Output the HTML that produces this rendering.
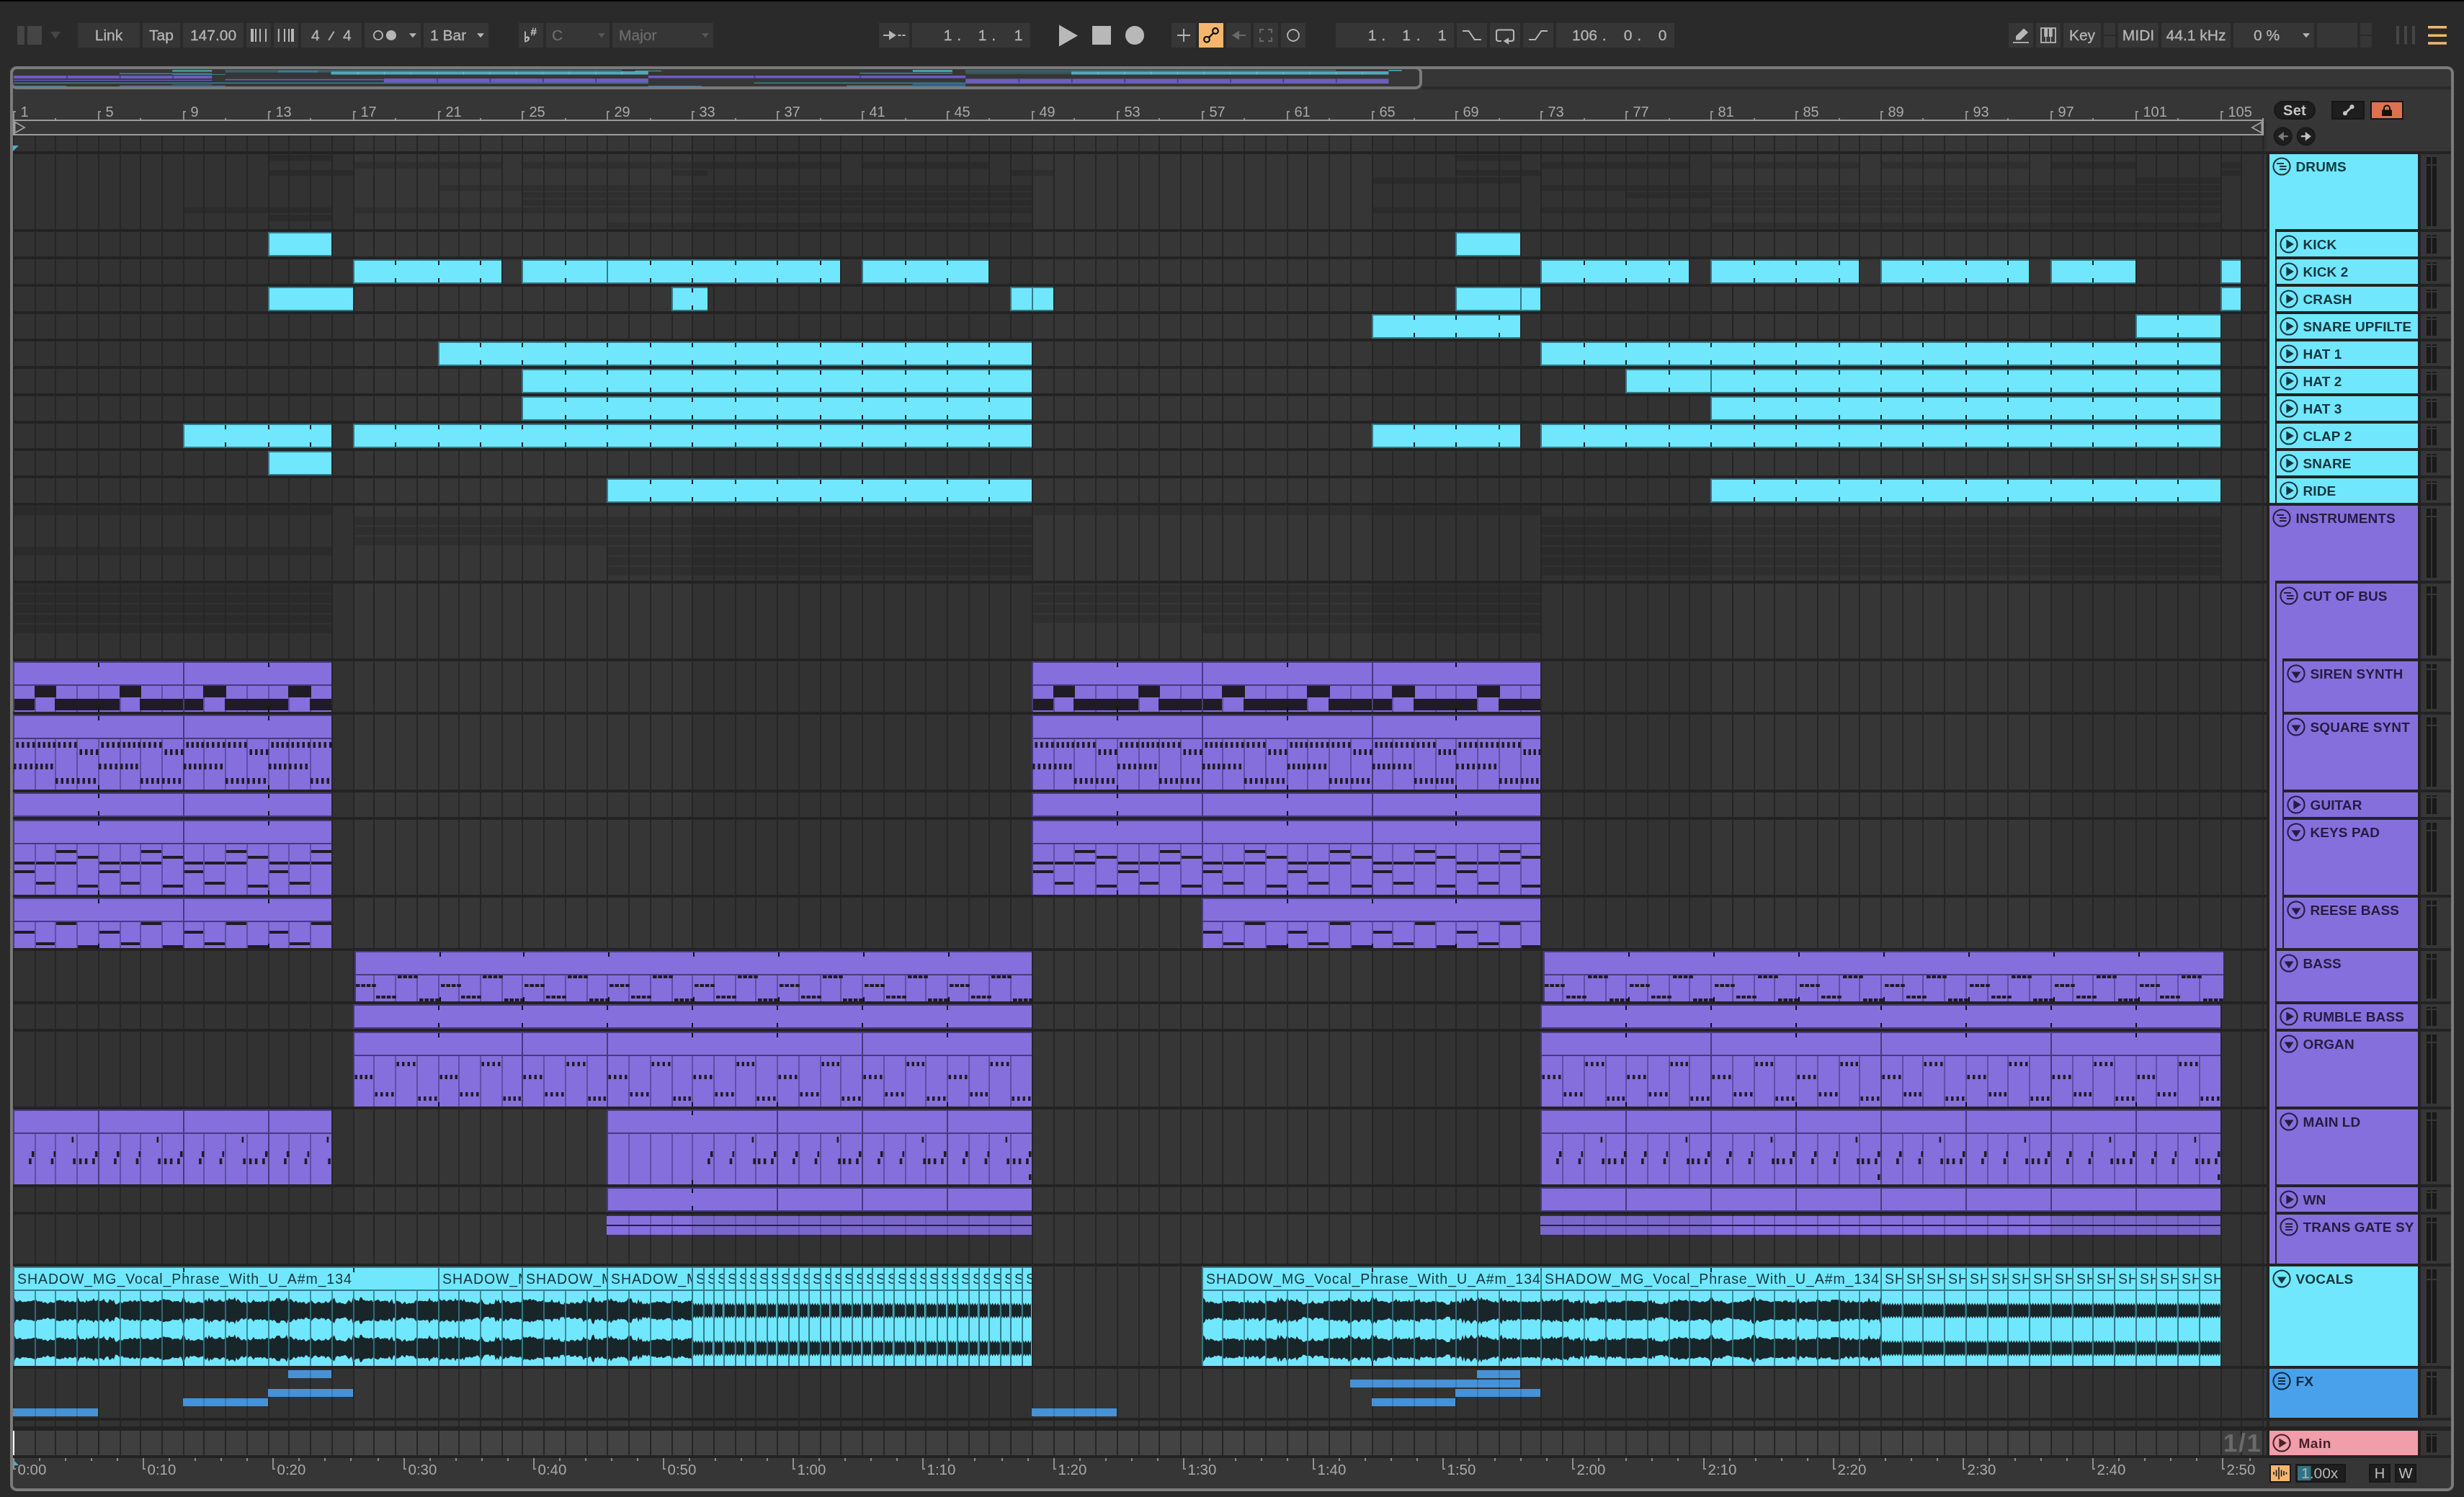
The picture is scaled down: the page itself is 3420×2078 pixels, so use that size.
<!DOCTYPE html><html><head><meta charset="utf-8"><title>Arrangement</title><style>

html,body{margin:0;padding:0;background:#2a2a2a;}
body{will-change:transform;width:3420px;height:2078px;position:relative;overflow:hidden;font-family:"Liberation Sans",sans-serif;color:#b6b6b6;}
.abs{position:absolute}
#top{position:absolute;left:0;top:0;width:3420px;height:92px;background:#2a2a2a}
#topline{position:absolute;left:0;top:0;width:3420px;height:2px;background:#000}
.b{position:absolute;top:32px;height:34px;background:#363636;font-size:21px;line-height:34px;text-align:center;white-space:nowrap;-webkit-text-stroke:0.3px currentColor}
.b span{position:absolute;top:0;line-height:33px}
.dim{color:#6c6c6c}
#frame{position:absolute;left:14px;top:92px;width:3392px;height:1978px;box-sizing:border-box;border:4px solid #7a7a7a;border-radius:9px;background:#363636}
#ovbox{position:absolute;left:14px;top:92px;width:1960px;height:32px;box-sizing:border-box;border:4px solid #7a7a7a;border-radius:9px}
#arr{position:absolute;left:0;top:0}
.rn{position:absolute;top:142.5px;font-size:20px;line-height:24px;color:#a9a9a9}
.tn{position:absolute;top:2027.5px;font-size:20.5px;line-height:24px;color:#a9a9a9}
.vl{position:absolute;top:1759px;height:32px;line-height:33px;font-size:19.5px;color:#15343c;white-space:nowrap;overflow:hidden;letter-spacing:0.93px}
.th{position:absolute;box-sizing:border-box;font-weight:bold;font-size:19px;white-space:nowrap;overflow:hidden}
.th b{position:absolute;font-weight:bold;letter-spacing:0.1px}
.m{position:absolute;width:6px;background:#1a1a1a}

</style></head><body>
<div id="frame"></div>
<svg id="arr" width="3420" height="2078" viewBox="0 0 3420 2078"><defs></defs><rect x="1973" y="120" width="1429" height="4" fill="#2b2b2b"/><rect x="19" y="105" width="275.25" height="4" fill="#6f5bc2" opacity="1"/><rect x="19" y="110.8" width="275.25" height="1.2" fill="#6f5bc2" opacity="1"/><rect x="19" y="114.6" width="880.8" height="1.2" fill="#3f9fb3" opacity="0.9"/><rect x="19" y="119" width="73.4" height="1.3" fill="#3b7db8" opacity="1"/><rect x="165.8" y="118.6" width="146.8" height="1.3" fill="#3b7db8" opacity="0.8"/><rect x="239.2" y="117.2" width="55.05" height="1.2" fill="#3b7db8" opacity="0.7"/><rect x="165.8" y="101.6" width="128.45" height="1.3" fill="#3f9fb3" opacity="0.9"/><rect x="239.2" y="97.4" width="55.05" height="2" fill="#4fb3c6" opacity="1"/><rect x="239.2" y="103" width="73.4" height="1" fill="#3f9fb3" opacity="0.7"/><rect x="312.6" y="97.4" width="146.8" height="1.1" fill="#3f9fb3" opacity="0.75"/><rect x="312.6" y="99.3" width="146.8" height="1.1" fill="#3f9fb3" opacity="0.6"/><rect x="386" y="98" width="55.05" height="2.6" fill="#3f9fb3" opacity="0.45"/><rect x="459.4" y="97" width="403.7" height="1" fill="#3f9fb3" opacity="0.8"/><rect x="459.4" y="99" width="440.4" height="4.5" fill="#4fb3c6" opacity="0.92"/><rect x="881.45" y="98" width="36.7" height="1" fill="#4fb3c6" opacity="0.9"/><rect x="312.6" y="109.8" width="220.2" height="1.6" fill="#6f5bc2" opacity="1"/><rect x="532.8" y="109" width="367" height="5.5" fill="#6f5bc2" opacity="1"/><rect x="899.8" y="105" width="440.4" height="3.5" fill="#6f5bc2" opacity="1"/><rect x="1046.6" y="114.6" width="880.8" height="1.2" fill="#3f9fb3" opacity="0.9"/><rect x="899.8" y="119" width="73.4" height="1.3" fill="#3b7db8" opacity="1"/><rect x="1175.05" y="118.4" width="165.15" height="1.6" fill="#3b7db8" opacity="0.9"/><rect x="1266.8" y="116.4" width="73.4" height="1.4" fill="#3b7db8" opacity="0.8"/><rect x="1193.4" y="101" width="128.45" height="1.2" fill="#3f9fb3" opacity="0.9"/><rect x="1266.8" y="97" width="55.05" height="3" fill="#4fb3c6" opacity="0.85"/><rect x="1340.2" y="97.4" width="146.8" height="1" fill="#3f9fb3" opacity="0.8"/><rect x="1340.2" y="99.4" width="146.8" height="1" fill="#3f9fb3" opacity="0.7"/><rect x="1340.2" y="101.4" width="146.8" height="1" fill="#3f9fb3" opacity="0.6"/><rect x="1487" y="97" width="367" height="1" fill="#3f9fb3" opacity="0.8"/><rect x="1487" y="99" width="440.4" height="4.5" fill="#4fb3c6" opacity="0.92"/><rect x="1340.2" y="109.4" width="587.2" height="5.6" fill="#6f5bc2" opacity="1"/><rect x="1927.4" y="97" width="18.35" height="1.5" fill="#4fb3c6" opacity="1"/><rect x="92.4" y="105" width="1.6" height="4" fill="#4633a0"/><rect x="165.8" y="105" width="1.6" height="4" fill="#4633a0"/><rect x="239.2" y="105" width="1.6" height="4" fill="#4633a0"/><rect x="606.2" y="109" width="1.6" height="5.5" fill="#4633a0"/><rect x="679.6" y="109" width="1.6" height="5.5" fill="#4633a0"/><rect x="753" y="109" width="1.6" height="5.5" fill="#4633a0"/><rect x="826.4" y="109" width="1.6" height="5.5" fill="#4633a0"/><rect x="1046.6" y="105" width="1.6" height="3.5" fill="#4633a0"/><rect x="1193.4" y="105" width="1.6" height="3.5" fill="#4633a0"/><rect x="1413.6" y="109.4" width="1.6" height="5.6" fill="#4633a0"/><rect x="1487" y="109.4" width="1.6" height="5.6" fill="#4633a0"/><rect x="1560.4" y="109.4" width="1.6" height="5.6" fill="#4633a0"/><rect x="1633.8" y="109.4" width="1.6" height="5.6" fill="#4633a0"/><rect x="1707.2" y="109.4" width="1.6" height="5.6" fill="#4633a0"/><rect x="1780.6" y="109.4" width="1.6" height="5.6" fill="#4633a0"/><rect x="1854" y="109.4" width="1.6" height="5.6" fill="#4633a0"/><rect x="496.1" y="99" width="1" height="4.5" fill="#7fd0de" opacity=".6"/><rect x="532.8" y="99" width="1" height="4.5" fill="#7fd0de" opacity=".6"/><rect x="569.5" y="99" width="1" height="4.5" fill="#7fd0de" opacity=".6"/><rect x="606.2" y="99" width="1" height="4.5" fill="#7fd0de" opacity=".6"/><rect x="642.9" y="99" width="1" height="4.5" fill="#7fd0de" opacity=".6"/><rect x="679.6" y="99" width="1" height="4.5" fill="#7fd0de" opacity=".6"/><rect x="716.3" y="99" width="1" height="4.5" fill="#7fd0de" opacity=".6"/><rect x="753" y="99" width="1" height="4.5" fill="#7fd0de" opacity=".6"/><rect x="789.7" y="99" width="1" height="4.5" fill="#7fd0de" opacity=".6"/><rect x="826.4" y="99" width="1" height="4.5" fill="#7fd0de" opacity=".6"/><rect x="863.1" y="99" width="1" height="4.5" fill="#7fd0de" opacity=".6"/><rect x="1523.7" y="99" width="1" height="4.5" fill="#7fd0de" opacity=".6"/><rect x="1560.4" y="99" width="1" height="4.5" fill="#7fd0de" opacity=".6"/><rect x="1597.1" y="99" width="1" height="4.5" fill="#7fd0de" opacity=".6"/><rect x="1633.8" y="99" width="1" height="4.5" fill="#7fd0de" opacity=".6"/><rect x="1670.5" y="99" width="1" height="4.5" fill="#7fd0de" opacity=".6"/><rect x="1707.2" y="99" width="1" height="4.5" fill="#7fd0de" opacity=".6"/><rect x="1743.9" y="99" width="1" height="4.5" fill="#7fd0de" opacity=".6"/><rect x="1780.6" y="99" width="1" height="4.5" fill="#7fd0de" opacity=".6"/><rect x="1817.3" y="99" width="1" height="4.5" fill="#7fd0de" opacity=".6"/><rect x="1854" y="99" width="1" height="4.5" fill="#7fd0de" opacity=".6"/><rect x="1890.7" y="99" width="1" height="4.5" fill="#7fd0de" opacity=".6"/><path d="M18 154h4v2h-2v10h-2zM76 164h2v2h-2zM136 154h4v2h-2v10h-2zM194 164h2v2h-2zM254 154h4v2h-2v10h-2zM312 164h2v2h-2zM372 154h4v2h-2v10h-2zM430 164h2v2h-2zM490 154h4v2h-2v10h-2zM548 164h2v2h-2zM608 154h4v2h-2v10h-2zM666 164h2v2h-2zM724 154h4v2h-2v10h-2zM784 164h2v2h-2zM842 154h4v2h-2v10h-2zM902 164h2v2h-2zM960 154h4v2h-2v10h-2zM1020 164h2v2h-2zM1078 154h4v2h-2v10h-2zM1138 164h2v2h-2zM1196 154h4v2h-2v10h-2zM1256 164h2v2h-2zM1314 154h4v2h-2v10h-2zM1372 164h2v2h-2zM1432 154h4v2h-2v10h-2zM1490 164h2v2h-2zM1550 154h4v2h-2v10h-2zM1608 164h2v2h-2zM1668 154h4v2h-2v10h-2zM1726 164h2v2h-2zM1786 154h4v2h-2v10h-2zM1844 164h2v2h-2zM1904 154h4v2h-2v10h-2zM1962 164h2v2h-2zM2020 154h4v2h-2v10h-2zM2080 164h2v2h-2zM2138 154h4v2h-2v10h-2zM2198 164h2v2h-2zM2256 154h4v2h-2v10h-2zM2316 164h2v2h-2zM2374 154h4v2h-2v10h-2zM2434 164h2v2h-2zM2492 154h4v2h-2v10h-2zM2552 164h2v2h-2zM2610 154h4v2h-2v10h-2zM2668 164h2v2h-2zM2728 154h4v2h-2v10h-2zM2786 164h2v2h-2zM2846 154h4v2h-2v10h-2zM2904 164h2v2h-2zM2964 154h4v2h-2v10h-2zM3022 164h2v2h-2zM3082 154h4v2h-2v10h-2zM3140 164h2v2h-2z" fill="#8f8f8f"/><path d="M18 166h3124v2h-3124zM18 186h3124v2h-3124zM3140 164h2v24h-2zM18 166h2v22h-2z" fill="#9c9c9c"/><path d="M20.6 169.4L34 177L20.6 184.6Z" stroke="#9c9c9c" stroke-width="1.8" fill="none"/><path d="M3139.4 169.4L3126 177L3139.4 184.6Z" stroke="#9c9c9c" stroke-width="1.8" fill="none"/><rect x="3142" y="168" width="4" height="42" fill="#303030"/><rect x="18" y="188" width="472" height="1832" fill="#323232"/><rect x="490" y="188" width="470" height="1832" fill="#363636"/><rect x="960" y="188" width="472" height="1832" fill="#323232"/><rect x="1432" y="188" width="472" height="1832" fill="#363636"/><rect x="1904" y="188" width="470" height="1832" fill="#323232"/><rect x="2374" y="188" width="472" height="1832" fill="#363636"/><rect x="2846" y="188" width="294" height="1832" fill="#323232"/><rect x="18" y="1986" width="3122" height="34" fill="#ffffff" fill-opacity="0.065"/><path d="M372 215h88v8h-88zM2020 215h90v8h-90zM490 225h206v9h-206zM724 225h118v9h-118zM842 225h324v9h-324zM1196 225h176v9h-176zM2138 225h206v9h-206zM2374 225h206v9h-206zM2610 225h206v9h-206zM2846 225h118v9h-118zM3082 225h28v9h-28zM372 236h118v8h-118zM932 236h50v8h-50zM1402 236h30v8h-30zM1432 236h30v8h-30zM2020 236h90v8h-90zM2110 236h28v8h-28zM3082 236h28v8h-28zM1904 246h206v9h-206zM2964 246h118v9h-118zM608 257h824v8h-824zM2138 257h944v8h-944zM724 267h708v8h-708zM2256 267h118v8h-118zM2374 267h708v8h-708zM724 277h708v9h-708zM2374 277h708v9h-708zM254 288h206v8h-206zM490 288h942v8h-942zM1904 288h206v8h-206zM2138 288h944v8h-944zM372 298h88v9h-88zM842 309h590v8h-590zM2374 309h708v8h-708zM490 731h942v12h-942zM2138 731h944v12h-944zM842 773h236v12h-236zM1078 773h118v12h-118zM1196 773h118v12h-118zM1314 773h118v12h-118zM2138 773h118v12h-118zM2256 773h118v12h-118zM2374 773h118v12h-118zM2492 773h118v12h-118zM2610 773h118v12h-118zM2728 773h118v12h-118zM2846 773h118v12h-118zM2964 773h118v12h-118zM490 717h942v12h-942zM2138 717h944v12h-944zM490 745h234v12h-234zM724 745h118v12h-118zM842 745h354v12h-354zM1196 745h236v12h-236zM2138 745h236v12h-236zM2374 745h236v12h-236zM2610 745h236v12h-236zM2846 745h236v12h-236zM18 759h118v12h-118zM136 759h118v12h-118zM254 759h118v12h-118zM372 759h88v12h-88zM842 759h236v12h-236zM1078 759h118v12h-118zM1196 759h118v12h-118zM1314 759h118v12h-118zM2138 759h118v12h-118zM2256 759h118v12h-118zM2374 759h118v12h-118zM2492 759h118v12h-118zM2610 759h118v12h-118zM2728 759h118v12h-118zM2846 759h118v12h-118zM2964 759h118v12h-118zM842 787h590v12h-590zM2138 787h944v12h-944zM18 703h236v12h-236zM254 703h206v12h-206zM1432 703h236v12h-236zM1668 703h236v12h-236zM1904 703h234v12h-234zM1668 703h470v12h-470zM18 839h236v12h-236zM254 839h206v12h-206zM1432 839h236v12h-236zM1668 839h236v12h-236zM1904 839h234v12h-234zM18 811h236v12h-236zM18 825h236v12h-236zM18 853h236v12h-236zM254 811h206v12h-206zM254 825h206v12h-206zM254 853h206v12h-206zM1432 811h236v12h-236zM1432 825h236v12h-236zM1432 853h236v12h-236zM1668 811h236v12h-236zM1668 825h236v12h-236zM1668 853h236v12h-236zM1904 811h234v12h-234zM1904 825h234v12h-234zM1904 853h234v12h-234zM18 867h236v12h-236zM254 867h206v12h-206zM1668 867h470v12h-470z" fill="#000" fill-opacity="0.125"/><path d="M18 188h2v1832h-2zM48 188h2v1832h-2zM76 188h2v1832h-2zM106 188h2v1832h-2zM136 188h2v1832h-2zM166 188h2v1832h-2zM194 188h2v1832h-2zM224 188h2v1832h-2zM254 188h2v1832h-2zM282 188h2v1832h-2zM312 188h2v1832h-2zM342 188h2v1832h-2zM372 188h2v1832h-2zM400 188h2v1832h-2zM430 188h2v1832h-2zM460 188h2v1832h-2zM490 188h2v1832h-2zM518 188h2v1832h-2zM548 188h2v1832h-2zM578 188h2v1832h-2zM608 188h2v1832h-2zM636 188h2v1832h-2zM666 188h2v1832h-2zM696 188h2v1832h-2zM724 188h2v1832h-2zM754 188h2v1832h-2zM784 188h2v1832h-2zM814 188h2v1832h-2zM842 188h2v1832h-2zM872 188h2v1832h-2zM902 188h2v1832h-2zM932 188h2v1832h-2zM960 188h2v1832h-2zM990 188h2v1832h-2zM1020 188h2v1832h-2zM1048 188h2v1832h-2zM1078 188h2v1832h-2zM1108 188h2v1832h-2zM1138 188h2v1832h-2zM1166 188h2v1832h-2zM1196 188h2v1832h-2zM1226 188h2v1832h-2zM1256 188h2v1832h-2zM1284 188h2v1832h-2zM1314 188h2v1832h-2zM1344 188h2v1832h-2zM1372 188h2v1832h-2zM1402 188h2v1832h-2zM1432 188h2v1832h-2zM1462 188h2v1832h-2zM1490 188h2v1832h-2zM1520 188h2v1832h-2zM1550 188h2v1832h-2zM1580 188h2v1832h-2zM1608 188h2v1832h-2zM1638 188h2v1832h-2zM1668 188h2v1832h-2zM1696 188h2v1832h-2zM1726 188h2v1832h-2zM1756 188h2v1832h-2zM1786 188h2v1832h-2zM1814 188h2v1832h-2zM1844 188h2v1832h-2zM1874 188h2v1832h-2zM1904 188h2v1832h-2zM1932 188h2v1832h-2zM1962 188h2v1832h-2zM1992 188h2v1832h-2zM2020 188h2v1832h-2zM2050 188h2v1832h-2zM2080 188h2v1832h-2zM2110 188h2v1832h-2zM2138 188h2v1832h-2zM2168 188h2v1832h-2zM2198 188h2v1832h-2zM2228 188h2v1832h-2zM2256 188h2v1832h-2zM2286 188h2v1832h-2zM2316 188h2v1832h-2zM2344 188h2v1832h-2zM2374 188h2v1832h-2zM2404 188h2v1832h-2zM2434 188h2v1832h-2zM2462 188h2v1832h-2zM2492 188h2v1832h-2zM2522 188h2v1832h-2zM2552 188h2v1832h-2zM2580 188h2v1832h-2zM2610 188h2v1832h-2zM2640 188h2v1832h-2zM2668 188h2v1832h-2zM2698 188h2v1832h-2zM2728 188h2v1832h-2zM2758 188h2v1832h-2zM2786 188h2v1832h-2zM2816 188h2v1832h-2zM2846 188h2v1832h-2zM2876 188h2v1832h-2zM2904 188h2v1832h-2zM2934 188h2v1832h-2zM2964 188h2v1832h-2zM2992 188h2v1832h-2zM3022 188h2v1832h-2zM3052 188h2v1832h-2zM3082 188h2v1832h-2zM3110 188h2v1832h-2zM3140 188h2v1832h-2z" fill="#262626"/><path d="M18 210h3128v4h-3128zM18 318h3128v4h-3128zM18 356h3128v4h-3128zM18 394h3128v4h-3128zM18 432h3128v4h-3128zM18 470h3128v4h-3128zM18 508h3128v4h-3128zM18 546h3128v4h-3128zM18 584h3128v4h-3128zM18 622h3128v4h-3128zM18 660h3128v4h-3128zM18 698h3128v4h-3128zM18 806h3128v4h-3128zM18 914h3128v4h-3128zM18 988h3128v4h-3128zM18 1096h3128v4h-3128zM18 1134h3128v4h-3128zM18 1242h3128v4h-3128zM18 1316h3128v4h-3128zM18 1390h3128v4h-3128zM18 1428h3128v4h-3128zM18 1536h3128v4h-3128zM18 1644h3128v4h-3128zM18 1682h3128v4h-3128zM18 1754h3128v4h-3128zM18 1896h3128v4h-3128zM18 1968h3128v4h-3128zM18 1980h3128v6h-3128zM18 2020h3128v4h-3128z" fill="#232323"/><path d="M372 322h88v34h-88zM2020 322h90v34h-90zM490 360h206v34h-206zM724 360h118v34h-118zM842 360h324v34h-324zM1196 360h176v34h-176zM2138 360h206v34h-206zM2374 360h206v34h-206zM2610 360h206v34h-206zM2846 360h118v34h-118zM3082 360h28v34h-28zM372 398h118v34h-118zM932 398h50v34h-50zM1402 398h30v34h-30zM1432 398h30v34h-30zM2020 398h90v34h-90zM2110 398h28v34h-28zM3082 398h28v34h-28zM1904 436h206v34h-206zM2964 436h118v34h-118zM608 474h824v34h-824zM2138 474h944v34h-944zM724 512h708v34h-708zM2256 512h118v34h-118zM2374 512h708v34h-708zM724 550h708v34h-708zM2374 550h708v34h-708zM254 588h206v34h-206zM490 588h942v34h-942zM1904 588h206v34h-206zM2138 588h944v34h-944zM372 626h88v34h-88zM842 664h590v34h-590zM2374 664h708v34h-708z" fill="#357987"/><path d="M374 324h86v30h-86zM2022 324h88v30h-88zM492 362h204v30h-204zM726 362h116v30h-116zM844 362h322v30h-322zM1198 362h174v30h-174zM2140 362h204v30h-204zM2376 362h204v30h-204zM2612 362h204v30h-204zM2848 362h116v30h-116zM3084 362h26v30h-26zM374 400h116v30h-116zM934 400h48v30h-48zM1404 400h28v30h-28zM1434 400h28v30h-28zM2022 400h88v30h-88zM2112 400h26v30h-26zM3084 400h26v30h-26zM1906 438h204v30h-204zM2966 438h116v30h-116zM610 476h822v30h-822zM2140 476h942v30h-942zM726 514h706v30h-706zM2258 514h116v30h-116zM2376 514h706v30h-706zM726 552h706v30h-706zM2376 552h706v30h-706zM256 590h204v30h-204zM492 590h940v30h-940zM1906 590h204v30h-204zM2140 590h942v30h-942zM374 628h86v30h-86zM844 666h588v30h-588zM2376 666h706v30h-706z" fill="#70e7fd"/><path d="M548 362h2v6h-2zM548 386h2v6h-2zM608 362h2v6h-2zM608 386h2v6h-2zM666 362h2v6h-2zM666 386h2v6h-2zM784 362h2v6h-2zM784 386h2v6h-2zM902 362h2v6h-2zM902 386h2v6h-2zM960 362h2v6h-2zM960 386h2v6h-2zM1020 362h2v6h-2zM1020 386h2v6h-2zM1078 362h2v6h-2zM1078 386h2v6h-2zM1138 362h2v6h-2zM1138 386h2v6h-2zM1256 362h2v6h-2zM1256 386h2v6h-2zM1314 362h2v6h-2zM1314 386h2v6h-2zM2198 362h2v6h-2zM2198 386h2v6h-2zM2256 362h2v6h-2zM2256 386h2v6h-2zM2316 362h2v6h-2zM2316 386h2v6h-2zM2434 362h2v6h-2zM2434 386h2v6h-2zM2492 362h2v6h-2zM2492 386h2v6h-2zM2552 362h2v6h-2zM2552 386h2v6h-2zM2668 362h2v6h-2zM2668 386h2v6h-2zM2728 362h2v6h-2zM2728 386h2v6h-2zM2786 362h2v6h-2zM2786 386h2v6h-2zM2904 362h2v6h-2zM2904 386h2v6h-2zM960 400h2v6h-2zM960 424h2v6h-2zM1962 438h2v6h-2zM1962 462h2v6h-2zM2020 438h2v6h-2zM2020 462h2v6h-2zM2080 438h2v6h-2zM2080 462h2v6h-2zM3022 438h2v6h-2zM3022 462h2v6h-2zM666 476h2v6h-2zM666 500h2v6h-2zM724 476h2v6h-2zM724 500h2v6h-2zM784 476h2v6h-2zM784 500h2v6h-2zM842 476h2v6h-2zM842 500h2v6h-2zM902 476h2v6h-2zM902 500h2v6h-2zM960 476h2v6h-2zM960 500h2v6h-2zM1020 476h2v6h-2zM1020 500h2v6h-2zM1078 476h2v6h-2zM1078 500h2v6h-2zM1138 476h2v6h-2zM1138 500h2v6h-2zM1196 476h2v6h-2zM1196 500h2v6h-2zM1256 476h2v6h-2zM1256 500h2v6h-2zM1314 476h2v6h-2zM1314 500h2v6h-2zM1372 476h2v6h-2zM1372 500h2v6h-2zM2198 476h2v6h-2zM2198 500h2v6h-2zM2256 476h2v6h-2zM2256 500h2v6h-2zM2316 476h2v6h-2zM2316 500h2v6h-2zM2374 476h2v6h-2zM2374 500h2v6h-2zM2434 476h2v6h-2zM2434 500h2v6h-2zM2492 476h2v6h-2zM2492 500h2v6h-2zM2552 476h2v6h-2zM2552 500h2v6h-2zM2610 476h2v6h-2zM2610 500h2v6h-2zM2668 476h2v6h-2zM2668 500h2v6h-2zM2728 476h2v6h-2zM2728 500h2v6h-2zM2786 476h2v6h-2zM2786 500h2v6h-2zM2846 476h2v6h-2zM2846 500h2v6h-2zM2904 476h2v6h-2zM2904 500h2v6h-2zM2964 476h2v6h-2zM2964 500h2v6h-2zM3022 476h2v6h-2zM3022 500h2v6h-2zM784 514h2v6h-2zM784 538h2v6h-2zM842 514h2v6h-2zM842 538h2v6h-2zM902 514h2v6h-2zM902 538h2v6h-2zM960 514h2v6h-2zM960 538h2v6h-2zM1020 514h2v6h-2zM1020 538h2v6h-2zM1078 514h2v6h-2zM1078 538h2v6h-2zM1138 514h2v6h-2zM1138 538h2v6h-2zM1196 514h2v6h-2zM1196 538h2v6h-2zM1256 514h2v6h-2zM1256 538h2v6h-2zM1314 514h2v6h-2zM1314 538h2v6h-2zM1372 514h2v6h-2zM1372 538h2v6h-2zM2316 514h2v6h-2zM2316 538h2v6h-2zM2434 514h2v6h-2zM2434 538h2v6h-2zM2492 514h2v6h-2zM2492 538h2v6h-2zM2552 514h2v6h-2zM2552 538h2v6h-2zM2610 514h2v6h-2zM2610 538h2v6h-2zM2668 514h2v6h-2zM2668 538h2v6h-2zM2728 514h2v6h-2zM2728 538h2v6h-2zM2786 514h2v6h-2zM2786 538h2v6h-2zM2846 514h2v6h-2zM2846 538h2v6h-2zM2904 514h2v6h-2zM2904 538h2v6h-2zM2964 514h2v6h-2zM2964 538h2v6h-2zM3022 514h2v6h-2zM3022 538h2v6h-2zM784 552h2v6h-2zM784 576h2v6h-2zM842 552h2v6h-2zM842 576h2v6h-2zM902 552h2v6h-2zM902 576h2v6h-2zM960 552h2v6h-2zM960 576h2v6h-2zM1020 552h2v6h-2zM1020 576h2v6h-2zM1078 552h2v6h-2zM1078 576h2v6h-2zM1138 552h2v6h-2zM1138 576h2v6h-2zM1196 552h2v6h-2zM1196 576h2v6h-2zM1256 552h2v6h-2zM1256 576h2v6h-2zM1314 552h2v6h-2zM1314 576h2v6h-2zM1372 552h2v6h-2zM1372 576h2v6h-2zM2434 552h2v6h-2zM2434 576h2v6h-2zM2492 552h2v6h-2zM2492 576h2v6h-2zM2552 552h2v6h-2zM2552 576h2v6h-2zM2610 552h2v6h-2zM2610 576h2v6h-2zM2668 552h2v6h-2zM2668 576h2v6h-2zM2728 552h2v6h-2zM2728 576h2v6h-2zM2786 552h2v6h-2zM2786 576h2v6h-2zM2846 552h2v6h-2zM2846 576h2v6h-2zM2904 552h2v6h-2zM2904 576h2v6h-2zM2964 552h2v6h-2zM2964 576h2v6h-2zM3022 552h2v6h-2zM3022 576h2v6h-2zM312 590h2v6h-2zM312 614h2v6h-2zM372 590h2v6h-2zM372 614h2v6h-2zM430 590h2v6h-2zM430 614h2v6h-2zM548 590h2v6h-2zM548 614h2v6h-2zM608 590h2v6h-2zM608 614h2v6h-2zM666 590h2v6h-2zM666 614h2v6h-2zM724 590h2v6h-2zM724 614h2v6h-2zM784 590h2v6h-2zM784 614h2v6h-2zM842 590h2v6h-2zM842 614h2v6h-2zM902 590h2v6h-2zM902 614h2v6h-2zM960 590h2v6h-2zM960 614h2v6h-2zM1020 590h2v6h-2zM1020 614h2v6h-2zM1078 590h2v6h-2zM1078 614h2v6h-2zM1138 590h2v6h-2zM1138 614h2v6h-2zM1196 590h2v6h-2zM1196 614h2v6h-2zM1256 590h2v6h-2zM1256 614h2v6h-2zM1314 590h2v6h-2zM1314 614h2v6h-2zM1372 590h2v6h-2zM1372 614h2v6h-2zM1962 590h2v6h-2zM1962 614h2v6h-2zM2020 590h2v6h-2zM2020 614h2v6h-2zM2080 590h2v6h-2zM2080 614h2v6h-2zM2198 590h2v6h-2zM2198 614h2v6h-2zM2256 590h2v6h-2zM2256 614h2v6h-2zM2316 590h2v6h-2zM2316 614h2v6h-2zM2374 590h2v6h-2zM2374 614h2v6h-2zM2434 590h2v6h-2zM2434 614h2v6h-2zM2492 590h2v6h-2zM2492 614h2v6h-2zM2552 590h2v6h-2zM2552 614h2v6h-2zM2610 590h2v6h-2zM2610 614h2v6h-2zM2668 590h2v6h-2zM2668 614h2v6h-2zM2728 590h2v6h-2zM2728 614h2v6h-2zM2786 590h2v6h-2zM2786 614h2v6h-2zM2846 590h2v6h-2zM2846 614h2v6h-2zM2904 590h2v6h-2zM2904 614h2v6h-2zM2964 590h2v6h-2zM2964 614h2v6h-2zM3022 590h2v6h-2zM3022 614h2v6h-2zM902 666h2v6h-2zM902 690h2v6h-2zM960 666h2v6h-2zM960 690h2v6h-2zM1020 666h2v6h-2zM1020 690h2v6h-2zM1078 666h2v6h-2zM1078 690h2v6h-2zM1138 666h2v6h-2zM1138 690h2v6h-2zM1196 666h2v6h-2zM1196 690h2v6h-2zM1256 666h2v6h-2zM1256 690h2v6h-2zM1314 666h2v6h-2zM1314 690h2v6h-2zM1372 666h2v6h-2zM1372 690h2v6h-2zM2434 666h2v6h-2zM2434 690h2v6h-2zM2492 666h2v6h-2zM2492 690h2v6h-2zM2552 666h2v6h-2zM2552 690h2v6h-2zM2610 666h2v6h-2zM2610 690h2v6h-2zM2668 666h2v6h-2zM2668 690h2v6h-2zM2728 666h2v6h-2zM2728 690h2v6h-2zM2786 666h2v6h-2zM2786 690h2v6h-2zM2846 666h2v6h-2zM2846 690h2v6h-2zM2904 666h2v6h-2zM2904 690h2v6h-2zM2964 666h2v6h-2zM2964 690h2v6h-2zM3022 666h2v6h-2zM3022 690h2v6h-2z" fill="#0c2228"/><path d="M18 1100h236v34h-236zM254 1100h206v34h-206zM1432 1100h236v34h-236zM1668 1100h236v34h-236zM1904 1100h234v34h-234zM490 1394h942v34h-942zM2138 1394h944v34h-944zM842 1648h236v34h-236zM1078 1648h118v34h-118zM1196 1648h118v34h-118zM1314 1648h118v34h-118zM2138 1648h118v34h-118zM2256 1648h118v34h-118zM2374 1648h118v34h-118zM2492 1648h118v34h-118zM2610 1648h118v34h-118zM2728 1648h118v34h-118zM2846 1648h118v34h-118zM2964 1648h118v34h-118zM18 918h236v34h-236zM18 952h2v36h-2zM18 992h236v34h-236zM18 1026h2v70h-2zM18 1138h236v34h-236zM18 1172h2v70h-2zM254 918h206v34h-206zM254 952h2v36h-2zM254 992h206v34h-206zM254 1026h2v70h-2zM254 1138h206v34h-206zM254 1172h2v70h-2zM1432 918h236v34h-236zM1432 952h2v36h-2zM1432 992h236v34h-236zM1432 1026h2v70h-2zM1432 1138h236v34h-236zM1432 1172h2v70h-2zM1668 918h236v34h-236zM1668 952h2v36h-2zM1668 992h236v34h-236zM1668 1026h2v70h-2zM1668 1138h236v34h-236zM1668 1172h2v70h-2zM1904 918h234v34h-234zM1904 952h2v36h-2zM1904 992h234v34h-234zM1904 1026h2v70h-2zM1904 1138h234v34h-234zM1904 1172h2v70h-2zM18 1246h236v34h-236zM18 1280h2v36h-2zM254 1246h206v34h-206zM254 1280h2v36h-2zM1668 1246h470v34h-470zM1668 1280h2v36h-2zM492 1320h940v34h-940zM492 1354h2v36h-2zM2142 1320h944v34h-944zM2142 1354h2v36h-2zM490 1432h234v34h-234zM490 1466h2v70h-2zM724 1432h118v34h-118zM724 1466h2v70h-2zM842 1432h354v34h-354zM842 1466h2v70h-2zM1196 1432h236v34h-236zM1196 1466h2v70h-2zM2138 1432h236v34h-236zM2138 1466h2v70h-2zM2374 1432h236v34h-236zM2374 1466h2v70h-2zM2610 1432h236v34h-236zM2610 1466h2v70h-2zM2846 1432h236v34h-236zM2846 1466h2v70h-2zM18 1540h118v34h-118zM18 1574h2v70h-2zM136 1540h118v34h-118zM136 1574h2v70h-2zM254 1540h118v34h-118zM254 1574h2v70h-2zM372 1540h88v34h-88zM372 1574h2v70h-2zM842 1540h236v34h-236zM842 1574h2v70h-2zM1078 1540h118v34h-118zM1078 1574h2v70h-2zM1196 1540h118v34h-118zM1196 1574h2v70h-2zM1314 1540h118v34h-118zM1314 1574h2v70h-2zM2138 1540h118v34h-118zM2138 1574h2v70h-2zM2256 1540h118v34h-118zM2256 1574h2v70h-2zM2374 1540h118v34h-118zM2374 1574h2v70h-2zM2492 1540h118v34h-118zM2492 1574h2v70h-2zM2610 1540h118v34h-118zM2610 1574h2v70h-2zM2728 1540h118v34h-118zM2728 1574h2v70h-2zM2846 1540h118v34h-118zM2846 1574h2v70h-2zM2964 1540h118v34h-118zM2964 1574h2v70h-2z" fill="#473a80"/><path d="M20 1102h234v30h-234zM256 1102h204v30h-204zM1434 1102h234v30h-234zM1670 1102h234v30h-234zM1906 1102h232v30h-232zM492 1396h940v30h-940zM2140 1396h942v30h-942zM844 1650h234v30h-234zM1080 1650h116v30h-116zM1198 1650h116v30h-116zM1316 1650h116v30h-116zM2140 1650h116v30h-116zM2258 1650h116v30h-116zM2376 1650h116v30h-116zM2494 1650h116v30h-116zM2612 1650h116v30h-116zM2730 1650h116v30h-116zM2848 1650h116v30h-116zM2966 1650h116v30h-116zM20 920h234v30h-234zM20 952h234v36h-234zM20 994h234v30h-234zM20 1026h234v70h-234zM20 1140h234v30h-234zM20 1172h234v70h-234zM256 920h204v30h-204zM256 952h204v36h-204zM256 994h204v30h-204zM256 1026h204v70h-204zM256 1140h204v30h-204zM256 1172h204v70h-204zM1434 920h234v30h-234zM1434 952h234v36h-234zM1434 994h234v30h-234zM1434 1026h234v70h-234zM1434 1140h234v30h-234zM1434 1172h234v70h-234zM1670 920h234v30h-234zM1670 952h234v36h-234zM1670 994h234v30h-234zM1670 1026h234v70h-234zM1670 1140h234v30h-234zM1670 1172h234v70h-234zM1906 920h232v30h-232zM1906 952h232v36h-232zM1906 994h232v30h-232zM1906 1026h232v70h-232zM1906 1140h232v30h-232zM1906 1172h232v70h-232zM20 1248h234v30h-234zM20 1280h234v36h-234zM256 1248h204v30h-204zM256 1280h204v36h-204zM1670 1248h468v30h-468zM1670 1280h468v36h-468zM494 1322h938v30h-938zM494 1354h938v36h-938zM2144 1322h942v30h-942zM2144 1354h942v36h-942zM492 1434h232v30h-232zM492 1466h232v70h-232zM726 1434h116v30h-116zM726 1466h116v70h-116zM844 1434h352v30h-352zM844 1466h352v70h-352zM1198 1434h234v30h-234zM1198 1466h234v70h-234zM2140 1434h234v30h-234zM2140 1466h234v70h-234zM2376 1434h234v30h-234zM2376 1466h234v70h-234zM2612 1434h234v30h-234zM2612 1466h234v70h-234zM2848 1434h234v30h-234zM2848 1466h234v70h-234zM20 1542h116v30h-116zM20 1574h116v70h-116zM138 1542h116v30h-116zM138 1574h116v70h-116zM256 1542h116v30h-116zM256 1574h116v70h-116zM374 1542h86v30h-86zM374 1574h86v70h-86zM844 1542h234v30h-234zM844 1574h234v70h-234zM1080 1542h116v30h-116zM1080 1574h116v70h-116zM1198 1542h116v30h-116zM1198 1574h116v70h-116zM1316 1542h116v30h-116zM1316 1574h116v70h-116zM2140 1542h116v30h-116zM2140 1574h116v70h-116zM2258 1542h116v30h-116zM2258 1574h116v70h-116zM2376 1542h116v30h-116zM2376 1574h116v70h-116zM2494 1542h116v30h-116zM2494 1574h116v70h-116zM2612 1542h116v30h-116zM2612 1574h116v70h-116zM2730 1542h116v30h-116zM2730 1574h116v70h-116zM2848 1542h116v30h-116zM2848 1574h116v70h-116zM2966 1542h116v30h-116zM2966 1574h116v70h-116z" fill="#856fdc"/><path d="M48 952h2v36h-2zM76 952h2v36h-2zM106 952h2v36h-2zM136 952h2v36h-2zM166 952h2v36h-2zM194 952h2v36h-2zM224 952h2v36h-2zM48 1026h2v70h-2zM76 1026h2v70h-2zM106 1026h2v70h-2zM136 1026h2v70h-2zM166 1026h2v70h-2zM194 1026h2v70h-2zM224 1026h2v70h-2zM48 1172h2v70h-2zM76 1172h2v70h-2zM106 1172h2v70h-2zM136 1172h2v70h-2zM166 1172h2v70h-2zM194 1172h2v70h-2zM224 1172h2v70h-2zM282 952h2v36h-2zM312 952h2v36h-2zM342 952h2v36h-2zM372 952h2v36h-2zM400 952h2v36h-2zM430 952h2v36h-2zM282 1026h2v70h-2zM312 1026h2v70h-2zM342 1026h2v70h-2zM372 1026h2v70h-2zM400 1026h2v70h-2zM430 1026h2v70h-2zM282 1172h2v70h-2zM312 1172h2v70h-2zM342 1172h2v70h-2zM372 1172h2v70h-2zM400 1172h2v70h-2zM430 1172h2v70h-2zM1462 952h2v36h-2zM1490 952h2v36h-2zM1520 952h2v36h-2zM1550 952h2v36h-2zM1580 952h2v36h-2zM1608 952h2v36h-2zM1638 952h2v36h-2zM1462 1026h2v70h-2zM1490 1026h2v70h-2zM1520 1026h2v70h-2zM1550 1026h2v70h-2zM1580 1026h2v70h-2zM1608 1026h2v70h-2zM1638 1026h2v70h-2zM1462 1172h2v70h-2zM1490 1172h2v70h-2zM1520 1172h2v70h-2zM1550 1172h2v70h-2zM1580 1172h2v70h-2zM1608 1172h2v70h-2zM1638 1172h2v70h-2zM1696 952h2v36h-2zM1726 952h2v36h-2zM1756 952h2v36h-2zM1786 952h2v36h-2zM1814 952h2v36h-2zM1844 952h2v36h-2zM1874 952h2v36h-2zM1696 1026h2v70h-2zM1726 1026h2v70h-2zM1756 1026h2v70h-2zM1786 1026h2v70h-2zM1814 1026h2v70h-2zM1844 1026h2v70h-2zM1874 1026h2v70h-2zM1696 1172h2v70h-2zM1726 1172h2v70h-2zM1756 1172h2v70h-2zM1786 1172h2v70h-2zM1814 1172h2v70h-2zM1844 1172h2v70h-2zM1874 1172h2v70h-2zM1932 952h2v36h-2zM1962 952h2v36h-2zM1992 952h2v36h-2zM2020 952h2v36h-2zM2050 952h2v36h-2zM2080 952h2v36h-2zM2110 952h2v36h-2zM1932 1026h2v70h-2zM1962 1026h2v70h-2zM1992 1026h2v70h-2zM2020 1026h2v70h-2zM2050 1026h2v70h-2zM2080 1026h2v70h-2zM2110 1026h2v70h-2zM1932 1172h2v70h-2zM1962 1172h2v70h-2zM1992 1172h2v70h-2zM2020 1172h2v70h-2zM2050 1172h2v70h-2zM2080 1172h2v70h-2zM2110 1172h2v70h-2zM48 1280h2v36h-2zM76 1280h2v36h-2zM106 1280h2v36h-2zM136 1280h2v36h-2zM166 1280h2v36h-2zM194 1280h2v36h-2zM224 1280h2v36h-2zM282 1280h2v36h-2zM312 1280h2v36h-2zM342 1280h2v36h-2zM372 1280h2v36h-2zM400 1280h2v36h-2zM430 1280h2v36h-2zM1696 1280h2v36h-2zM1726 1280h2v36h-2zM1756 1280h2v36h-2zM1786 1280h2v36h-2zM1814 1280h2v36h-2zM1844 1280h2v36h-2zM1874 1280h2v36h-2zM1904 1280h2v36h-2zM1932 1280h2v36h-2zM1962 1280h2v36h-2zM1992 1280h2v36h-2zM2020 1280h2v36h-2zM2050 1280h2v36h-2zM2080 1280h2v36h-2zM2110 1280h2v36h-2zM518 1354h2v36h-2zM548 1354h2v36h-2zM578 1354h2v36h-2zM608 1354h2v36h-2zM636 1354h2v36h-2zM666 1354h2v36h-2zM696 1354h2v36h-2zM724 1354h2v36h-2zM754 1354h2v36h-2zM784 1354h2v36h-2zM814 1354h2v36h-2zM842 1354h2v36h-2zM872 1354h2v36h-2zM902 1354h2v36h-2zM932 1354h2v36h-2zM960 1354h2v36h-2zM990 1354h2v36h-2zM1020 1354h2v36h-2zM1048 1354h2v36h-2zM1078 1354h2v36h-2zM1108 1354h2v36h-2zM1138 1354h2v36h-2zM1166 1354h2v36h-2zM1196 1354h2v36h-2zM1226 1354h2v36h-2zM1256 1354h2v36h-2zM1284 1354h2v36h-2zM1314 1354h2v36h-2zM1344 1354h2v36h-2zM1372 1354h2v36h-2zM1402 1354h2v36h-2zM2168 1354h2v36h-2zM2198 1354h2v36h-2zM2228 1354h2v36h-2zM2256 1354h2v36h-2zM2286 1354h2v36h-2zM2316 1354h2v36h-2zM2344 1354h2v36h-2zM2374 1354h2v36h-2zM2404 1354h2v36h-2zM2434 1354h2v36h-2zM2462 1354h2v36h-2zM2492 1354h2v36h-2zM2522 1354h2v36h-2zM2552 1354h2v36h-2zM2580 1354h2v36h-2zM2610 1354h2v36h-2zM2640 1354h2v36h-2zM2668 1354h2v36h-2zM2698 1354h2v36h-2zM2728 1354h2v36h-2zM2758 1354h2v36h-2zM2786 1354h2v36h-2zM2816 1354h2v36h-2zM2846 1354h2v36h-2zM2876 1354h2v36h-2zM2904 1354h2v36h-2zM2934 1354h2v36h-2zM2964 1354h2v36h-2zM2992 1354h2v36h-2zM3022 1354h2v36h-2zM3052 1354h2v36h-2zM518 1466h2v70h-2zM548 1466h2v70h-2zM578 1466h2v70h-2zM608 1466h2v70h-2zM636 1466h2v70h-2zM666 1466h2v70h-2zM696 1466h2v70h-2zM754 1466h2v70h-2zM784 1466h2v70h-2zM814 1466h2v70h-2zM872 1466h2v70h-2zM902 1466h2v70h-2zM932 1466h2v70h-2zM960 1466h2v70h-2zM990 1466h2v70h-2zM1020 1466h2v70h-2zM1048 1466h2v70h-2zM1078 1466h2v70h-2zM1108 1466h2v70h-2zM1138 1466h2v70h-2zM1166 1466h2v70h-2zM1226 1466h2v70h-2zM1256 1466h2v70h-2zM1284 1466h2v70h-2zM1314 1466h2v70h-2zM1344 1466h2v70h-2zM1372 1466h2v70h-2zM1402 1466h2v70h-2zM2168 1466h2v70h-2zM2198 1466h2v70h-2zM2228 1466h2v70h-2zM2256 1466h2v70h-2zM2286 1466h2v70h-2zM2316 1466h2v70h-2zM2344 1466h2v70h-2zM2404 1466h2v70h-2zM2434 1466h2v70h-2zM2462 1466h2v70h-2zM2492 1466h2v70h-2zM2522 1466h2v70h-2zM2552 1466h2v70h-2zM2580 1466h2v70h-2zM2640 1466h2v70h-2zM2668 1466h2v70h-2zM2698 1466h2v70h-2zM2728 1466h2v70h-2zM2758 1466h2v70h-2zM2786 1466h2v70h-2zM2816 1466h2v70h-2zM2876 1466h2v70h-2zM2904 1466h2v70h-2zM2934 1466h2v70h-2zM2964 1466h2v70h-2zM2992 1466h2v70h-2zM3022 1466h2v70h-2zM3052 1466h2v70h-2zM48 1574h2v70h-2zM76 1574h2v70h-2zM106 1574h2v70h-2zM166 1574h2v70h-2zM194 1574h2v70h-2zM224 1574h2v70h-2zM282 1574h2v70h-2zM312 1574h2v70h-2zM342 1574h2v70h-2zM400 1574h2v70h-2zM430 1574h2v70h-2zM872 1574h2v70h-2zM902 1574h2v70h-2zM932 1574h2v70h-2zM960 1574h2v70h-2zM990 1574h2v70h-2zM1020 1574h2v70h-2zM1048 1574h2v70h-2zM1108 1574h2v70h-2zM1138 1574h2v70h-2zM1166 1574h2v70h-2zM1226 1574h2v70h-2zM1256 1574h2v70h-2zM1284 1574h2v70h-2zM1344 1574h2v70h-2zM1372 1574h2v70h-2zM1402 1574h2v70h-2zM2168 1574h2v70h-2zM2198 1574h2v70h-2zM2228 1574h2v70h-2zM2286 1574h2v70h-2zM2316 1574h2v70h-2zM2344 1574h2v70h-2zM2404 1574h2v70h-2zM2434 1574h2v70h-2zM2462 1574h2v70h-2zM2522 1574h2v70h-2zM2552 1574h2v70h-2zM2580 1574h2v70h-2zM2640 1574h2v70h-2zM2668 1574h2v70h-2zM2698 1574h2v70h-2zM2758 1574h2v70h-2zM2786 1574h2v70h-2zM2816 1574h2v70h-2zM2876 1574h2v70h-2zM2904 1574h2v70h-2zM2934 1574h2v70h-2zM2992 1574h2v70h-2zM3022 1574h2v70h-2zM3052 1574h2v70h-2z" fill="#5e4ea8"/><path d="M20 970h28v16h-28zM48 952h30v16h-30zM76 970h30v16h-30zM106 970h30v16h-30zM136 970h30v16h-30zM166 952h30v16h-30zM194 970h30v16h-30zM224 970h30v16h-30zM22.5 1030h3.5v8h-3.5zM30 1030h3.5v8h-3.5zM37.5 1030h3.5v8h-3.5zM45 1030h3.5v8h-3.5zM19 1060h3.5v8h-3.5zM26.5 1060h3.5v8h-3.5zM34 1060h3.5v8h-3.5zM41.5 1060h3.5v8h-3.5zM52.5 1030h3.5v8h-3.5zM59.5 1030h3.5v8h-3.5zM66.5 1030h3.5v8h-3.5zM73.5 1030h3.5v8h-3.5zM49 1060h3.5v8h-3.5zM56 1060h3.5v8h-3.5zM63 1060h3.5v8h-3.5zM70 1060h3.5v8h-3.5zM80.5 1030h3.5v8h-3.5zM88 1030h3.5v8h-3.5zM95.5 1030h3.5v8h-3.5zM103 1030h3.5v8h-3.5zM77 1080h3.5v8h-3.5zM84.5 1080h3.5v8h-3.5zM92 1080h3.5v8h-3.5zM99.5 1080h3.5v8h-3.5zM110.5 1040h3.5v8h-3.5zM118 1040h3.5v8h-3.5zM125.5 1040h3.5v8h-3.5zM133 1040h3.5v8h-3.5zM107 1080h3.5v8h-3.5zM114.5 1080h3.5v8h-3.5zM122 1080h3.5v8h-3.5zM129.5 1080h3.5v8h-3.5zM140.5 1030h3.5v8h-3.5zM148 1030h3.5v8h-3.5zM155.5 1030h3.5v8h-3.5zM163 1030h3.5v8h-3.5zM137 1060h3.5v8h-3.5zM144.5 1060h3.5v8h-3.5zM152 1060h3.5v8h-3.5zM159.5 1060h3.5v8h-3.5zM170.5 1030h3.5v8h-3.5zM177.5 1030h3.5v8h-3.5zM184.5 1030h3.5v8h-3.5zM191.5 1030h3.5v8h-3.5zM167 1060h3.5v8h-3.5zM174 1060h3.5v8h-3.5zM181 1060h3.5v8h-3.5zM188 1060h3.5v8h-3.5zM198.5 1030h3.5v8h-3.5zM206 1030h3.5v8h-3.5zM213.5 1030h3.5v8h-3.5zM221 1030h3.5v8h-3.5zM195 1080h3.5v8h-3.5zM202.5 1080h3.5v8h-3.5zM210 1080h3.5v8h-3.5zM217.5 1080h3.5v8h-3.5zM228.5 1040h3.5v8h-3.5zM236 1040h3.5v8h-3.5zM243.5 1040h3.5v8h-3.5zM251 1040h3.5v8h-3.5zM225 1080h3.5v8h-3.5zM232.5 1080h3.5v8h-3.5zM240 1080h3.5v8h-3.5zM247.5 1080h3.5v8h-3.5zM20 1196h28v4h-28zM20 1208h28v4h-28zM50 1196h26v4h-26zM50 1224h26v4h-26zM78 1180h28v4h-28zM78 1196h28v4h-28zM108 1188h28v4h-28zM108 1228h28v4h-28zM138 1196h28v4h-28zM138 1208h28v4h-28zM168 1196h26v4h-26zM168 1224h26v4h-26zM196 1180h28v4h-28zM196 1196h28v4h-28zM226 1188h28v4h-28zM226 1228h28v4h-28zM256 970h26v16h-26zM282 952h32v16h-32zM312 970h30v16h-30zM342 970h30v16h-30zM372 970h28v16h-28zM400 952h32v16h-32zM430 970h30v16h-30zM258.5 1030h3.5v8h-3.5zM265.5 1030h3.5v8h-3.5zM272.5 1030h3.5v8h-3.5zM279.5 1030h3.5v8h-3.5zM255 1060h3.5v8h-3.5zM262 1060h3.5v8h-3.5zM269 1060h3.5v8h-3.5zM276 1060h3.5v8h-3.5zM286.5 1030h3.5v8h-3.5zM294 1030h3.5v8h-3.5zM301.5 1030h3.5v8h-3.5zM309 1030h3.5v8h-3.5zM283 1060h3.5v8h-3.5zM290.5 1060h3.5v8h-3.5zM298 1060h3.5v8h-3.5zM305.5 1060h3.5v8h-3.5zM316.5 1030h3.5v8h-3.5zM324 1030h3.5v8h-3.5zM331.5 1030h3.5v8h-3.5zM339 1030h3.5v8h-3.5zM313 1080h3.5v8h-3.5zM320.5 1080h3.5v8h-3.5zM328 1080h3.5v8h-3.5zM335.5 1080h3.5v8h-3.5zM346.5 1040h3.5v8h-3.5zM354 1040h3.5v8h-3.5zM361.5 1040h3.5v8h-3.5zM369 1040h3.5v8h-3.5zM343 1080h3.5v8h-3.5zM350.5 1080h3.5v8h-3.5zM358 1080h3.5v8h-3.5zM365.5 1080h3.5v8h-3.5zM376.5 1030h3.5v8h-3.5zM383.5 1030h3.5v8h-3.5zM390.5 1030h3.5v8h-3.5zM397.5 1030h3.5v8h-3.5zM373 1060h3.5v8h-3.5zM380 1060h3.5v8h-3.5zM387 1060h3.5v8h-3.5zM394 1060h3.5v8h-3.5zM404.5 1030h3.5v8h-3.5zM412 1030h3.5v8h-3.5zM419.5 1030h3.5v8h-3.5zM427 1030h3.5v8h-3.5zM401 1060h3.5v8h-3.5zM408.5 1060h3.5v8h-3.5zM416 1060h3.5v8h-3.5zM423.5 1060h3.5v8h-3.5zM434.5 1030h3.5v8h-3.5zM442 1030h3.5v8h-3.5zM449.5 1030h3.5v8h-3.5zM457 1030h3.5v8h-3.5zM431 1080h3.5v8h-3.5zM438.5 1080h3.5v8h-3.5zM446 1080h3.5v8h-3.5zM453.5 1080h3.5v8h-3.5zM256 1196h26v4h-26zM256 1208h26v4h-26zM284 1196h28v4h-28zM284 1224h28v4h-28zM314 1180h28v4h-28zM314 1196h28v4h-28zM344 1188h28v4h-28zM344 1228h28v4h-28zM374 1196h26v4h-26zM374 1208h26v4h-26zM402 1196h28v4h-28zM402 1224h28v4h-28zM432 1180h28v4h-28zM432 1196h28v4h-28zM1434 970h28v16h-28zM1462 952h30v16h-30zM1490 970h30v16h-30zM1520 970h30v16h-30zM1550 970h30v16h-30zM1580 952h30v16h-30zM1608 970h30v16h-30zM1638 970h30v16h-30zM1436.5 1030h3.5v8h-3.5zM1444 1030h3.5v8h-3.5zM1451.5 1030h3.5v8h-3.5zM1459 1030h3.5v8h-3.5zM1433 1060h3.5v8h-3.5zM1440.5 1060h3.5v8h-3.5zM1448 1060h3.5v8h-3.5zM1455.5 1060h3.5v8h-3.5zM1466.5 1030h3.5v8h-3.5zM1473.5 1030h3.5v8h-3.5zM1480.5 1030h3.5v8h-3.5zM1487.5 1030h3.5v8h-3.5zM1463 1060h3.5v8h-3.5zM1470 1060h3.5v8h-3.5zM1477 1060h3.5v8h-3.5zM1484 1060h3.5v8h-3.5zM1494.5 1030h3.5v8h-3.5zM1502 1030h3.5v8h-3.5zM1509.5 1030h3.5v8h-3.5zM1517 1030h3.5v8h-3.5zM1491 1080h3.5v8h-3.5zM1498.5 1080h3.5v8h-3.5zM1506 1080h3.5v8h-3.5zM1513.5 1080h3.5v8h-3.5zM1524.5 1040h3.5v8h-3.5zM1532 1040h3.5v8h-3.5zM1539.5 1040h3.5v8h-3.5zM1547 1040h3.5v8h-3.5zM1521 1080h3.5v8h-3.5zM1528.5 1080h3.5v8h-3.5zM1536 1080h3.5v8h-3.5zM1543.5 1080h3.5v8h-3.5zM1554.5 1030h3.5v8h-3.5zM1562 1030h3.5v8h-3.5zM1569.5 1030h3.5v8h-3.5zM1577 1030h3.5v8h-3.5zM1551 1060h3.5v8h-3.5zM1558.5 1060h3.5v8h-3.5zM1566 1060h3.5v8h-3.5zM1573.5 1060h3.5v8h-3.5zM1584.5 1030h3.5v8h-3.5zM1591.5 1030h3.5v8h-3.5zM1598.5 1030h3.5v8h-3.5zM1605.5 1030h3.5v8h-3.5zM1581 1060h3.5v8h-3.5zM1588 1060h3.5v8h-3.5zM1595 1060h3.5v8h-3.5zM1602 1060h3.5v8h-3.5zM1612.5 1030h3.5v8h-3.5zM1620 1030h3.5v8h-3.5zM1627.5 1030h3.5v8h-3.5zM1635 1030h3.5v8h-3.5zM1609 1080h3.5v8h-3.5zM1616.5 1080h3.5v8h-3.5zM1624 1080h3.5v8h-3.5zM1631.5 1080h3.5v8h-3.5zM1642.5 1040h3.5v8h-3.5zM1650 1040h3.5v8h-3.5zM1657.5 1040h3.5v8h-3.5zM1665 1040h3.5v8h-3.5zM1639 1080h3.5v8h-3.5zM1646.5 1080h3.5v8h-3.5zM1654 1080h3.5v8h-3.5zM1661.5 1080h3.5v8h-3.5zM1434 1196h28v4h-28zM1434 1208h28v4h-28zM1464 1196h26v4h-26zM1464 1224h26v4h-26zM1492 1180h28v4h-28zM1492 1196h28v4h-28zM1522 1188h28v4h-28zM1522 1228h28v4h-28zM1552 1196h28v4h-28zM1552 1208h28v4h-28zM1582 1196h26v4h-26zM1582 1224h26v4h-26zM1610 1180h28v4h-28zM1610 1196h28v4h-28zM1640 1188h28v4h-28zM1640 1228h28v4h-28zM1670 970h26v16h-26zM1696 952h32v16h-32zM1726 970h30v16h-30zM1756 970h30v16h-30zM1786 970h28v16h-28zM1814 952h32v16h-32zM1844 970h30v16h-30zM1874 970h30v16h-30zM1672.5 1030h3.5v8h-3.5zM1679.5 1030h3.5v8h-3.5zM1686.5 1030h3.5v8h-3.5zM1693.5 1030h3.5v8h-3.5zM1669 1060h3.5v8h-3.5zM1676 1060h3.5v8h-3.5zM1683 1060h3.5v8h-3.5zM1690 1060h3.5v8h-3.5zM1700.5 1030h3.5v8h-3.5zM1708 1030h3.5v8h-3.5zM1715.5 1030h3.5v8h-3.5zM1723 1030h3.5v8h-3.5zM1697 1060h3.5v8h-3.5zM1704.5 1060h3.5v8h-3.5zM1712 1060h3.5v8h-3.5zM1719.5 1060h3.5v8h-3.5zM1730.5 1030h3.5v8h-3.5zM1738 1030h3.5v8h-3.5zM1745.5 1030h3.5v8h-3.5zM1753 1030h3.5v8h-3.5zM1727 1080h3.5v8h-3.5zM1734.5 1080h3.5v8h-3.5zM1742 1080h3.5v8h-3.5zM1749.5 1080h3.5v8h-3.5zM1760.5 1040h3.5v8h-3.5zM1768 1040h3.5v8h-3.5zM1775.5 1040h3.5v8h-3.5zM1783 1040h3.5v8h-3.5zM1757 1080h3.5v8h-3.5zM1764.5 1080h3.5v8h-3.5zM1772 1080h3.5v8h-3.5zM1779.5 1080h3.5v8h-3.5zM1790.5 1030h3.5v8h-3.5zM1797.5 1030h3.5v8h-3.5zM1804.5 1030h3.5v8h-3.5zM1811.5 1030h3.5v8h-3.5zM1787 1060h3.5v8h-3.5zM1794 1060h3.5v8h-3.5zM1801 1060h3.5v8h-3.5zM1808 1060h3.5v8h-3.5zM1818.5 1030h3.5v8h-3.5zM1826 1030h3.5v8h-3.5zM1833.5 1030h3.5v8h-3.5zM1841 1030h3.5v8h-3.5zM1815 1060h3.5v8h-3.5zM1822.5 1060h3.5v8h-3.5zM1830 1060h3.5v8h-3.5zM1837.5 1060h3.5v8h-3.5zM1848.5 1030h3.5v8h-3.5zM1856 1030h3.5v8h-3.5zM1863.5 1030h3.5v8h-3.5zM1871 1030h3.5v8h-3.5zM1845 1080h3.5v8h-3.5zM1852.5 1080h3.5v8h-3.5zM1860 1080h3.5v8h-3.5zM1867.5 1080h3.5v8h-3.5zM1878.5 1040h3.5v8h-3.5zM1886 1040h3.5v8h-3.5zM1893.5 1040h3.5v8h-3.5zM1901 1040h3.5v8h-3.5zM1875 1080h3.5v8h-3.5zM1882.5 1080h3.5v8h-3.5zM1890 1080h3.5v8h-3.5zM1897.5 1080h3.5v8h-3.5zM1670 1196h26v4h-26zM1670 1208h26v4h-26zM1698 1196h28v4h-28zM1698 1224h28v4h-28zM1728 1180h28v4h-28zM1728 1196h28v4h-28zM1758 1188h28v4h-28zM1758 1228h28v4h-28zM1788 1196h26v4h-26zM1788 1208h26v4h-26zM1816 1196h28v4h-28zM1816 1224h28v4h-28zM1846 1180h28v4h-28zM1846 1196h28v4h-28zM1876 1188h28v4h-28zM1876 1228h28v4h-28zM1906 970h26v16h-26zM1932 952h32v16h-32zM1962 970h30v16h-30zM1992 970h28v16h-28zM2020 970h30v16h-30zM2050 952h32v16h-32zM2080 970h30v16h-30zM2110 970h28v16h-28zM1908.5 1030h3.5v8h-3.5zM1915.5 1030h3.5v8h-3.5zM1922.5 1030h3.5v8h-3.5zM1929.5 1030h3.5v8h-3.5zM1905 1060h3.5v8h-3.5zM1912 1060h3.5v8h-3.5zM1919 1060h3.5v8h-3.5zM1926 1060h3.5v8h-3.5zM1936.5 1030h3.5v8h-3.5zM1944 1030h3.5v8h-3.5zM1951.5 1030h3.5v8h-3.5zM1959 1030h3.5v8h-3.5zM1933 1060h3.5v8h-3.5zM1940.5 1060h3.5v8h-3.5zM1948 1060h3.5v8h-3.5zM1955.5 1060h3.5v8h-3.5zM1966.5 1030h3.5v8h-3.5zM1974 1030h3.5v8h-3.5zM1981.5 1030h3.5v8h-3.5zM1989 1030h3.5v8h-3.5zM1963 1080h3.5v8h-3.5zM1970.5 1080h3.5v8h-3.5zM1978 1080h3.5v8h-3.5zM1985.5 1080h3.5v8h-3.5zM1996.5 1040h3.5v8h-3.5zM2003.5 1040h3.5v8h-3.5zM2010.5 1040h3.5v8h-3.5zM2017.5 1040h3.5v8h-3.5zM1993 1080h3.5v8h-3.5zM2000 1080h3.5v8h-3.5zM2007 1080h3.5v8h-3.5zM2014 1080h3.5v8h-3.5zM2024.5 1030h3.5v8h-3.5zM2032 1030h3.5v8h-3.5zM2039.5 1030h3.5v8h-3.5zM2047 1030h3.5v8h-3.5zM2021 1060h3.5v8h-3.5zM2028.5 1060h3.5v8h-3.5zM2036 1060h3.5v8h-3.5zM2043.5 1060h3.5v8h-3.5zM2054.5 1030h3.5v8h-3.5zM2062 1030h3.5v8h-3.5zM2069.5 1030h3.5v8h-3.5zM2077 1030h3.5v8h-3.5zM2051 1060h3.5v8h-3.5zM2058.5 1060h3.5v8h-3.5zM2066 1060h3.5v8h-3.5zM2073.5 1060h3.5v8h-3.5zM2084.5 1030h3.5v8h-3.5zM2092 1030h3.5v8h-3.5zM2099.5 1030h3.5v8h-3.5zM2107 1030h3.5v8h-3.5zM2081 1080h3.5v8h-3.5zM2088.5 1080h3.5v8h-3.5zM2096 1080h3.5v8h-3.5zM2103.5 1080h3.5v8h-3.5zM2114.5 1040h3.5v8h-3.5zM2121.5 1040h3.5v8h-3.5zM2128.5 1040h3.5v8h-3.5zM2135.5 1040h3.5v8h-3.5zM2111 1080h3.5v8h-3.5zM2118 1080h3.5v8h-3.5zM2125 1080h3.5v8h-3.5zM2132 1080h3.5v8h-3.5zM1906 1196h26v4h-26zM1906 1208h26v4h-26zM1934 1196h28v4h-28zM1934 1224h28v4h-28zM1964 1180h28v4h-28zM1964 1196h28v4h-28zM1994 1188h26v4h-26zM1994 1228h26v4h-26zM2022 1196h28v4h-28zM2022 1208h28v4h-28zM2052 1196h28v4h-28zM2052 1224h28v4h-28zM2082 1180h28v4h-28zM2082 1196h28v4h-28zM2112 1188h26v4h-26zM2112 1228h26v4h-26zM20 1292h28v4h-28zM50 1308h26v4h-26zM78 1280h28v4h-28zM108 1312h28v4h-28zM138 1292h28v4h-28zM168 1308h26v4h-26zM196 1280h28v4h-28zM226 1312h28v4h-28zM256 1292h26v4h-26zM284 1308h28v4h-28zM314 1280h28v4h-28zM344 1312h28v4h-28zM374 1292h26v4h-26zM402 1308h28v4h-28zM432 1280h28v4h-28zM1670 1292h26v4h-26zM1698 1308h28v4h-28zM1728 1280h28v4h-28zM1758 1312h28v4h-28zM1788 1292h26v4h-26zM1816 1308h28v4h-28zM1846 1280h28v4h-28zM1876 1312h28v4h-28zM1906 1292h26v4h-26zM1934 1308h28v4h-28zM1964 1280h28v4h-28zM1994 1312h26v4h-26zM2022 1292h28v4h-28zM2052 1308h28v4h-28zM2082 1280h28v4h-28zM2112 1312h26v4h-26zM494 1366h5.6v4h-5.6zM501.4 1366h5.6v4h-5.6zM508.8 1366h5.6v4h-5.6zM516.2 1366h5.6v4h-5.6zM522 1382h5.6v4h-5.6zM529.4 1382h5.6v4h-5.6zM536.8 1382h5.6v4h-5.6zM544.2 1382h5.6v4h-5.6zM552 1354h5.6v4h-5.6zM559.4 1354h5.6v4h-5.6zM566.8 1354h5.6v4h-5.6zM574.2 1354h5.6v4h-5.6zM582 1386h5.6v4h-5.6zM589.4 1386h5.6v4h-5.6zM596.8 1386h5.6v4h-5.6zM604.2 1386h5.6v4h-5.6zM612 1366h5.6v4h-5.6zM619.4 1366h5.6v4h-5.6zM626.8 1366h5.6v4h-5.6zM634.2 1366h5.6v4h-5.6zM640 1382h5.6v4h-5.6zM647.4 1382h5.6v4h-5.6zM654.8 1382h5.6v4h-5.6zM662.2 1382h5.6v4h-5.6zM670 1354h5.6v4h-5.6zM677.4 1354h5.6v4h-5.6zM684.8 1354h5.6v4h-5.6zM692.2 1354h5.6v4h-5.6zM700 1386h5.6v4h-5.6zM707.4 1386h5.6v4h-5.6zM714.8 1386h5.6v4h-5.6zM722.2 1386h5.6v4h-5.6zM728 1366h5.6v4h-5.6zM735.4 1366h5.6v4h-5.6zM742.8 1366h5.6v4h-5.6zM750.2 1366h5.6v4h-5.6zM758 1382h5.6v4h-5.6zM765.4 1382h5.6v4h-5.6zM772.8 1382h5.6v4h-5.6zM780.2 1382h5.6v4h-5.6zM788 1354h5.6v4h-5.6zM795.4 1354h5.6v4h-5.6zM802.8 1354h5.6v4h-5.6zM810.2 1354h5.6v4h-5.6zM818 1386h5.6v4h-5.6zM825.4 1386h5.6v4h-5.6zM832.8 1386h5.6v4h-5.6zM840.2 1386h5.6v4h-5.6zM846 1366h5.6v4h-5.6zM853.4 1366h5.6v4h-5.6zM860.8 1366h5.6v4h-5.6zM868.2 1366h5.6v4h-5.6zM876 1382h5.6v4h-5.6zM883.4 1382h5.6v4h-5.6zM890.8 1382h5.6v4h-5.6zM898.2 1382h5.6v4h-5.6zM906 1354h5.6v4h-5.6zM913.4 1354h5.6v4h-5.6zM920.8 1354h5.6v4h-5.6zM928.2 1354h5.6v4h-5.6zM936 1386h5.6v4h-5.6zM943.4 1386h5.6v4h-5.6zM950.8 1386h5.6v4h-5.6zM958.2 1386h5.6v4h-5.6zM964 1366h5.6v4h-5.6zM971.4 1366h5.6v4h-5.6zM978.8 1366h5.6v4h-5.6zM986.2 1366h5.6v4h-5.6zM994 1382h5.6v4h-5.6zM1001.4 1382h5.6v4h-5.6zM1008.8 1382h5.6v4h-5.6zM1016.2 1382h5.6v4h-5.6zM1024 1354h5.6v4h-5.6zM1031.4 1354h5.6v4h-5.6zM1038.8 1354h5.6v4h-5.6zM1046.2 1354h5.6v4h-5.6zM1052 1386h5.6v4h-5.6zM1059.4 1386h5.6v4h-5.6zM1066.8 1386h5.6v4h-5.6zM1074.2 1386h5.6v4h-5.6zM1082 1366h5.6v4h-5.6zM1089.4 1366h5.6v4h-5.6zM1096.8 1366h5.6v4h-5.6zM1104.2 1366h5.6v4h-5.6zM1112 1382h5.6v4h-5.6zM1119.4 1382h5.6v4h-5.6zM1126.8 1382h5.6v4h-5.6zM1134.2 1382h5.6v4h-5.6zM1142 1354h5.6v4h-5.6zM1149.4 1354h5.6v4h-5.6zM1156.8 1354h5.6v4h-5.6zM1164.2 1354h5.6v4h-5.6zM1170 1386h5.6v4h-5.6zM1177.4 1386h5.6v4h-5.6zM1184.8 1386h5.6v4h-5.6zM1192.2 1386h5.6v4h-5.6zM1200 1366h5.6v4h-5.6zM1207.4 1366h5.6v4h-5.6zM1214.8 1366h5.6v4h-5.6zM1222.2 1366h5.6v4h-5.6zM1230 1382h5.6v4h-5.6zM1237.4 1382h5.6v4h-5.6zM1244.8 1382h5.6v4h-5.6zM1252.2 1382h5.6v4h-5.6zM1260 1354h5.6v4h-5.6zM1267.4 1354h5.6v4h-5.6zM1274.8 1354h5.6v4h-5.6zM1282.2 1354h5.6v4h-5.6zM1288 1386h5.6v4h-5.6zM1295.4 1386h5.6v4h-5.6zM1302.8 1386h5.6v4h-5.6zM1310.2 1386h5.6v4h-5.6zM1318 1366h5.6v4h-5.6zM1325.4 1366h5.6v4h-5.6zM1332.8 1366h5.6v4h-5.6zM1340.2 1366h5.6v4h-5.6zM1348 1382h5.6v4h-5.6zM1355.4 1382h5.6v4h-5.6zM1362.8 1382h5.6v4h-5.6zM1370.2 1382h5.6v4h-5.6zM1376 1354h5.6v4h-5.6zM1383.4 1354h5.6v4h-5.6zM1390.8 1354h5.6v4h-5.6zM1398.2 1354h5.6v4h-5.6zM1406 1386h5.6v4h-5.6zM1413.4 1386h5.6v4h-5.6zM1420.8 1386h5.6v4h-5.6zM1428.2 1386h5.6v4h-5.6zM2144 1366h5.6v4h-5.6zM2151.4 1366h5.6v4h-5.6zM2158.8 1366h5.6v4h-5.6zM2166.2 1366h5.6v4h-5.6zM2174 1382h5.6v4h-5.6zM2181.4 1382h5.6v4h-5.6zM2188.8 1382h5.6v4h-5.6zM2196.2 1382h5.6v4h-5.6zM2204 1354h5.6v4h-5.6zM2211.4 1354h5.6v4h-5.6zM2218.8 1354h5.6v4h-5.6zM2226.2 1354h5.6v4h-5.6zM2234 1386h5.6v4h-5.6zM2241.4 1386h5.6v4h-5.6zM2248.8 1386h5.6v4h-5.6zM2256.2 1386h5.6v4h-5.6zM2262 1366h5.6v4h-5.6zM2269.4 1366h5.6v4h-5.6zM2276.8 1366h5.6v4h-5.6zM2284.2 1366h5.6v4h-5.6zM2292 1382h5.6v4h-5.6zM2299.4 1382h5.6v4h-5.6zM2306.8 1382h5.6v4h-5.6zM2314.2 1382h5.6v4h-5.6zM2322 1354h5.6v4h-5.6zM2329.4 1354h5.6v4h-5.6zM2336.8 1354h5.6v4h-5.6zM2344.2 1354h5.6v4h-5.6zM2350 1386h5.6v4h-5.6zM2357.4 1386h5.6v4h-5.6zM2364.8 1386h5.6v4h-5.6zM2372.2 1386h5.6v4h-5.6zM2380 1366h5.6v4h-5.6zM2387.4 1366h5.6v4h-5.6zM2394.8 1366h5.6v4h-5.6zM2402.2 1366h5.6v4h-5.6zM2410 1382h5.6v4h-5.6zM2417.4 1382h5.6v4h-5.6zM2424.8 1382h5.6v4h-5.6zM2432.2 1382h5.6v4h-5.6zM2440 1354h5.6v4h-5.6zM2447.4 1354h5.6v4h-5.6zM2454.8 1354h5.6v4h-5.6zM2462.2 1354h5.6v4h-5.6zM2468 1386h5.6v4h-5.6zM2475.4 1386h5.6v4h-5.6zM2482.8 1386h5.6v4h-5.6zM2490.2 1386h5.6v4h-5.6zM2498 1366h5.6v4h-5.6zM2505.4 1366h5.6v4h-5.6zM2512.8 1366h5.6v4h-5.6zM2520.2 1366h5.6v4h-5.6zM2528 1382h5.6v4h-5.6zM2535.4 1382h5.6v4h-5.6zM2542.8 1382h5.6v4h-5.6zM2550.2 1382h5.6v4h-5.6zM2558 1354h5.6v4h-5.6zM2565.4 1354h5.6v4h-5.6zM2572.8 1354h5.6v4h-5.6zM2580.2 1354h5.6v4h-5.6zM2586 1386h5.6v4h-5.6zM2593.4 1386h5.6v4h-5.6zM2600.8 1386h5.6v4h-5.6zM2608.2 1386h5.6v4h-5.6zM2616 1366h5.6v4h-5.6zM2623.4 1366h5.6v4h-5.6zM2630.8 1366h5.6v4h-5.6zM2638.2 1366h5.6v4h-5.6zM2646 1382h5.6v4h-5.6zM2653.4 1382h5.6v4h-5.6zM2660.8 1382h5.6v4h-5.6zM2668.2 1382h5.6v4h-5.6zM2674 1354h5.6v4h-5.6zM2681.4 1354h5.6v4h-5.6zM2688.8 1354h5.6v4h-5.6zM2696.2 1354h5.6v4h-5.6zM2704 1386h5.6v4h-5.6zM2711.4 1386h5.6v4h-5.6zM2718.8 1386h5.6v4h-5.6zM2726.2 1386h5.6v4h-5.6zM2734 1366h5.6v4h-5.6zM2741.4 1366h5.6v4h-5.6zM2748.8 1366h5.6v4h-5.6zM2756.2 1366h5.6v4h-5.6zM2764 1382h5.6v4h-5.6zM2771.4 1382h5.6v4h-5.6zM2778.8 1382h5.6v4h-5.6zM2786.2 1382h5.6v4h-5.6zM2792 1354h5.6v4h-5.6zM2799.4 1354h5.6v4h-5.6zM2806.8 1354h5.6v4h-5.6zM2814.2 1354h5.6v4h-5.6zM2822 1386h5.6v4h-5.6zM2829.4 1386h5.6v4h-5.6zM2836.8 1386h5.6v4h-5.6zM2844.2 1386h5.6v4h-5.6zM2852 1366h5.6v4h-5.6zM2859.4 1366h5.6v4h-5.6zM2866.8 1366h5.6v4h-5.6zM2874.2 1366h5.6v4h-5.6zM2882 1382h5.6v4h-5.6zM2889.4 1382h5.6v4h-5.6zM2896.8 1382h5.6v4h-5.6zM2904.2 1382h5.6v4h-5.6zM2910 1354h5.6v4h-5.6zM2917.4 1354h5.6v4h-5.6zM2924.8 1354h5.6v4h-5.6zM2932.2 1354h5.6v4h-5.6zM2940 1386h5.6v4h-5.6zM2947.4 1386h5.6v4h-5.6zM2954.8 1386h5.6v4h-5.6zM2962.2 1386h5.6v4h-5.6zM2970 1366h5.6v4h-5.6zM2977.4 1366h5.6v4h-5.6zM2984.8 1366h5.6v4h-5.6zM2992.2 1366h5.6v4h-5.6zM2998 1382h5.6v4h-5.6zM3005.4 1382h5.6v4h-5.6zM3012.8 1382h5.6v4h-5.6zM3020.2 1382h5.6v4h-5.6zM3028 1354h5.6v4h-5.6zM3035.4 1354h5.6v4h-5.6zM3042.8 1354h5.6v4h-5.6zM3050.2 1354h5.6v4h-5.6zM3058 1386h5.6v4h-5.6zM3065.4 1386h5.6v4h-5.6zM3072.8 1386h5.6v4h-5.6zM3080.2 1386h5.6v4h-5.6zM492.5 1492h3.5v6h-3.5zM499.5 1492h3.5v6h-3.5zM506.5 1492h3.5v6h-3.5zM513.5 1492h3.5v6h-3.5zM520.5 1516h3.5v6h-3.5zM528 1516h3.5v6h-3.5zM535.5 1516h3.5v6h-3.5zM543 1516h3.5v6h-3.5zM550.5 1474h3.5v6h-3.5zM558 1474h3.5v6h-3.5zM565.5 1474h3.5v6h-3.5zM573 1474h3.5v6h-3.5zM580.5 1522h3.5v6h-3.5zM588 1522h3.5v6h-3.5zM595.5 1522h3.5v6h-3.5zM603 1522h3.5v6h-3.5zM610.5 1492h3.5v6h-3.5zM617.5 1492h3.5v6h-3.5zM624.5 1492h3.5v6h-3.5zM631.5 1492h3.5v6h-3.5zM638.5 1516h3.5v6h-3.5zM646 1516h3.5v6h-3.5zM653.5 1516h3.5v6h-3.5zM661 1516h3.5v6h-3.5zM668.5 1474h3.5v6h-3.5zM676 1474h3.5v6h-3.5zM683.5 1474h3.5v6h-3.5zM691 1474h3.5v6h-3.5zM698.5 1522h3.5v6h-3.5zM705.5 1522h3.5v6h-3.5zM712.5 1522h3.5v6h-3.5zM719.5 1522h3.5v6h-3.5zM726.5 1492h3.5v6h-3.5zM734 1492h3.5v6h-3.5zM741.5 1492h3.5v6h-3.5zM749 1492h3.5v6h-3.5zM756.5 1516h3.5v6h-3.5zM764 1516h3.5v6h-3.5zM771.5 1516h3.5v6h-3.5zM779 1516h3.5v6h-3.5zM786.5 1474h3.5v6h-3.5zM794 1474h3.5v6h-3.5zM801.5 1474h3.5v6h-3.5zM809 1474h3.5v6h-3.5zM816.5 1522h3.5v6h-3.5zM823.5 1522h3.5v6h-3.5zM830.5 1522h3.5v6h-3.5zM837.5 1522h3.5v6h-3.5zM844.5 1492h3.5v6h-3.5zM852 1492h3.5v6h-3.5zM859.5 1492h3.5v6h-3.5zM867 1492h3.5v6h-3.5zM874.5 1516h3.5v6h-3.5zM882 1516h3.5v6h-3.5zM889.5 1516h3.5v6h-3.5zM897 1516h3.5v6h-3.5zM904.5 1474h3.5v6h-3.5zM912 1474h3.5v6h-3.5zM919.5 1474h3.5v6h-3.5zM927 1474h3.5v6h-3.5zM934.5 1522h3.5v6h-3.5zM941.5 1522h3.5v6h-3.5zM948.5 1522h3.5v6h-3.5zM955.5 1522h3.5v6h-3.5zM962.5 1492h3.5v6h-3.5zM970 1492h3.5v6h-3.5zM977.5 1492h3.5v6h-3.5zM985 1492h3.5v6h-3.5zM992.5 1516h3.5v6h-3.5zM1000 1516h3.5v6h-3.5zM1007.5 1516h3.5v6h-3.5zM1015 1516h3.5v6h-3.5zM1022.5 1474h3.5v6h-3.5zM1029.5 1474h3.5v6h-3.5zM1036.5 1474h3.5v6h-3.5zM1043.5 1474h3.5v6h-3.5zM1050.5 1522h3.5v6h-3.5zM1058 1522h3.5v6h-3.5zM1065.5 1522h3.5v6h-3.5zM1073 1522h3.5v6h-3.5zM1080.5 1492h3.5v6h-3.5zM1088 1492h3.5v6h-3.5zM1095.5 1492h3.5v6h-3.5zM1103 1492h3.5v6h-3.5zM1110.5 1516h3.5v6h-3.5zM1118 1516h3.5v6h-3.5zM1125.5 1516h3.5v6h-3.5zM1133 1516h3.5v6h-3.5zM1140.5 1474h3.5v6h-3.5zM1147.5 1474h3.5v6h-3.5zM1154.5 1474h3.5v6h-3.5zM1161.5 1474h3.5v6h-3.5zM1168.5 1522h3.5v6h-3.5zM1176 1522h3.5v6h-3.5zM1183.5 1522h3.5v6h-3.5zM1191 1522h3.5v6h-3.5zM1198.5 1492h3.5v6h-3.5zM1206 1492h3.5v6h-3.5zM1213.5 1492h3.5v6h-3.5zM1221 1492h3.5v6h-3.5zM1228.5 1516h3.5v6h-3.5zM1236 1516h3.5v6h-3.5zM1243.5 1516h3.5v6h-3.5zM1251 1516h3.5v6h-3.5zM1258.5 1474h3.5v6h-3.5zM1265.5 1474h3.5v6h-3.5zM1272.5 1474h3.5v6h-3.5zM1279.5 1474h3.5v6h-3.5zM1286.5 1522h3.5v6h-3.5zM1294 1522h3.5v6h-3.5zM1301.5 1522h3.5v6h-3.5zM1309 1522h3.5v6h-3.5zM1316.5 1492h3.5v6h-3.5zM1324 1492h3.5v6h-3.5zM1331.5 1492h3.5v6h-3.5zM1339 1492h3.5v6h-3.5zM1346.5 1516h3.5v6h-3.5zM1353.5 1516h3.5v6h-3.5zM1360.5 1516h3.5v6h-3.5zM1367.5 1516h3.5v6h-3.5zM1374.5 1474h3.5v6h-3.5zM1382 1474h3.5v6h-3.5zM1389.5 1474h3.5v6h-3.5zM1397 1474h3.5v6h-3.5zM1404.5 1522h3.5v6h-3.5zM1412 1522h3.5v6h-3.5zM1419.5 1522h3.5v6h-3.5zM1427 1522h3.5v6h-3.5zM2140.5 1492h3.5v6h-3.5zM2148 1492h3.5v6h-3.5zM2155.5 1492h3.5v6h-3.5zM2163 1492h3.5v6h-3.5zM2170.5 1516h3.5v6h-3.5zM2178 1516h3.5v6h-3.5zM2185.5 1516h3.5v6h-3.5zM2193 1516h3.5v6h-3.5zM2200.5 1474h3.5v6h-3.5zM2208 1474h3.5v6h-3.5zM2215.5 1474h3.5v6h-3.5zM2223 1474h3.5v6h-3.5zM2230.5 1522h3.5v6h-3.5zM2237.5 1522h3.5v6h-3.5zM2244.5 1522h3.5v6h-3.5zM2251.5 1522h3.5v6h-3.5zM2258.5 1492h3.5v6h-3.5zM2266 1492h3.5v6h-3.5zM2273.5 1492h3.5v6h-3.5zM2281 1492h3.5v6h-3.5zM2288.5 1516h3.5v6h-3.5zM2296 1516h3.5v6h-3.5zM2303.5 1516h3.5v6h-3.5zM2311 1516h3.5v6h-3.5zM2318.5 1474h3.5v6h-3.5zM2325.5 1474h3.5v6h-3.5zM2332.5 1474h3.5v6h-3.5zM2339.5 1474h3.5v6h-3.5zM2346.5 1522h3.5v6h-3.5zM2354 1522h3.5v6h-3.5zM2361.5 1522h3.5v6h-3.5zM2369 1522h3.5v6h-3.5zM2376.5 1492h3.5v6h-3.5zM2384 1492h3.5v6h-3.5zM2391.5 1492h3.5v6h-3.5zM2399 1492h3.5v6h-3.5zM2406.5 1516h3.5v6h-3.5zM2414 1516h3.5v6h-3.5zM2421.5 1516h3.5v6h-3.5zM2429 1516h3.5v6h-3.5zM2436.5 1474h3.5v6h-3.5zM2443.5 1474h3.5v6h-3.5zM2450.5 1474h3.5v6h-3.5zM2457.5 1474h3.5v6h-3.5zM2464.5 1522h3.5v6h-3.5zM2472 1522h3.5v6h-3.5zM2479.5 1522h3.5v6h-3.5zM2487 1522h3.5v6h-3.5zM2494.5 1492h3.5v6h-3.5zM2502 1492h3.5v6h-3.5zM2509.5 1492h3.5v6h-3.5zM2517 1492h3.5v6h-3.5zM2524.5 1516h3.5v6h-3.5zM2532 1516h3.5v6h-3.5zM2539.5 1516h3.5v6h-3.5zM2547 1516h3.5v6h-3.5zM2554.5 1474h3.5v6h-3.5zM2561.5 1474h3.5v6h-3.5zM2568.5 1474h3.5v6h-3.5zM2575.5 1474h3.5v6h-3.5zM2582.5 1522h3.5v6h-3.5zM2590 1522h3.5v6h-3.5zM2597.5 1522h3.5v6h-3.5zM2605 1522h3.5v6h-3.5zM2612.5 1492h3.5v6h-3.5zM2620 1492h3.5v6h-3.5zM2627.5 1492h3.5v6h-3.5zM2635 1492h3.5v6h-3.5zM2642.5 1516h3.5v6h-3.5zM2649.5 1516h3.5v6h-3.5zM2656.5 1516h3.5v6h-3.5zM2663.5 1516h3.5v6h-3.5zM2670.5 1474h3.5v6h-3.5zM2678 1474h3.5v6h-3.5zM2685.5 1474h3.5v6h-3.5zM2693 1474h3.5v6h-3.5zM2700.5 1522h3.5v6h-3.5zM2708 1522h3.5v6h-3.5zM2715.5 1522h3.5v6h-3.5zM2723 1522h3.5v6h-3.5zM2730.5 1492h3.5v6h-3.5zM2738 1492h3.5v6h-3.5zM2745.5 1492h3.5v6h-3.5zM2753 1492h3.5v6h-3.5zM2760.5 1516h3.5v6h-3.5zM2767.5 1516h3.5v6h-3.5zM2774.5 1516h3.5v6h-3.5zM2781.5 1516h3.5v6h-3.5zM2788.5 1474h3.5v6h-3.5zM2796 1474h3.5v6h-3.5zM2803.5 1474h3.5v6h-3.5zM2811 1474h3.5v6h-3.5zM2818.5 1522h3.5v6h-3.5zM2826 1522h3.5v6h-3.5zM2833.5 1522h3.5v6h-3.5zM2841 1522h3.5v6h-3.5zM2848.5 1492h3.5v6h-3.5zM2856 1492h3.5v6h-3.5zM2863.5 1492h3.5v6h-3.5zM2871 1492h3.5v6h-3.5zM2878.5 1516h3.5v6h-3.5zM2885.5 1516h3.5v6h-3.5zM2892.5 1516h3.5v6h-3.5zM2899.5 1516h3.5v6h-3.5zM2906.5 1474h3.5v6h-3.5zM2914 1474h3.5v6h-3.5zM2921.5 1474h3.5v6h-3.5zM2929 1474h3.5v6h-3.5zM2936.5 1522h3.5v6h-3.5zM2944 1522h3.5v6h-3.5zM2951.5 1522h3.5v6h-3.5zM2959 1522h3.5v6h-3.5zM2966.5 1492h3.5v6h-3.5zM2973.5 1492h3.5v6h-3.5zM2980.5 1492h3.5v6h-3.5zM2987.5 1492h3.5v6h-3.5zM2994.5 1516h3.5v6h-3.5zM3002 1516h3.5v6h-3.5zM3009.5 1516h3.5v6h-3.5zM3017 1516h3.5v6h-3.5zM3024.5 1474h3.5v6h-3.5zM3032 1474h3.5v6h-3.5zM3039.5 1474h3.5v6h-3.5zM3047 1474h3.5v6h-3.5zM3054.5 1522h3.5v6h-3.5zM3062 1522h3.5v6h-3.5zM3069.5 1522h3.5v6h-3.5zM3077 1522h3.5v6h-3.5zM40.09 1608h3.6v8h-3.6zM43.92 1598h3.6v8h-3.6zM70.68 1608h3.6v8h-3.6zM74.51 1598h2.6v8h-2.6zM99.56 1578h2.6v8h-2.6zM101.33 1608h3.6v8h-3.6zM109.83 1608h3.6v8h-3.6zM117.78 1608h3.6v8h-3.6zM128.09 1608h3.6v8h-3.6zM131.92 1598h3.6v8h-3.6zM158.09 1608h3.6v8h-3.6zM161.92 1598h3.6v8h-3.6zM188.68 1608h3.6v8h-3.6zM192.51 1598h2.6v8h-2.6zM217.56 1578h2.6v8h-2.6zM219.33 1608h3.6v8h-3.6zM227.83 1608h3.6v8h-3.6zM235.78 1608h3.6v8h-3.6zM246.09 1608h3.6v8h-3.6zM249.92 1598h3.6v8h-3.6zM276.09 1608h3.6v8h-3.6zM279.92 1598h3.6v8h-3.6zM304.68 1608h3.6v8h-3.6zM308.51 1598h2.6v8h-2.6zM335.56 1578h2.6v8h-2.6zM337.33 1608h3.6v8h-3.6zM345.83 1608h3.6v8h-3.6zM353.78 1608h3.6v8h-3.6zM364.09 1608h3.6v8h-3.6zM367.92 1598h3.6v8h-3.6zM394.09 1608h3.6v8h-3.6zM397.92 1598h3.6v8h-3.6zM422.68 1608h3.6v8h-3.6zM426.51 1598h2.6v8h-2.6zM453.56 1578h2.6v8h-2.6zM455.33 1608h3.6v8h-3.6zM982.09 1608h3.6v8h-3.6zM985.92 1598h3.6v8h-3.6zM1012.68 1608h3.6v8h-3.6zM1016.51 1598h2.6v8h-2.6zM1043.56 1578h2.6v8h-2.6zM1045.33 1608h3.6v8h-3.6zM1051.83 1608h3.6v8h-3.6zM1059.78 1608h3.6v8h-3.6zM1070.09 1608h3.6v8h-3.6zM1073.92 1598h3.6v8h-3.6zM1100.09 1608h3.6v8h-3.6zM1103.92 1598h3.6v8h-3.6zM1130.68 1608h3.6v8h-3.6zM1134.51 1598h2.6v8h-2.6zM1161.56 1578h2.6v8h-2.6zM1163.33 1608h3.6v8h-3.6zM1169.83 1608h3.6v8h-3.6zM1177.78 1608h3.6v8h-3.6zM1188.09 1608h3.6v8h-3.6zM1191.92 1598h3.6v8h-3.6zM1218.09 1608h3.6v8h-3.6zM1221.92 1598h3.6v8h-3.6zM1248.68 1608h3.6v8h-3.6zM1252.51 1598h2.6v8h-2.6zM1279.56 1578h2.6v8h-2.6zM1281.33 1608h3.6v8h-3.6zM1287.83 1608h3.6v8h-3.6zM1295.78 1608h3.6v8h-3.6zM1306.09 1608h3.6v8h-3.6zM1309.92 1598h3.6v8h-3.6zM1336.09 1608h3.6v8h-3.6zM1339.92 1598h3.6v8h-3.6zM1366.68 1608h3.6v8h-3.6zM1370.51 1598h2.6v8h-2.6zM1395.56 1578h2.6v8h-2.6zM1397.33 1608h3.6v8h-3.6zM1405.83 1608h3.6v8h-3.6zM1413.78 1608h3.6v8h-3.6zM1424.09 1608h3.6v8h-3.6zM1427.92 1598h3.6v8h-3.6zM2160.09 1608h3.6v8h-3.6zM2163.92 1598h3.6v8h-3.6zM2190.68 1608h3.6v8h-3.6zM2194.51 1598h2.6v8h-2.6zM2221.56 1578h2.6v8h-2.6zM2223.33 1608h3.6v8h-3.6zM2231.83 1608h3.6v8h-3.6zM2239.78 1608h3.6v8h-3.6zM2250.09 1608h3.6v8h-3.6zM2253.92 1598h3.6v8h-3.6zM2278.09 1608h3.6v8h-3.6zM2281.92 1598h3.6v8h-3.6zM2308.68 1608h3.6v8h-3.6zM2312.51 1598h2.6v8h-2.6zM2339.56 1578h2.6v8h-2.6zM2341.33 1608h3.6v8h-3.6zM2347.83 1608h3.6v8h-3.6zM2355.78 1608h3.6v8h-3.6zM2366.09 1608h3.6v8h-3.6zM2369.92 1598h3.6v8h-3.6zM2396.09 1608h3.6v8h-3.6zM2399.92 1598h3.6v8h-3.6zM2426.68 1608h3.6v8h-3.6zM2430.51 1598h2.6v8h-2.6zM2457.56 1578h2.6v8h-2.6zM2459.33 1608h3.6v8h-3.6zM2465.83 1608h3.6v8h-3.6zM2473.78 1608h3.6v8h-3.6zM2484.09 1608h3.6v8h-3.6zM2487.92 1598h3.6v8h-3.6zM2514.09 1608h3.6v8h-3.6zM2517.92 1598h3.6v8h-3.6zM2544.68 1608h3.6v8h-3.6zM2548.51 1598h2.6v8h-2.6zM2575.56 1578h2.6v8h-2.6zM2577.33 1608h3.6v8h-3.6zM2583.83 1608h3.6v8h-3.6zM2591.78 1608h3.6v8h-3.6zM2602.09 1608h3.6v8h-3.6zM2605.92 1598h3.6v8h-3.6zM2632.09 1608h3.6v8h-3.6zM2635.92 1598h3.6v8h-3.6zM2662.68 1608h3.6v8h-3.6zM2666.51 1598h2.6v8h-2.6zM2691.56 1578h2.6v8h-2.6zM2693.33 1608h3.6v8h-3.6zM2701.83 1608h3.6v8h-3.6zM2709.78 1608h3.6v8h-3.6zM2720.09 1608h3.6v8h-3.6zM2723.92 1598h3.6v8h-3.6zM2750.09 1608h3.6v8h-3.6zM2753.92 1598h3.6v8h-3.6zM2780.68 1608h3.6v8h-3.6zM2784.51 1598h2.6v8h-2.6zM2809.56 1578h2.6v8h-2.6zM2811.33 1608h3.6v8h-3.6zM2819.83 1608h3.6v8h-3.6zM2827.78 1608h3.6v8h-3.6zM2838.09 1608h3.6v8h-3.6zM2841.92 1598h3.6v8h-3.6zM2868.09 1608h3.6v8h-3.6zM2871.92 1598h3.6v8h-3.6zM2898.68 1608h3.6v8h-3.6zM2902.51 1598h2.6v8h-2.6zM2927.56 1578h2.6v8h-2.6zM2929.33 1608h3.6v8h-3.6zM2937.83 1608h3.6v8h-3.6zM2945.78 1608h3.6v8h-3.6zM2956.09 1608h3.6v8h-3.6zM2959.92 1598h3.6v8h-3.6zM2986.09 1608h3.6v8h-3.6zM2989.92 1598h3.6v8h-3.6zM3014.68 1608h3.6v8h-3.6zM3018.51 1598h2.6v8h-2.6zM3045.56 1578h2.6v8h-2.6zM3047.33 1608h3.6v8h-3.6zM3055.83 1608h3.6v8h-3.6zM3063.78 1608h3.6v8h-3.6zM3074.09 1608h3.6v8h-3.6zM3077.92 1598h3.6v8h-3.6zM1428 1630h3.5v8h-3.5zM2606 1630h3.5v8h-3.5zM3078 1630h3.5v8h-3.5z" fill="#1f1c26"/><path d="M136 1102h2v6h-2zM136 1126h2v6h-2zM372 1102h2v6h-2zM372 1126h2v6h-2zM1550 1102h2v6h-2zM1550 1126h2v6h-2zM1786 1102h2v6h-2zM1786 1126h2v6h-2zM2020 1102h2v6h-2zM2020 1126h2v6h-2zM608 1396h2v6h-2zM608 1420h2v6h-2zM724 1396h2v6h-2zM724 1420h2v6h-2zM842 1396h2v6h-2zM842 1420h2v6h-2zM960 1396h2v6h-2zM960 1420h2v6h-2zM1078 1396h2v6h-2zM1078 1420h2v6h-2zM1196 1396h2v6h-2zM1196 1420h2v6h-2zM1314 1396h2v6h-2zM1314 1420h2v6h-2zM2256 1396h2v6h-2zM2256 1420h2v6h-2zM2374 1396h2v6h-2zM2374 1420h2v6h-2zM2492 1396h2v6h-2zM2492 1420h2v6h-2zM2610 1396h2v6h-2zM2610 1420h2v6h-2zM2728 1396h2v6h-2zM2728 1420h2v6h-2zM2846 1396h2v6h-2zM2846 1420h2v6h-2zM2964 1396h2v6h-2zM2964 1420h2v6h-2zM960 1650h2v6h-2zM960 1674h2v6h-2zM136 920h2v6h-2zM136 982h2v6h-2zM136 994h2v6h-2zM136 1090h2v6h-2zM136 1140h2v6h-2zM136 1236h2v6h-2zM372 920h2v6h-2zM372 982h2v6h-2zM372 994h2v6h-2zM372 1090h2v6h-2zM372 1140h2v6h-2zM372 1236h2v6h-2zM1550 920h2v6h-2zM1550 982h2v6h-2zM1550 994h2v6h-2zM1550 1090h2v6h-2zM1550 1140h2v6h-2zM1550 1236h2v6h-2zM1786 920h2v6h-2zM1786 982h2v6h-2zM1786 994h2v6h-2zM1786 1090h2v6h-2zM1786 1140h2v6h-2zM1786 1236h2v6h-2zM2020 920h2v6h-2zM2020 982h2v6h-2zM2020 994h2v6h-2zM2020 1090h2v6h-2zM2020 1140h2v6h-2zM2020 1236h2v6h-2zM136 1248h2v6h-2zM136 1310h2v6h-2zM372 1248h2v6h-2zM372 1310h2v6h-2zM1786 1248h2v6h-2zM1786 1310h2v6h-2zM1904 1248h2v6h-2zM1904 1310h2v6h-2zM2020 1248h2v6h-2zM2020 1310h2v6h-2zM610 1322h2v6h-2zM610 1384h2v6h-2zM726 1322h2v6h-2zM726 1384h2v6h-2zM844 1322h2v6h-2zM844 1384h2v6h-2zM962 1322h2v6h-2zM962 1384h2v6h-2zM1080 1322h2v6h-2zM1080 1384h2v6h-2zM1198 1322h2v6h-2zM1198 1384h2v6h-2zM1316 1322h2v6h-2zM1316 1384h2v6h-2zM2260 1322h2v6h-2zM2260 1384h2v6h-2zM2378 1322h2v6h-2zM2378 1384h2v6h-2zM2496 1322h2v6h-2zM2496 1384h2v6h-2zM2614 1322h2v6h-2zM2614 1384h2v6h-2zM2732 1322h2v6h-2zM2732 1384h2v6h-2zM2850 1322h2v6h-2zM2850 1384h2v6h-2zM2968 1322h2v6h-2zM2968 1384h2v6h-2zM608 1434h2v6h-2zM608 1530h2v6h-2zM960 1434h2v6h-2zM960 1530h2v6h-2zM1078 1434h2v6h-2zM1078 1530h2v6h-2zM1314 1434h2v6h-2zM1314 1530h2v6h-2zM2256 1434h2v6h-2zM2256 1530h2v6h-2zM2492 1434h2v6h-2zM2492 1530h2v6h-2zM2728 1434h2v6h-2zM2728 1530h2v6h-2zM2964 1434h2v6h-2zM2964 1530h2v6h-2zM960 1542h2v6h-2zM960 1638h2v6h-2z" fill="#0e0b16"/><path d="M842 1700h590v2h-590zM2138 1700h944v2h-944z" fill="#262430"/><path d="M842 1688h590v12h-590zM842 1702h590v12h-590zM2138 1688h944v12h-944zM2138 1702h944v12h-944z" fill="#7a67ca"/><path d="M842 1688h118v12h-118zM842 1702h118v12h-118zM2374 1688h472v12h-472zM2374 1702h472v12h-472z" fill="#856fdc"/><path d="M872 1688h2v12h-2zM872 1702h2v12h-2zM902 1688h2v12h-2zM902 1702h2v12h-2zM932 1688h2v12h-2zM932 1702h2v12h-2zM960 1688h2v12h-2zM960 1702h2v12h-2zM990 1688h2v12h-2zM990 1702h2v12h-2zM1020 1688h2v12h-2zM1020 1702h2v12h-2zM1048 1688h2v12h-2zM1048 1702h2v12h-2zM1078 1688h2v12h-2zM1078 1702h2v12h-2zM1108 1688h2v12h-2zM1108 1702h2v12h-2zM1138 1688h2v12h-2zM1138 1702h2v12h-2zM1166 1688h2v12h-2zM1166 1702h2v12h-2zM1196 1688h2v12h-2zM1196 1702h2v12h-2zM1226 1688h2v12h-2zM1226 1702h2v12h-2zM1256 1688h2v12h-2zM1256 1702h2v12h-2zM1284 1688h2v12h-2zM1284 1702h2v12h-2zM1314 1688h2v12h-2zM1314 1702h2v12h-2zM1344 1688h2v12h-2zM1344 1702h2v12h-2zM1372 1688h2v12h-2zM1372 1702h2v12h-2zM1402 1688h2v12h-2zM1402 1702h2v12h-2zM2168 1688h2v12h-2zM2168 1702h2v12h-2zM2198 1688h2v12h-2zM2198 1702h2v12h-2zM2228 1688h2v12h-2zM2228 1702h2v12h-2zM2256 1688h2v12h-2zM2256 1702h2v12h-2zM2286 1688h2v12h-2zM2286 1702h2v12h-2zM2316 1688h2v12h-2zM2316 1702h2v12h-2zM2344 1688h2v12h-2zM2344 1702h2v12h-2zM2374 1688h2v12h-2zM2374 1702h2v12h-2zM2404 1688h2v12h-2zM2404 1702h2v12h-2zM2434 1688h2v12h-2zM2434 1702h2v12h-2zM2462 1688h2v12h-2zM2462 1702h2v12h-2zM2492 1688h2v12h-2zM2492 1702h2v12h-2zM2522 1688h2v12h-2zM2522 1702h2v12h-2zM2552 1688h2v12h-2zM2552 1702h2v12h-2zM2580 1688h2v12h-2zM2580 1702h2v12h-2zM2610 1688h2v12h-2zM2610 1702h2v12h-2zM2640 1688h2v12h-2zM2640 1702h2v12h-2zM2668 1688h2v12h-2zM2668 1702h2v12h-2zM2698 1688h2v12h-2zM2698 1702h2v12h-2zM2728 1688h2v12h-2zM2728 1702h2v12h-2zM2758 1688h2v12h-2zM2758 1702h2v12h-2zM2786 1688h2v12h-2zM2786 1702h2v12h-2zM2816 1688h2v12h-2zM2816 1702h2v12h-2zM2846 1688h2v12h-2zM2846 1702h2v12h-2zM2876 1688h2v12h-2zM2876 1702h2v12h-2zM2904 1688h2v12h-2zM2904 1702h2v12h-2zM2934 1688h2v12h-2zM2934 1702h2v12h-2zM2964 1688h2v12h-2zM2964 1702h2v12h-2zM2992 1688h2v12h-2zM2992 1702h2v12h-2zM3022 1688h2v12h-2zM3022 1702h2v12h-2zM3052 1688h2v12h-2zM3052 1702h2v12h-2z" fill="#6655b0"/><path d="M400 1902h60v11h-60zM2050 1902h60v11h-60zM1874 1915h236v11h-236zM372 1928h118v11h-118zM2020 1928h118v11h-118zM254 1941h118v11h-118zM1904 1941h116v11h-116zM18 1955h118v11h-118zM1432 1955h118v11h-118z" fill="#4592d8"/><path d="M430 1902h2v11h-2zM2080 1902h2v11h-2zM1904 1915h2v11h-2zM1932 1915h2v11h-2zM1962 1915h2v11h-2zM1992 1915h2v11h-2zM2020 1915h2v11h-2zM2050 1915h2v11h-2zM2080 1915h2v11h-2zM400 1928h2v11h-2zM430 1928h2v11h-2zM460 1928h2v11h-2zM2050 1928h2v11h-2zM2080 1928h2v11h-2zM2110 1928h2v11h-2zM282 1941h2v11h-2zM312 1941h2v11h-2zM342 1941h2v11h-2zM1932 1941h2v11h-2zM1962 1941h2v11h-2zM1992 1941h2v11h-2zM48 1955h2v11h-2zM76 1955h2v11h-2zM106 1955h2v11h-2zM1462 1955h2v11h-2zM1490 1955h2v11h-2zM1520 1955h2v11h-2z" fill="#3b7cba"/><path d="M18 1758h590v34h-590zM18 1792h2v104h-2zM608 1758h116v34h-116zM608 1792h2v104h-2zM724 1758h118v34h-118zM724 1792h2v104h-2zM842 1758h118v34h-118zM842 1792h2v104h-2zM960 1758h16v34h-16zM960 1792h2v104h-2zM976 1758h14v34h-14zM976 1792h2v104h-2zM990 1758h14v34h-14zM990 1792h2v104h-2zM1004 1758h16v34h-16zM1004 1792h2v104h-2zM1020 1758h14v34h-14zM1020 1792h2v104h-2zM1034 1758h14v34h-14zM1034 1792h2v104h-2zM1048 1758h16v34h-16zM1048 1792h2v104h-2zM1064 1758h14v34h-14zM1064 1792h2v104h-2zM1078 1758h16v34h-16zM1078 1792h2v104h-2zM1094 1758h14v34h-14zM1094 1792h2v104h-2zM1108 1758h14v34h-14zM1108 1792h2v104h-2zM1122 1758h16v34h-16zM1122 1792h2v104h-2zM1138 1758h14v34h-14zM1138 1792h2v104h-2zM1152 1758h14v34h-14zM1152 1792h2v104h-2zM1166 1758h16v34h-16zM1166 1792h2v104h-2zM1182 1758h14v34h-14zM1182 1792h2v104h-2zM1196 1758h14v34h-14zM1196 1792h2v104h-2zM1210 1758h16v34h-16zM1210 1792h2v104h-2zM1226 1758h14v34h-14zM1226 1792h2v104h-2zM1240 1758h16v34h-16zM1240 1792h2v104h-2zM1256 1758h14v34h-14zM1256 1792h2v104h-2zM1270 1758h14v34h-14zM1270 1792h2v104h-2zM1284 1758h16v34h-16zM1284 1792h2v104h-2zM1300 1758h14v34h-14zM1300 1792h2v104h-2zM1314 1758h14v34h-14zM1314 1792h2v104h-2zM1328 1758h16v34h-16zM1328 1792h2v104h-2zM1344 1758h14v34h-14zM1344 1792h2v104h-2zM1358 1758h14v34h-14zM1358 1792h2v104h-2zM1372 1758h16v34h-16zM1372 1792h2v104h-2zM1388 1758h14v34h-14zM1388 1792h2v104h-2zM1402 1758h16v34h-16zM1402 1792h2v104h-2zM1418 1758h14v34h-14zM1418 1792h2v104h-2zM1668 1758h470v34h-470zM1668 1792h2v104h-2zM2138 1758h472v34h-472zM2138 1792h2v104h-2zM2610 1758h30v34h-30zM2610 1792h2v104h-2zM2640 1758h28v34h-28zM2640 1792h2v104h-2zM2668 1758h30v34h-30zM2668 1792h2v104h-2zM2698 1758h30v34h-30zM2698 1792h2v104h-2zM2728 1758h30v34h-30zM2728 1792h2v104h-2zM2758 1758h28v34h-28zM2758 1792h2v104h-2zM2786 1758h30v34h-30zM2786 1792h2v104h-2zM2816 1758h30v34h-30zM2816 1792h2v104h-2zM2846 1758h30v34h-30zM2846 1792h2v104h-2zM2876 1758h28v34h-28zM2876 1792h2v104h-2zM2904 1758h30v34h-30zM2904 1792h2v104h-2zM2934 1758h30v34h-30zM2934 1792h2v104h-2zM2964 1758h28v34h-28zM2964 1792h2v104h-2zM2992 1758h30v34h-30zM2992 1792h2v104h-2zM3022 1758h30v34h-30zM3022 1792h2v104h-2zM3052 1758h30v34h-30zM3052 1792h2v104h-2z" fill="#357987"/><path d="M20 1760h588v30h-588zM20 1792h588v104h-588zM610 1760h114v30h-114zM610 1792h114v104h-114zM726 1760h116v30h-116zM726 1792h116v104h-116zM844 1760h116v30h-116zM844 1792h116v104h-116zM962 1760h14v30h-14zM962 1792h14v104h-14zM978 1760h12v30h-12zM978 1792h12v104h-12zM992 1760h12v30h-12zM992 1792h12v104h-12zM1006 1760h14v30h-14zM1006 1792h14v104h-14zM1022 1760h12v30h-12zM1022 1792h12v104h-12zM1036 1760h12v30h-12zM1036 1792h12v104h-12zM1050 1760h14v30h-14zM1050 1792h14v104h-14zM1066 1760h12v30h-12zM1066 1792h12v104h-12zM1080 1760h14v30h-14zM1080 1792h14v104h-14zM1096 1760h12v30h-12zM1096 1792h12v104h-12zM1110 1760h12v30h-12zM1110 1792h12v104h-12zM1124 1760h14v30h-14zM1124 1792h14v104h-14zM1140 1760h12v30h-12zM1140 1792h12v104h-12zM1154 1760h12v30h-12zM1154 1792h12v104h-12zM1168 1760h14v30h-14zM1168 1792h14v104h-14zM1184 1760h12v30h-12zM1184 1792h12v104h-12zM1198 1760h12v30h-12zM1198 1792h12v104h-12zM1212 1760h14v30h-14zM1212 1792h14v104h-14zM1228 1760h12v30h-12zM1228 1792h12v104h-12zM1242 1760h14v30h-14zM1242 1792h14v104h-14zM1258 1760h12v30h-12zM1258 1792h12v104h-12zM1272 1760h12v30h-12zM1272 1792h12v104h-12zM1286 1760h14v30h-14zM1286 1792h14v104h-14zM1302 1760h12v30h-12zM1302 1792h12v104h-12zM1316 1760h12v30h-12zM1316 1792h12v104h-12zM1330 1760h14v30h-14zM1330 1792h14v104h-14zM1346 1760h12v30h-12zM1346 1792h12v104h-12zM1360 1760h12v30h-12zM1360 1792h12v104h-12zM1374 1760h14v30h-14zM1374 1792h14v104h-14zM1390 1760h12v30h-12zM1390 1792h12v104h-12zM1404 1760h14v30h-14zM1404 1792h14v104h-14zM1420 1760h12v30h-12zM1420 1792h12v104h-12zM1670 1760h468v30h-468zM1670 1792h468v104h-468zM2140 1760h470v30h-470zM2140 1792h470v104h-470zM2612 1760h28v30h-28zM2612 1792h28v104h-28zM2642 1760h26v30h-26zM2642 1792h26v104h-26zM2670 1760h28v30h-28zM2670 1792h28v104h-28zM2700 1760h28v30h-28zM2700 1792h28v104h-28zM2730 1760h28v30h-28zM2730 1792h28v104h-28zM2760 1760h26v30h-26zM2760 1792h26v104h-26zM2788 1760h28v30h-28zM2788 1792h28v104h-28zM2818 1760h28v30h-28zM2818 1792h28v104h-28zM2848 1760h28v30h-28zM2848 1792h28v104h-28zM2878 1760h26v30h-26zM2878 1792h26v104h-26zM2906 1760h28v30h-28zM2906 1792h28v104h-28zM2936 1760h28v30h-28zM2936 1792h28v104h-28zM2966 1760h26v30h-26zM2966 1792h26v104h-26zM2994 1760h28v30h-28zM2994 1792h28v104h-28zM3024 1760h28v30h-28zM3024 1792h28v104h-28zM3054 1760h28v30h-28zM3054 1792h28v104h-28z" fill="#70e7fd"/><path d="M20 1801.74 22 1806.17 24 1807.07 26 1805.83 28 1804.73 30 1806.69 32 1807.55 34 1806.79 36 1807.23 38 1806.37 40 1806.25 42 1806.31 44 1806.04 46 1805.02 48 1804.88 50 1803.95 52 1806.81 54 1805.97 56 1806.74 58 1806.24 60 1808.66 62 1807.61 64 1807.88 66 1810.02 68 1808.39 70 1807.08 72 1808.06 74 1808.5 76 1808.01 78 1805.53 80 1805.24 82 1804.77 84 1804.47 86 1806.11 88 1805 90 1807.6 92 1806.4 94 1804.78 96 1807.46 98 1807.31 100 1805.92 102 1806.27 104 1807.98 106 1806.16 108 1800.5 110 1805.43 112 1807.18 114 1806.47 116 1806.72 118 1808.45 120 1804.26 122 1807.14 124 1805.73 126 1805.41 128 1805.59 130 1802.11 132 1806.11 134 1805.76 136 1803.7 138 1806.06 140 1805.84 142 1805.36 144 1802.72 146 1806.62 148 1808.14 150 1808.21 152 1803.3 154 1804.51 156 1806.62 158 1804.2 160 1810.37 162 1810.6 164 1809.16 166 1807.3 168 1808.11 170 1808.94 172 1806.62 174 1806.98 176 1806.87 178 1807 180 1805.1 182 1805.72 184 1807.6 186 1805.12 188 1805 190 1807.24 192 1805.38 194 1806.5 196 1803.54 198 1806.4 200 1806.72 202 1806.54 204 1805.69 206 1805.67 208 1807.81 210 1807.83 212 1807.57 214 1806.17 216 1804.8 218 1807.03 220 1806.85 222 1804.49 224 1805.07 226 1803.62 228 1803.22 230 1804.55 232 1804.02 234 1804.24 236 1804.83 238 1805.93 240 1807.44 242 1806.11 244 1806.51 246 1806.12 248 1805.98 250 1808.3 252 1806.54 254 1801.07 256 1802.27 258 1807.8 260 1808.16 262 1805.51 264 1809.31 266 1807.97 268 1808.73 270 1809.29 272 1808.08 274 1807.24 276 1806.61 278 1808.07 280 1807.97 282 1809.05 284 1805.63 286 1803.48 288 1807.08 290 1801.1 292 1805.55 294 1802.96 296 1805.59 298 1806.85 300 1806.5 302 1806.24 304 1804.18 306 1804.37 308 1806.5 310 1807.19 312 1806.02 314 1804.14 316 1805.53 318 1801.53 320 1803.94 322 1803.72 324 1803.82 326 1800.52 328 1806.85 330 1803 332 1804.97 334 1807.58 336 1808.84 338 1806.63 340 1807.61 342 1809.47 344 1806.14 346 1807.87 348 1808.75 350 1806.57 352 1803.7 354 1806.98 356 1806.65 358 1807.17 360 1806.42 362 1807.82 364 1805.56 366 1807.19 368 1807.02 370 1805.05 372 1805.38 374 1805.94 376 1806.91 378 1804.85 380 1806.59 382 1805.22 384 1802.03 386 1802.31 388 1801.71 390 1805.7 392 1805.5 394 1805.46 396 1804.31 398 1800.93 400 1807.44 402 1803.2 404 1803.5 406 1805.57 408 1808.06 410 1805.52 412 1806.45 414 1808.65 416 1807.1 418 1808.5 420 1807.74 422 1806.77 424 1809.96 426 1809.61 428 1807.53 430 1807.69 432 1804.74 434 1807.02 436 1808.9 438 1809.82 440 1808.29 442 1807.04 444 1807.56 446 1809.35 448 1808.38 450 1808.82 452 1805.64 454 1807.96 456 1808.48 458 1806.51 460 1803.72 462 1803.77 464 1801.58 466 1807.45 468 1808.92 470 1808.36 472 1807.78 474 1809.27 476 1808.99 478 1810.3 480 1809.95 482 1807.56 484 1804.55 486 1806.62 488 1808.48 490 1800.67 492 1802.8 494 1805.29 496 1804.79 498 1806.23 500 1800.72 502 1800.88 504 1804.5 506 1804.76 508 1805.65 510 1805.36 512 1806.23 514 1804.91 516 1804.99 518 1807.58 520 1805.69 522 1805.14 524 1804.12 526 1804.57 528 1807.27 530 1805.77 532 1806.16 534 1805.17 536 1806.1 538 1805.38 540 1808.67 542 1805.95 544 1803.15 546 1809.56 548 1809.58 550 1805.55 552 1805.67 554 1806.81 556 1807.5 558 1810.5 560 1808.38 562 1806.67 564 1810.36 566 1809.56 568 1808.51 570 1809.52 572 1808.68 574 1808.98 576 1806.3 578 1804.51 580 1806.42 582 1805.57 584 1805.66 586 1805.83 588 1806.55 590 1805.38 592 1806.62 594 1806.36 596 1801.47 598 1805.59 600 1805.49 602 1808.09 604 1805.84 606 1807.69 608 1805.27 L608 1833.3 606 1830.96 604 1832.75 602 1830.57 600 1833.09 598 1833 596 1836.98 594 1832.24 592 1831.99 590 1833.19 588 1832.06 586 1832.76 584 1832.92 582 1833.02 580 1832.19 578 1834.04 576 1832.3 574 1829.71 572 1830 570 1829.18 568 1830.16 566 1829.14 564 1828.37 562 1831.95 560 1830.28 558 1828.23 556 1831.14 554 1831.81 552 1832.91 550 1833.03 548 1829.12 546 1829.14 544 1835.36 542 1832.64 540 1830.01 538 1833.2 536 1832.5 534 1833.4 532 1832.44 530 1832.82 528 1831.36 526 1833.98 524 1834.42 522 1833.43 520 1832.89 518 1831.06 516 1833.57 514 1833.66 512 1832.38 510 1833.22 508 1832.93 506 1833.8 504 1834.05 502 1837.56 500 1837.72 498 1832.37 496 1833.77 494 1833.29 492 1835.7 490 1837.77 488 1830.19 486 1832 484 1834 482 1831.09 480 1828.76 478 1828.42 476 1829.69 474 1829.42 472 1830.87 470 1830.31 468 1829.76 466 1831.19 464 1836.89 462 1834.76 460 1834.8 458 1832.1 456 1830.19 454 1830.7 452 1832.94 450 1829.86 448 1830.28 446 1829.34 444 1831.08 442 1831.59 440 1830.37 438 1828.88 436 1829.79 434 1831.61 432 1833.81 430 1830.95 428 1831.11 426 1829.09 424 1828.76 422 1831.85 420 1830.91 418 1830.17 416 1831.53 414 1830.02 412 1832.16 410 1833.06 408 1830.59 406 1833.01 404 1835.02 402 1835.31 400 1831.2 398 1837.52 396 1834.24 394 1833.12 392 1833.08 390 1832.89 388 1836.75 386 1836.17 384 1836.44 382 1833.36 380 1832.02 378 1833.71 376 1831.71 374 1832.66 372 1833.19 370 1833.52 368 1831.6 366 1831.44 364 1833.02 362 1830.83 360 1832.19 358 1831.46 356 1831.97 354 1831.65 352 1834.82 350 1832.04 348 1829.93 346 1830.78 344 1832.46 342 1829.23 340 1831.03 338 1831.99 336 1829.84 334 1831.06 332 1833.6 330 1835.51 328 1831.77 326 1837.91 324 1834.71 322 1834.81 320 1834.6 318 1836.93 316 1833.05 314 1834.4 312 1832.57 310 1831.44 308 1832.11 306 1834.17 304 1834.36 302 1832.36 300 1832.11 298 1831.77 296 1833 294 1835.54 292 1833.03 290 1837.35 288 1831.54 286 1835.04 284 1832.95 282 1829.64 280 1830.69 278 1830.59 276 1832 274 1831.39 272 1830.58 270 1829.4 268 1829.95 266 1830.68 264 1829.38 262 1833.07 260 1830.5 258 1830.85 256 1836.21 254 1837.38 252 1832.07 250 1830.36 248 1832.61 246 1832.48 244 1832.1 242 1832.49 240 1831.2 238 1832.66 236 1833.73 234 1834.3 232 1834.52 230 1834 228 1835.29 226 1834.91 224 1833.49 222 1834.06 220 1831.77 218 1831.59 216 1833.76 214 1832.43 212 1831.07 210 1830.82 208 1830.84 206 1832.92 204 1832.9 202 1832.08 200 1831.9 198 1832.21 196 1834.98 194 1832.11 192 1833.19 190 1831.39 188 1833.57 186 1833.45 184 1831.04 182 1832.87 180 1833.46 178 1831.62 176 1831.75 174 1831.65 172 1831.99 170 1829.74 168 1830.55 166 1831.33 164 1829.53 162 1828.13 160 1828.36 158 1834.34 156 1831.99 154 1834.04 152 1835.22 150 1830.46 148 1830.51 146 1831.99 144 1835.78 142 1833.22 140 1832.75 138 1832.53 136 1834.83 134 1832.83 132 1832.49 130 1836.37 128 1832.99 126 1833.17 124 1832.86 122 1831.49 120 1834.28 118 1830.21 116 1831.89 114 1832.14 112 1831.45 110 1833.15 108 1837.93 106 1832.44 104 1830.68 102 1832.33 100 1832.67 98 1831.32 96 1831.18 94 1833.78 92 1832.21 90 1831.04 88 1833.56 86 1832.49 84 1834.08 82 1833.78 80 1833.33 78 1833.05 76 1830.65 74 1830.17 72 1830.6 70 1831.55 68 1830.28 66 1828.69 64 1830.78 62 1831.03 60 1830.01 58 1832.36 56 1831.87 54 1832.62 52 1831.81 50 1834.58 48 1833.68 46 1833.55 44 1832.55 42 1832.3 40 1832.35 38 1832.23 36 1831.4 34 1831.83 32 1831.09 30 1831.92 28 1833.83 26 1832.76 24 1831.56 22 1832.43 20 1836.72ZM20 1853.74 22 1858.17 24 1859.07 26 1857.83 28 1856.73 30 1858.69 32 1859.55 34 1858.79 36 1859.23 38 1858.37 40 1858.25 42 1858.31 44 1858.04 46 1857.02 48 1856.88 50 1855.95 52 1858.81 54 1857.97 56 1858.74 58 1858.24 60 1860.66 62 1859.61 64 1859.88 66 1862.02 68 1860.39 70 1859.08 72 1860.06 74 1860.5 76 1860.01 78 1857.53 80 1857.24 82 1856.77 84 1856.47 86 1858.11 88 1857 90 1859.6 92 1858.4 94 1856.78 96 1859.46 98 1859.31 100 1857.92 102 1858.27 104 1859.98 106 1858.16 108 1852.5 110 1857.43 112 1859.18 114 1858.47 116 1858.72 118 1860.45 120 1856.26 122 1859.14 124 1857.73 126 1857.41 128 1857.59 130 1854.11 132 1858.11 134 1857.76 136 1855.7 138 1858.06 140 1857.84 142 1857.36 144 1854.72 146 1858.62 148 1860.14 150 1860.21 152 1855.3 154 1856.51 156 1858.62 158 1856.2 160 1862.37 162 1862.6 164 1861.16 166 1859.3 168 1860.11 170 1860.94 172 1858.62 174 1858.98 176 1858.87 178 1859 180 1857.1 182 1857.72 184 1859.6 186 1857.12 188 1857 190 1859.24 192 1857.38 194 1858.5 196 1855.54 198 1858.4 200 1858.72 202 1858.54 204 1857.69 206 1857.67 208 1859.81 210 1859.83 212 1859.57 214 1858.17 216 1856.8 218 1859.03 220 1858.85 222 1856.49 224 1857.07 226 1855.62 228 1855.22 230 1856.55 232 1856.02 234 1856.24 236 1856.83 238 1857.93 240 1859.44 242 1858.11 244 1858.51 246 1858.12 248 1857.98 250 1860.3 252 1858.54 254 1853.07 256 1854.27 258 1859.8 260 1860.16 262 1857.51 264 1861.31 266 1859.97 268 1860.73 270 1861.29 272 1860.08 274 1859.24 276 1858.61 278 1860.07 280 1859.97 282 1861.05 284 1857.63 286 1855.48 288 1859.08 290 1853.1 292 1857.55 294 1854.96 296 1857.59 298 1858.85 300 1858.5 302 1858.24 304 1856.18 306 1856.37 308 1858.5 310 1859.19 312 1858.02 314 1856.14 316 1857.53 318 1853.53 320 1855.94 322 1855.72 324 1855.82 326 1852.52 328 1858.85 330 1855 332 1856.97 334 1859.58 336 1860.84 338 1858.63 340 1859.61 342 1861.47 344 1858.14 346 1859.87 348 1860.75 350 1858.57 352 1855.7 354 1858.98 356 1858.65 358 1859.17 360 1858.42 362 1859.82 364 1857.56 366 1859.19 368 1859.02 370 1857.05 372 1857.38 374 1857.94 376 1858.91 378 1856.85 380 1858.59 382 1857.22 384 1854.03 386 1854.31 388 1853.71 390 1857.7 392 1857.5 394 1857.46 396 1856.31 398 1852.93 400 1859.44 402 1855.2 404 1855.5 406 1857.57 408 1860.06 410 1857.52 412 1858.45 414 1860.65 416 1859.1 418 1860.5 420 1859.74 422 1858.77 424 1861.96 426 1861.61 428 1859.53 430 1859.69 432 1856.74 434 1859.02 436 1860.9 438 1861.82 440 1860.29 442 1859.04 444 1859.56 446 1861.35 448 1860.38 450 1860.82 452 1857.64 454 1859.96 456 1860.48 458 1858.51 460 1855.72 462 1855.77 464 1853.58 466 1859.45 468 1860.92 470 1860.36 472 1859.78 474 1861.27 476 1860.99 478 1862.3 480 1861.95 482 1859.56 484 1856.55 486 1858.62 488 1860.48 490 1852.67 492 1854.8 494 1857.29 496 1856.79 498 1858.23 500 1852.72 502 1852.88 504 1856.5 506 1856.76 508 1857.65 510 1857.36 512 1858.23 514 1856.91 516 1856.99 518 1859.58 520 1857.69 522 1857.14 524 1856.12 526 1856.57 528 1859.27 530 1857.77 532 1858.16 534 1857.17 536 1858.1 538 1857.38 540 1860.67 542 1857.95 544 1855.15 546 1861.56 548 1861.58 550 1857.55 552 1857.67 554 1858.81 556 1859.5 558 1862.5 560 1860.38 562 1858.67 564 1862.36 566 1861.56 568 1860.51 570 1861.52 572 1860.68 574 1860.98 576 1858.3 578 1856.51 580 1858.42 582 1857.57 584 1857.66 586 1857.83 588 1858.55 590 1857.38 592 1858.62 594 1858.36 596 1853.47 598 1857.59 600 1857.49 602 1860.09 604 1857.84 606 1859.69 608 1857.27 L608 1886.01 606 1883.55 604 1885.43 602 1883.14 600 1885.79 598 1885.69 596 1889.89 594 1884.9 592 1884.64 590 1885.9 588 1884.71 586 1885.44 584 1885.61 582 1885.71 580 1884.84 578 1886.79 576 1884.96 574 1882.23 572 1882.54 570 1881.68 568 1882.71 566 1881.64 564 1880.82 562 1884.59 560 1882.84 558 1880.68 556 1883.74 554 1884.45 552 1885.6 550 1885.73 548 1881.62 546 1881.64 544 1888.18 542 1885.32 540 1882.55 538 1885.9 536 1885.17 534 1886.12 532 1885.11 530 1885.51 528 1883.97 526 1886.73 524 1887.18 522 1886.14 520 1885.58 518 1883.65 516 1886.3 514 1886.39 512 1885.04 510 1885.92 508 1885.63 506 1886.54 504 1886.8 502 1890.49 500 1890.66 498 1885.03 496 1886.5 494 1886 492 1888.54 490 1890.71 488 1882.74 486 1884.64 484 1886.75 482 1883.68 480 1881.24 478 1880.88 476 1882.22 474 1881.94 472 1883.46 470 1882.87 468 1882.29 466 1883.79 464 1889.78 462 1887.55 460 1887.59 458 1884.75 456 1882.74 454 1883.27 452 1885.64 450 1882.4 448 1882.84 446 1881.85 444 1883.68 442 1884.21 440 1882.93 438 1881.37 436 1882.32 434 1884.23 432 1886.55 430 1883.54 428 1883.71 426 1881.58 424 1881.23 422 1884.49 420 1883.49 418 1882.72 416 1884.15 414 1882.57 412 1884.81 410 1885.76 408 1883.16 406 1885.7 404 1887.82 402 1888.12 400 1883.8 398 1890.44 396 1887 394 1885.82 392 1885.78 390 1885.58 388 1889.64 386 1889.03 384 1889.32 382 1886.07 380 1884.67 378 1886.44 376 1884.34 374 1885.34 372 1885.9 370 1886.24 368 1884.23 366 1884.06 364 1885.72 362 1883.41 360 1884.84 358 1884.07 356 1884.61 354 1884.27 352 1887.61 350 1884.69 348 1882.46 346 1883.37 344 1885.13 342 1881.73 340 1883.63 338 1884.63 336 1882.37 334 1883.66 332 1886.32 330 1888.33 328 1884.41 326 1890.86 324 1887.49 322 1887.6 320 1887.38 318 1889.82 316 1885.75 314 1887.17 312 1885.25 310 1884.06 308 1884.76 306 1886.93 304 1887.12 302 1885.02 300 1884.76 298 1884.4 296 1885.69 294 1888.37 292 1885.73 290 1890.27 288 1884.17 286 1887.84 284 1885.64 282 1882.16 280 1883.26 278 1883.16 276 1884.64 274 1884 272 1883.15 270 1881.91 268 1882.49 266 1883.26 264 1881.89 262 1885.77 260 1883.07 258 1883.44 256 1889.07 254 1890.3 252 1884.72 250 1882.92 248 1885.29 246 1885.15 244 1884.75 242 1885.16 240 1883.8 238 1885.34 236 1886.47 234 1887.07 232 1887.29 230 1886.75 228 1888.1 226 1887.7 224 1886.21 222 1886.81 220 1884.4 218 1884.21 216 1886.49 214 1885.09 212 1883.67 210 1883.4 208 1883.43 206 1885.61 204 1885.59 202 1884.72 200 1884.53 198 1884.86 196 1887.78 194 1884.76 192 1885.9 190 1884.01 188 1886.29 186 1886.17 184 1883.63 182 1885.55 180 1886.18 178 1884.25 176 1884.38 174 1884.27 172 1884.64 170 1882.27 168 1883.12 166 1883.94 164 1882.05 162 1880.58 160 1880.81 158 1887.11 156 1884.64 154 1886.79 152 1888.03 150 1883.02 148 1883.08 146 1884.64 144 1888.62 142 1885.92 140 1885.43 138 1885.21 136 1887.62 134 1885.51 132 1885.16 130 1889.24 128 1885.69 126 1885.87 124 1885.55 122 1884.1 120 1887.04 118 1882.77 116 1884.53 114 1884.79 112 1884.07 110 1885.86 108 1890.88 106 1885.1 104 1883.25 102 1884.99 100 1885.35 98 1883.93 96 1883.79 94 1886.52 92 1884.86 90 1883.64 88 1886.29 86 1885.16 84 1886.83 82 1886.52 80 1886.04 78 1885.75 76 1883.22 74 1882.72 72 1883.17 70 1884.17 68 1882.83 66 1881.17 64 1883.36 62 1883.63 60 1882.55 58 1885.02 56 1884.51 54 1885.3 52 1884.44 50 1887.36 48 1886.41 46 1886.27 44 1885.23 42 1884.96 40 1885.02 38 1884.89 36 1884.01 34 1884.46 32 1883.69 30 1884.56 28 1886.57 26 1885.44 24 1884.18 22 1885.1 20 1889.61ZM610 1802.61 612 1804.93 614 1805.4 616 1803.74 618 1805.03 620 1806.77 622 1805 624 1804.13 626 1803.83 628 1806.02 630 1806.15 632 1801.99 634 1805.41 636 1804.68 638 1805.21 640 1803.73 642 1806.4 644 1802.77 646 1807.27 648 1807.44 650 1806.86 652 1808.14 654 1806.52 656 1807.04 658 1808.51 660 1807.93 662 1810.08 664 1808.95 666 1806.4 668 1802.95 670 1806.52 672 1809.67 674 1810.69 676 1810.63 678 1811.09 680 1808.08 682 1810.6 684 1809.73 686 1810.5 688 1803.32 690 1806.91 692 1803.66 694 1809.13 696 1808.17 698 1804.7 700 1804.93 702 1808.04 704 1805.68 706 1805.9 708 1808.49 710 1809.15 712 1807.46 714 1808.16 716 1807.03 718 1806.89 720 1806.64 722 1808.55 724 1806.23 L724 1832.37 722 1830.12 720 1831.97 718 1831.73 716 1831.6 714 1830.5 712 1831.18 710 1829.54 708 1830.18 706 1832.69 704 1832.9 702 1830.61 700 1833.63 698 1833.86 696 1830.49 694 1829.56 692 1834.86 690 1831.71 688 1835.2 686 1828.23 684 1828.98 682 1828.13 680 1830.58 678 1827.65 676 1828.1 674 1828.04 672 1829.04 670 1832.09 668 1835.55 666 1832.21 664 1829.73 662 1828.64 660 1830.72 658 1830.16 656 1831.58 654 1832.1 652 1830.52 650 1831.76 648 1831.2 646 1831.36 644 1835.73 642 1832.21 640 1834.79 638 1833.36 636 1833.88 634 1833.17 632 1836.48 630 1832.45 628 1832.58 626 1834.7 624 1834.41 622 1833.57 620 1831.85 618 1833.54 616 1834.78 614 1833.18 612 1833.63 610 1835.89ZM610 1854.61 612 1856.93 614 1857.4 616 1855.74 618 1857.03 620 1858.77 622 1857 624 1856.13 626 1855.83 628 1858.02 630 1858.15 632 1853.99 634 1857.41 636 1856.68 638 1857.21 640 1855.73 642 1858.4 644 1854.77 646 1859.27 648 1859.44 650 1858.86 652 1860.14 654 1858.52 656 1859.04 658 1860.51 660 1859.93 662 1862.08 664 1860.95 666 1858.4 668 1854.95 670 1858.52 672 1861.67 674 1862.69 676 1862.63 678 1863.09 680 1860.08 682 1862.6 684 1861.73 686 1862.5 688 1855.32 690 1858.91 692 1855.66 694 1861.13 696 1860.17 698 1856.7 700 1856.93 702 1860.04 704 1857.68 706 1857.9 708 1860.49 710 1861.15 712 1859.46 714 1860.16 716 1859.03 718 1858.89 720 1858.64 722 1860.55 724 1858.23 L724 1885.03 722 1882.67 720 1884.62 718 1884.36 716 1884.22 714 1883.07 712 1883.78 710 1882.06 708 1882.73 706 1885.37 704 1885.59 702 1883.19 700 1886.36 698 1886.6 696 1883.06 694 1882.08 692 1887.65 690 1884.34 688 1888.01 686 1880.68 684 1881.47 682 1880.58 680 1883.15 678 1880.08 676 1880.54 674 1880.48 672 1881.53 670 1884.74 668 1888.38 666 1884.86 664 1882.26 662 1881.11 660 1883.3 658 1882.71 656 1884.21 654 1884.74 652 1883.09 650 1884.39 648 1883.8 646 1883.98 644 1888.56 642 1884.86 640 1887.58 638 1886.07 636 1886.62 634 1885.87 632 1889.36 630 1885.12 628 1885.25 626 1887.49 624 1887.17 622 1886.29 620 1884.49 618 1886.26 616 1887.57 614 1885.88 612 1886.36 610 1888.73ZM726 1802.96 728 1805.06 730 1804.04 732 1804.89 734 1803.82 736 1802.83 738 1805.21 740 1803.61 742 1804.71 744 1805.02 746 1807.13 748 1805.92 750 1806.61 752 1805.88 754 1804.33 756 1807.27 758 1807.58 760 1807.5 762 1807.43 764 1807.1 766 1803.27 768 1807.76 770 1808.3 772 1807.41 774 1808.36 776 1805.17 778 1810.23 780 1810.15 782 1810.94 784 1807.45 786 1809.32 788 1809.85 790 1810.41 792 1807.73 794 1808.14 796 1808.13 798 1810.15 800 1807.71 802 1807.34 804 1809.01 806 1809.33 808 1807.91 810 1803.34 812 1806.47 814 1805.96 816 1806.25 818 1808.21 820 1808.05 822 1801.78 824 1800.5 826 1807.25 828 1806.09 830 1808.21 832 1805.43 834 1806.8 836 1808.38 838 1805.26 840 1805.31 842 1804.7 L842 1833.86 840 1833.26 838 1833.31 836 1830.28 834 1831.82 832 1833.15 830 1830.45 828 1832.51 826 1831.38 824 1837.93 822 1836.69 820 1830.61 818 1830.45 816 1832.35 814 1832.63 812 1832.14 810 1835.18 808 1830.74 806 1829.37 804 1829.67 802 1831.3 800 1830.94 798 1828.57 796 1830.53 794 1830.52 792 1830.92 790 1828.32 788 1828.86 786 1829.37 784 1831.19 782 1827.8 780 1828.57 778 1828.49 776 1833.4 774 1830.3 772 1831.23 770 1830.37 768 1830.89 766 1835.25 764 1831.53 762 1831.21 760 1831.14 758 1831.06 756 1831.36 754 1834.22 752 1832.71 750 1832 748 1832.68 746 1831.5 744 1833.55 742 1833.84 740 1834.92 738 1833.36 736 1835.67 734 1834.71 732 1833.67 730 1834.5 728 1833.5 726 1835.54ZM726 1854.96 728 1857.06 730 1856.04 732 1856.89 734 1855.82 736 1854.83 738 1857.21 740 1855.61 742 1856.71 744 1857.02 746 1859.13 748 1857.92 750 1858.61 752 1857.88 754 1856.33 756 1859.27 758 1859.58 760 1859.5 762 1859.43 764 1859.1 766 1855.27 768 1859.76 770 1860.3 772 1859.41 774 1860.36 776 1857.17 778 1862.23 780 1862.15 782 1862.94 784 1859.45 786 1861.32 788 1861.85 790 1862.41 792 1859.73 794 1860.14 796 1860.13 798 1862.15 800 1859.71 802 1859.34 804 1861.01 806 1861.33 808 1859.91 810 1855.34 812 1858.47 814 1857.96 816 1858.25 818 1860.21 820 1860.05 822 1853.78 824 1852.5 826 1859.25 828 1858.09 830 1860.21 832 1857.43 834 1858.8 836 1860.38 838 1857.26 840 1857.31 842 1856.7 L842 1886.6 840 1885.97 838 1886.02 836 1882.84 834 1884.46 832 1885.85 830 1883.01 828 1885.18 826 1884 824 1890.88 822 1889.57 820 1883.18 818 1883.02 816 1885.01 814 1885.31 812 1884.8 810 1887.98 808 1883.32 806 1881.88 804 1882.2 802 1883.91 800 1883.53 798 1881.03 796 1883.09 794 1883.08 792 1883.51 790 1880.77 788 1881.35 786 1881.88 784 1883.79 782 1880.23 780 1881.04 778 1880.95 776 1886.11 774 1882.86 772 1883.83 770 1882.93 768 1883.47 766 1888.06 764 1884.15 762 1883.81 760 1883.74 758 1883.65 756 1883.97 754 1886.98 752 1885.39 750 1884.65 748 1885.36 746 1884.12 744 1886.27 742 1886.58 740 1887.71 738 1886.07 736 1888.5 734 1887.5 732 1886.41 730 1887.27 728 1886.23 726 1888.37ZM844 1802.28 846 1806.06 848 1801.89 850 1804.78 852 1806.51 854 1805.55 856 1805.8 858 1808.38 860 1806.54 862 1808.13 864 1807.18 866 1807.67 868 1806.52 870 1805.41 872 1801.97 874 1803.26 876 1801.75 878 1807.47 880 1808.4 882 1807.6 884 1810.41 886 1803.62 888 1808.59 890 1805.69 892 1810.87 894 1809.24 896 1810.55 898 1807.98 900 1810.74 902 1808.92 904 1808.27 906 1808.27 908 1807.73 910 1807.95 912 1805.91 914 1807.48 916 1806.88 918 1808.37 920 1805.9 922 1806.77 924 1807.66 926 1809.27 928 1808.77 930 1809.17 932 1805.44 934 1805.59 936 1807.08 938 1805.58 940 1805.7 942 1808.42 944 1806.56 946 1808.93 948 1808.51 950 1807.21 952 1805.95 954 1806.92 956 1805.37 958 1806.54 960 1804.24 L960 1834.31 958 1832.07 956 1833.21 954 1831.71 952 1832.64 950 1831.42 948 1830.16 946 1829.75 944 1832.05 942 1830.25 940 1832.89 938 1833 936 1831.55 934 1832.99 932 1833.14 930 1829.52 928 1829.91 926 1829.43 924 1830.98 922 1831.84 920 1832.69 918 1830.29 916 1831.74 914 1831.16 912 1832.69 910 1830.71 908 1830.92 906 1830.39 904 1830.39 902 1829.76 900 1828 898 1830.67 896 1828.18 894 1829.45 892 1827.87 890 1832.9 888 1830.09 886 1834.91 884 1828.32 882 1831.05 880 1830.27 878 1831.17 876 1836.71 874 1835.25 872 1836.5 870 1833.17 868 1832.09 866 1830.98 864 1831.45 862 1830.53 860 1832.07 858 1830.28 856 1832.79 854 1833.03 852 1832.1 850 1833.78 848 1836.58 846 1832.54 844 1836.2ZM844 1854.28 846 1858.06 848 1853.89 850 1856.78 852 1858.51 854 1857.55 856 1857.8 858 1860.38 860 1858.54 862 1860.13 864 1859.18 866 1859.67 868 1858.52 870 1857.41 872 1853.97 874 1855.26 876 1853.75 878 1859.47 880 1860.4 882 1859.6 884 1862.41 886 1855.62 888 1860.59 890 1857.69 892 1862.87 894 1861.24 896 1862.55 898 1859.98 900 1862.74 902 1860.92 904 1860.27 906 1860.27 908 1859.73 910 1859.95 912 1857.91 914 1859.48 916 1858.88 918 1860.37 920 1857.9 922 1858.77 924 1859.66 926 1861.27 928 1860.77 930 1861.17 932 1857.44 934 1857.59 936 1859.08 938 1857.58 940 1857.7 942 1860.42 944 1858.56 946 1860.93 948 1860.51 950 1859.21 952 1857.95 954 1858.92 956 1857.37 958 1858.54 960 1856.24 L960 1887.07 958 1884.72 956 1885.91 954 1884.33 952 1885.32 950 1884.03 948 1882.71 946 1882.28 944 1884.7 942 1882.81 940 1885.58 938 1885.7 936 1884.17 934 1885.69 932 1885.84 930 1882.04 928 1882.44 926 1881.94 924 1883.57 922 1884.48 920 1885.37 918 1882.85 916 1884.37 914 1883.76 912 1885.37 910 1883.28 908 1883.51 906 1882.95 904 1882.95 902 1882.29 900 1880.44 898 1883.25 896 1880.63 894 1881.97 892 1880.31 890 1885.59 888 1882.63 886 1887.7 884 1880.77 882 1883.64 880 1882.83 878 1883.77 876 1889.6 874 1888.06 872 1889.38 870 1885.87 868 1884.74 866 1883.57 864 1884.06 862 1883.1 860 1884.72 858 1882.84 856 1885.48 854 1885.73 852 1884.75 850 1886.52 848 1889.46 846 1885.21 844 1889.06ZM962 1808.37 962.92 1810.1 963.85 1811.83 964.77 1810.16 965.7 1808.49 966.62 1810.22 967.55 1811.96 968.47 1810.29 969.4 1808.62 970.32 1810.35 971.25 1812.08 972.17 1810.41 973.1 1808.74 974.02 1810.48 974.95 1812.21 975.87 1810.54 L975.87 1828.19 974.95 1826.57 974.02 1828.25 973.1 1829.93 972.17 1828.31 971.25 1826.7 970.32 1828.37 969.4 1830.05 968.47 1828.44 967.55 1826.82 966.62 1828.5 965.7 1830.18 964.77 1828.56 963.85 1826.94 962.92 1828.62 962 1830.3ZM962 1860.37 962.92 1862.1 963.85 1863.83 964.77 1862.16 965.7 1860.49 966.62 1862.22 967.55 1863.96 968.47 1862.29 969.4 1860.62 970.32 1862.35 971.25 1864.08 972.17 1862.41 973.1 1860.74 974.02 1862.48 974.95 1864.21 975.87 1862.54 L975.87 1880.64 974.95 1878.94 974.02 1880.7 973.1 1882.47 972.17 1880.77 971.25 1879.07 970.32 1880.83 969.4 1882.6 968.47 1880.9 967.55 1879.19 966.62 1880.96 965.7 1882.73 964.77 1881.02 963.85 1879.32 962.92 1881.09 962 1882.85ZM978 1808.37 978.92 1810.1 979.85 1811.83 980.77 1810.16 981.7 1808.49 982.62 1810.22 983.55 1811.96 984.47 1810.29 985.4 1808.62 986.32 1810.35 987.25 1812.08 988.17 1810.41 989.1 1808.74 L989.1 1829.93 988.17 1828.31 987.25 1826.7 986.32 1828.37 985.4 1830.05 984.47 1828.44 983.55 1826.82 982.62 1828.5 981.7 1830.18 980.77 1828.56 979.85 1826.94 978.92 1828.62 978 1830.3ZM978 1860.37 978.92 1862.1 979.85 1863.83 980.77 1862.16 981.7 1860.49 982.62 1862.22 983.55 1863.96 984.47 1862.29 985.4 1860.62 986.32 1862.35 987.25 1864.08 988.17 1862.41 989.1 1860.74 L989.1 1882.47 988.17 1880.77 987.25 1879.07 986.32 1880.83 985.4 1882.6 984.47 1880.9 983.55 1879.19 982.62 1880.96 981.7 1882.73 980.77 1881.02 979.85 1879.32 978.92 1881.09 978 1882.85ZM992 1808.37 992.92 1810.1 993.85 1811.83 994.77 1810.16 995.7 1808.49 996.62 1810.22 997.55 1811.96 998.47 1810.29 999.4 1808.62 1000.32 1810.35 1001.25 1812.08 1002.17 1810.41 1003.1 1808.74 L1003.1 1829.93 1002.17 1828.31 1001.25 1826.7 1000.32 1828.37 999.4 1830.05 998.47 1828.44 997.55 1826.82 996.62 1828.5 995.7 1830.18 994.77 1828.56 993.85 1826.94 992.92 1828.62 992 1830.3ZM992 1860.37 992.92 1862.1 993.85 1863.83 994.77 1862.16 995.7 1860.49 996.62 1862.22 997.55 1863.96 998.47 1862.29 999.4 1860.62 1000.32 1862.35 1001.25 1864.08 1002.17 1862.41 1003.1 1860.74 L1003.1 1882.47 1002.17 1880.77 1001.25 1879.07 1000.32 1880.83 999.4 1882.6 998.47 1880.9 997.55 1879.19 996.62 1880.96 995.7 1882.73 994.77 1881.02 993.85 1879.32 992.92 1881.09 992 1882.85ZM1006 1808.37 1006.92 1810.1 1007.85 1811.83 1008.77 1810.16 1009.7 1808.49 1010.62 1810.22 1011.55 1811.96 1012.47 1810.29 1013.4 1808.62 1014.32 1810.35 1015.25 1812.08 1016.17 1810.41 1017.1 1808.74 1018.02 1810.48 1018.95 1812.21 1019.87 1810.54 L1019.87 1828.19 1018.95 1826.57 1018.02 1828.25 1017.1 1829.93 1016.17 1828.31 1015.25 1826.7 1014.32 1828.37 1013.4 1830.05 1012.47 1828.44 1011.55 1826.82 1010.62 1828.5 1009.7 1830.18 1008.77 1828.56 1007.85 1826.94 1006.92 1828.62 1006 1830.3ZM1006 1860.37 1006.92 1862.1 1007.85 1863.83 1008.77 1862.16 1009.7 1860.49 1010.62 1862.22 1011.55 1863.96 1012.47 1862.29 1013.4 1860.62 1014.32 1862.35 1015.25 1864.08 1016.17 1862.41 1017.1 1860.74 1018.02 1862.48 1018.95 1864.21 1019.87 1862.54 L1019.87 1880.64 1018.95 1878.94 1018.02 1880.7 1017.1 1882.47 1016.17 1880.77 1015.25 1879.07 1014.32 1880.83 1013.4 1882.6 1012.47 1880.9 1011.55 1879.19 1010.62 1880.96 1009.7 1882.73 1008.77 1881.02 1007.85 1879.32 1006.92 1881.09 1006 1882.85ZM1022 1808.37 1022.92 1810.1 1023.85 1811.83 1024.77 1810.16 1025.7 1808.49 1026.62 1810.22 1027.55 1811.96 1028.47 1810.29 1029.4 1808.62 1030.32 1810.35 1031.25 1812.08 1032.17 1810.41 1033.1 1808.74 L1033.1 1829.93 1032.17 1828.31 1031.25 1826.7 1030.32 1828.37 1029.4 1830.05 1028.47 1828.44 1027.55 1826.82 1026.62 1828.5 1025.7 1830.18 1024.77 1828.56 1023.85 1826.94 1022.92 1828.62 1022 1830.3ZM1022 1860.37 1022.92 1862.1 1023.85 1863.83 1024.77 1862.16 1025.7 1860.49 1026.62 1862.22 1027.55 1863.96 1028.47 1862.29 1029.4 1860.62 1030.32 1862.35 1031.25 1864.08 1032.17 1862.41 1033.1 1860.74 L1033.1 1882.47 1032.17 1880.77 1031.25 1879.07 1030.32 1880.83 1029.4 1882.6 1028.47 1880.9 1027.55 1879.19 1026.62 1880.96 1025.7 1882.73 1024.77 1881.02 1023.85 1879.32 1022.92 1881.09 1022 1882.85ZM1036 1808.37 1036.92 1810.1 1037.85 1811.83 1038.77 1810.16 1039.7 1808.49 1040.62 1810.22 1041.55 1811.96 1042.47 1810.29 1043.4 1808.62 1044.32 1810.35 1045.25 1812.08 1046.17 1810.41 1047.1 1808.74 L1047.1 1829.93 1046.17 1828.31 1045.25 1826.7 1044.32 1828.37 1043.4 1830.05 1042.47 1828.44 1041.55 1826.82 1040.62 1828.5 1039.7 1830.18 1038.77 1828.56 1037.85 1826.94 1036.92 1828.62 1036 1830.3ZM1036 1860.37 1036.92 1862.1 1037.85 1863.83 1038.77 1862.16 1039.7 1860.49 1040.62 1862.22 1041.55 1863.96 1042.47 1862.29 1043.4 1860.62 1044.32 1862.35 1045.25 1864.08 1046.17 1862.41 1047.1 1860.74 L1047.1 1882.47 1046.17 1880.77 1045.25 1879.07 1044.32 1880.83 1043.4 1882.6 1042.47 1880.9 1041.55 1879.19 1040.62 1880.96 1039.7 1882.73 1038.77 1881.02 1037.85 1879.32 1036.92 1881.09 1036 1882.85ZM1050 1808.37 1050.92 1810.1 1051.85 1811.83 1052.77 1810.16 1053.7 1808.49 1054.62 1810.22 1055.55 1811.96 1056.47 1810.29 1057.4 1808.62 1058.32 1810.35 1059.25 1812.08 1060.17 1810.41 1061.1 1808.74 1062.02 1810.48 1062.95 1812.21 1063.87 1810.54 L1063.87 1828.19 1062.95 1826.57 1062.02 1828.25 1061.1 1829.93 1060.17 1828.31 1059.25 1826.7 1058.32 1828.37 1057.4 1830.05 1056.47 1828.44 1055.55 1826.82 1054.62 1828.5 1053.7 1830.18 1052.77 1828.56 1051.85 1826.94 1050.92 1828.62 1050 1830.3ZM1050 1860.37 1050.92 1862.1 1051.85 1863.83 1052.77 1862.16 1053.7 1860.49 1054.62 1862.22 1055.55 1863.96 1056.47 1862.29 1057.4 1860.62 1058.32 1862.35 1059.25 1864.08 1060.17 1862.41 1061.1 1860.74 1062.02 1862.48 1062.95 1864.21 1063.87 1862.54 L1063.87 1880.64 1062.95 1878.94 1062.02 1880.7 1061.1 1882.47 1060.17 1880.77 1059.25 1879.07 1058.32 1880.83 1057.4 1882.6 1056.47 1880.9 1055.55 1879.19 1054.62 1880.96 1053.7 1882.73 1052.77 1881.02 1051.85 1879.32 1050.92 1881.09 1050 1882.85ZM1066 1808.37 1066.92 1810.1 1067.85 1811.83 1068.77 1810.16 1069.7 1808.49 1070.62 1810.22 1071.55 1811.96 1072.47 1810.29 1073.4 1808.62 1074.32 1810.35 1075.25 1812.08 1076.17 1810.41 1077.1 1808.74 L1077.1 1829.93 1076.17 1828.31 1075.25 1826.7 1074.32 1828.37 1073.4 1830.05 1072.47 1828.44 1071.55 1826.82 1070.62 1828.5 1069.7 1830.18 1068.77 1828.56 1067.85 1826.94 1066.92 1828.62 1066 1830.3ZM1066 1860.37 1066.92 1862.1 1067.85 1863.83 1068.77 1862.16 1069.7 1860.49 1070.62 1862.22 1071.55 1863.96 1072.47 1862.29 1073.4 1860.62 1074.32 1862.35 1075.25 1864.08 1076.17 1862.41 1077.1 1860.74 L1077.1 1882.47 1076.17 1880.77 1075.25 1879.07 1074.32 1880.83 1073.4 1882.6 1072.47 1880.9 1071.55 1879.19 1070.62 1880.96 1069.7 1882.73 1068.77 1881.02 1067.85 1879.32 1066.92 1881.09 1066 1882.85ZM1080 1808.37 1080.92 1810.1 1081.85 1811.83 1082.77 1810.16 1083.7 1808.49 1084.62 1810.22 1085.55 1811.96 1086.47 1810.29 1087.4 1808.62 1088.32 1810.35 1089.25 1812.08 1090.17 1810.41 1091.1 1808.74 1092.02 1810.48 1092.95 1812.21 1093.87 1810.54 L1093.87 1828.19 1092.95 1826.57 1092.02 1828.25 1091.1 1829.93 1090.17 1828.31 1089.25 1826.7 1088.32 1828.37 1087.4 1830.05 1086.47 1828.44 1085.55 1826.82 1084.62 1828.5 1083.7 1830.18 1082.77 1828.56 1081.85 1826.94 1080.92 1828.62 1080 1830.3ZM1080 1860.37 1080.92 1862.1 1081.85 1863.83 1082.77 1862.16 1083.7 1860.49 1084.62 1862.22 1085.55 1863.96 1086.47 1862.29 1087.4 1860.62 1088.32 1862.35 1089.25 1864.08 1090.17 1862.41 1091.1 1860.74 1092.02 1862.48 1092.95 1864.21 1093.87 1862.54 L1093.87 1880.64 1092.95 1878.94 1092.02 1880.7 1091.1 1882.47 1090.17 1880.77 1089.25 1879.07 1088.32 1880.83 1087.4 1882.6 1086.47 1880.9 1085.55 1879.19 1084.62 1880.96 1083.7 1882.73 1082.77 1881.02 1081.85 1879.32 1080.92 1881.09 1080 1882.85ZM1096 1808.37 1096.92 1810.1 1097.85 1811.83 1098.77 1810.16 1099.7 1808.49 1100.62 1810.22 1101.55 1811.96 1102.47 1810.29 1103.4 1808.62 1104.32 1810.35 1105.25 1812.08 1106.17 1810.41 1107.1 1808.74 L1107.1 1829.93 1106.17 1828.31 1105.25 1826.7 1104.32 1828.37 1103.4 1830.05 1102.47 1828.44 1101.55 1826.82 1100.62 1828.5 1099.7 1830.18 1098.77 1828.56 1097.85 1826.94 1096.92 1828.62 1096 1830.3ZM1096 1860.37 1096.92 1862.1 1097.85 1863.83 1098.77 1862.16 1099.7 1860.49 1100.62 1862.22 1101.55 1863.96 1102.47 1862.29 1103.4 1860.62 1104.32 1862.35 1105.25 1864.08 1106.17 1862.41 1107.1 1860.74 L1107.1 1882.47 1106.17 1880.77 1105.25 1879.07 1104.32 1880.83 1103.4 1882.6 1102.47 1880.9 1101.55 1879.19 1100.62 1880.96 1099.7 1882.73 1098.77 1881.02 1097.85 1879.32 1096.92 1881.09 1096 1882.85ZM1110 1808.37 1110.92 1810.1 1111.85 1811.83 1112.77 1810.16 1113.7 1808.49 1114.62 1810.22 1115.55 1811.96 1116.47 1810.29 1117.4 1808.62 1118.32 1810.35 1119.25 1812.08 1120.17 1810.41 1121.1 1808.74 L1121.1 1829.93 1120.17 1828.31 1119.25 1826.7 1118.32 1828.37 1117.4 1830.05 1116.47 1828.44 1115.55 1826.82 1114.62 1828.5 1113.7 1830.18 1112.77 1828.56 1111.85 1826.94 1110.92 1828.62 1110 1830.3ZM1110 1860.37 1110.92 1862.1 1111.85 1863.83 1112.77 1862.16 1113.7 1860.49 1114.62 1862.22 1115.55 1863.96 1116.47 1862.29 1117.4 1860.62 1118.32 1862.35 1119.25 1864.08 1120.17 1862.41 1121.1 1860.74 L1121.1 1882.47 1120.17 1880.77 1119.25 1879.07 1118.32 1880.83 1117.4 1882.6 1116.47 1880.9 1115.55 1879.19 1114.62 1880.96 1113.7 1882.73 1112.77 1881.02 1111.85 1879.32 1110.92 1881.09 1110 1882.85ZM1124 1808.37 1124.92 1810.1 1125.85 1811.83 1126.77 1810.16 1127.7 1808.49 1128.62 1810.22 1129.55 1811.96 1130.47 1810.29 1131.4 1808.62 1132.32 1810.35 1133.25 1812.08 1134.17 1810.41 1135.1 1808.74 1136.02 1810.48 1136.95 1812.21 1137.87 1810.54 L1137.87 1828.19 1136.95 1826.57 1136.02 1828.25 1135.1 1829.93 1134.17 1828.31 1133.25 1826.7 1132.32 1828.37 1131.4 1830.05 1130.47 1828.44 1129.55 1826.82 1128.62 1828.5 1127.7 1830.18 1126.77 1828.56 1125.85 1826.94 1124.92 1828.62 1124 1830.3ZM1124 1860.37 1124.92 1862.1 1125.85 1863.83 1126.77 1862.16 1127.7 1860.49 1128.62 1862.22 1129.55 1863.96 1130.47 1862.29 1131.4 1860.62 1132.32 1862.35 1133.25 1864.08 1134.17 1862.41 1135.1 1860.74 1136.02 1862.48 1136.95 1864.21 1137.87 1862.54 L1137.87 1880.64 1136.95 1878.94 1136.02 1880.7 1135.1 1882.47 1134.17 1880.77 1133.25 1879.07 1132.32 1880.83 1131.4 1882.6 1130.47 1880.9 1129.55 1879.19 1128.62 1880.96 1127.7 1882.73 1126.77 1881.02 1125.85 1879.32 1124.92 1881.09 1124 1882.85ZM1140 1808.37 1140.92 1810.1 1141.85 1811.83 1142.77 1810.16 1143.7 1808.49 1144.62 1810.22 1145.55 1811.96 1146.47 1810.29 1147.4 1808.62 1148.32 1810.35 1149.25 1812.08 1150.17 1810.41 1151.1 1808.74 L1151.1 1829.93 1150.17 1828.31 1149.25 1826.7 1148.32 1828.37 1147.4 1830.05 1146.47 1828.44 1145.55 1826.82 1144.62 1828.5 1143.7 1830.18 1142.77 1828.56 1141.85 1826.94 1140.92 1828.62 1140 1830.3ZM1140 1860.37 1140.92 1862.1 1141.85 1863.83 1142.77 1862.16 1143.7 1860.49 1144.62 1862.22 1145.55 1863.96 1146.47 1862.29 1147.4 1860.62 1148.32 1862.35 1149.25 1864.08 1150.17 1862.41 1151.1 1860.74 L1151.1 1882.47 1150.17 1880.77 1149.25 1879.07 1148.32 1880.83 1147.4 1882.6 1146.47 1880.9 1145.55 1879.19 1144.62 1880.96 1143.7 1882.73 1142.77 1881.02 1141.85 1879.32 1140.92 1881.09 1140 1882.85ZM1154 1808.37 1154.92 1810.1 1155.85 1811.83 1156.77 1810.16 1157.7 1808.49 1158.62 1810.22 1159.55 1811.96 1160.47 1810.29 1161.4 1808.62 1162.32 1810.35 1163.25 1812.08 1164.17 1810.41 1165.1 1808.74 L1165.1 1829.93 1164.17 1828.31 1163.25 1826.7 1162.32 1828.37 1161.4 1830.05 1160.47 1828.44 1159.55 1826.82 1158.62 1828.5 1157.7 1830.18 1156.77 1828.56 1155.85 1826.94 1154.92 1828.62 1154 1830.3ZM1154 1860.37 1154.92 1862.1 1155.85 1863.83 1156.77 1862.16 1157.7 1860.49 1158.62 1862.22 1159.55 1863.96 1160.47 1862.29 1161.4 1860.62 1162.32 1862.35 1163.25 1864.08 1164.17 1862.41 1165.1 1860.74 L1165.1 1882.47 1164.17 1880.77 1163.25 1879.07 1162.32 1880.83 1161.4 1882.6 1160.47 1880.9 1159.55 1879.19 1158.62 1880.96 1157.7 1882.73 1156.77 1881.02 1155.85 1879.32 1154.92 1881.09 1154 1882.85ZM1168 1808.37 1168.92 1810.1 1169.85 1811.83 1170.77 1810.16 1171.7 1808.49 1172.62 1810.22 1173.55 1811.96 1174.47 1810.29 1175.4 1808.62 1176.32 1810.35 1177.25 1812.08 1178.17 1810.41 1179.1 1808.74 1180.02 1810.48 1180.95 1812.21 1181.87 1810.54 L1181.87 1828.19 1180.95 1826.57 1180.02 1828.25 1179.1 1829.93 1178.17 1828.31 1177.25 1826.7 1176.32 1828.37 1175.4 1830.05 1174.47 1828.44 1173.55 1826.82 1172.62 1828.5 1171.7 1830.18 1170.77 1828.56 1169.85 1826.94 1168.92 1828.62 1168 1830.3ZM1168 1860.37 1168.92 1862.1 1169.85 1863.83 1170.77 1862.16 1171.7 1860.49 1172.62 1862.22 1173.55 1863.96 1174.47 1862.29 1175.4 1860.62 1176.32 1862.35 1177.25 1864.08 1178.17 1862.41 1179.1 1860.74 1180.02 1862.48 1180.95 1864.21 1181.87 1862.54 L1181.87 1880.64 1180.95 1878.94 1180.02 1880.7 1179.1 1882.47 1178.17 1880.77 1177.25 1879.07 1176.32 1880.83 1175.4 1882.6 1174.47 1880.9 1173.55 1879.19 1172.62 1880.96 1171.7 1882.73 1170.77 1881.02 1169.85 1879.32 1168.92 1881.09 1168 1882.85ZM1184 1808.37 1184.92 1810.1 1185.85 1811.83 1186.77 1810.16 1187.7 1808.49 1188.62 1810.22 1189.55 1811.96 1190.47 1810.29 1191.4 1808.62 1192.32 1810.35 1193.25 1812.08 1194.17 1810.41 1195.1 1808.74 L1195.1 1829.93 1194.17 1828.31 1193.25 1826.7 1192.32 1828.37 1191.4 1830.05 1190.47 1828.44 1189.55 1826.82 1188.62 1828.5 1187.7 1830.18 1186.77 1828.56 1185.85 1826.94 1184.92 1828.62 1184 1830.3ZM1184 1860.37 1184.92 1862.1 1185.85 1863.83 1186.77 1862.16 1187.7 1860.49 1188.62 1862.22 1189.55 1863.96 1190.47 1862.29 1191.4 1860.62 1192.32 1862.35 1193.25 1864.08 1194.17 1862.41 1195.1 1860.74 L1195.1 1882.47 1194.17 1880.77 1193.25 1879.07 1192.32 1880.83 1191.4 1882.6 1190.47 1880.9 1189.55 1879.19 1188.62 1880.96 1187.7 1882.73 1186.77 1881.02 1185.85 1879.32 1184.92 1881.09 1184 1882.85ZM1198 1808.37 1198.92 1810.1 1199.85 1811.83 1200.77 1810.16 1201.7 1808.49 1202.62 1810.22 1203.55 1811.96 1204.47 1810.29 1205.4 1808.62 1206.32 1810.35 1207.25 1812.08 1208.17 1810.41 1209.1 1808.74 L1209.1 1829.93 1208.17 1828.31 1207.25 1826.7 1206.32 1828.37 1205.4 1830.05 1204.47 1828.44 1203.55 1826.82 1202.62 1828.5 1201.7 1830.18 1200.77 1828.56 1199.85 1826.94 1198.92 1828.62 1198 1830.3ZM1198 1860.37 1198.92 1862.1 1199.85 1863.83 1200.77 1862.16 1201.7 1860.49 1202.62 1862.22 1203.55 1863.96 1204.47 1862.29 1205.4 1860.62 1206.32 1862.35 1207.25 1864.08 1208.17 1862.41 1209.1 1860.74 L1209.1 1882.47 1208.17 1880.77 1207.25 1879.07 1206.32 1880.83 1205.4 1882.6 1204.47 1880.9 1203.55 1879.19 1202.62 1880.96 1201.7 1882.73 1200.77 1881.02 1199.85 1879.32 1198.92 1881.09 1198 1882.85ZM1212 1808.37 1212.92 1810.1 1213.85 1811.83 1214.77 1810.16 1215.7 1808.49 1216.62 1810.22 1217.55 1811.96 1218.47 1810.29 1219.4 1808.62 1220.32 1810.35 1221.25 1812.08 1222.17 1810.41 1223.1 1808.74 1224.02 1810.48 1224.95 1812.21 1225.87 1810.54 L1225.87 1828.19 1224.95 1826.57 1224.02 1828.25 1223.1 1829.93 1222.17 1828.31 1221.25 1826.7 1220.32 1828.37 1219.4 1830.05 1218.47 1828.44 1217.55 1826.82 1216.62 1828.5 1215.7 1830.18 1214.77 1828.56 1213.85 1826.94 1212.92 1828.62 1212 1830.3ZM1212 1860.37 1212.92 1862.1 1213.85 1863.83 1214.77 1862.16 1215.7 1860.49 1216.62 1862.22 1217.55 1863.96 1218.47 1862.29 1219.4 1860.62 1220.32 1862.35 1221.25 1864.08 1222.17 1862.41 1223.1 1860.74 1224.02 1862.48 1224.95 1864.21 1225.87 1862.54 L1225.87 1880.64 1224.95 1878.94 1224.02 1880.7 1223.1 1882.47 1222.17 1880.77 1221.25 1879.07 1220.32 1880.83 1219.4 1882.6 1218.47 1880.9 1217.55 1879.19 1216.62 1880.96 1215.7 1882.73 1214.77 1881.02 1213.85 1879.32 1212.92 1881.09 1212 1882.85ZM1228 1808.37 1228.92 1810.1 1229.85 1811.83 1230.77 1810.16 1231.7 1808.49 1232.62 1810.22 1233.55 1811.96 1234.47 1810.29 1235.4 1808.62 1236.32 1810.35 1237.25 1812.08 1238.17 1810.41 1239.1 1808.74 L1239.1 1829.93 1238.17 1828.31 1237.25 1826.7 1236.32 1828.37 1235.4 1830.05 1234.47 1828.44 1233.55 1826.82 1232.62 1828.5 1231.7 1830.18 1230.77 1828.56 1229.85 1826.94 1228.92 1828.62 1228 1830.3ZM1228 1860.37 1228.92 1862.1 1229.85 1863.83 1230.77 1862.16 1231.7 1860.49 1232.62 1862.22 1233.55 1863.96 1234.47 1862.29 1235.4 1860.62 1236.32 1862.35 1237.25 1864.08 1238.17 1862.41 1239.1 1860.74 L1239.1 1882.47 1238.17 1880.77 1237.25 1879.07 1236.32 1880.83 1235.4 1882.6 1234.47 1880.9 1233.55 1879.19 1232.62 1880.96 1231.7 1882.73 1230.77 1881.02 1229.85 1879.32 1228.92 1881.09 1228 1882.85ZM1242 1808.37 1242.92 1810.1 1243.85 1811.83 1244.77 1810.16 1245.7 1808.49 1246.62 1810.22 1247.55 1811.96 1248.47 1810.29 1249.4 1808.62 1250.32 1810.35 1251.25 1812.08 1252.17 1810.41 1253.1 1808.74 1254.02 1810.48 1254.95 1812.21 1255.87 1810.54 L1255.87 1828.19 1254.95 1826.57 1254.02 1828.25 1253.1 1829.93 1252.17 1828.31 1251.25 1826.7 1250.32 1828.37 1249.4 1830.05 1248.47 1828.44 1247.55 1826.82 1246.62 1828.5 1245.7 1830.18 1244.77 1828.56 1243.85 1826.94 1242.92 1828.62 1242 1830.3ZM1242 1860.37 1242.92 1862.1 1243.85 1863.83 1244.77 1862.16 1245.7 1860.49 1246.62 1862.22 1247.55 1863.96 1248.47 1862.29 1249.4 1860.62 1250.32 1862.35 1251.25 1864.08 1252.17 1862.41 1253.1 1860.74 1254.02 1862.48 1254.95 1864.21 1255.87 1862.54 L1255.87 1880.64 1254.95 1878.94 1254.02 1880.7 1253.1 1882.47 1252.17 1880.77 1251.25 1879.07 1250.32 1880.83 1249.4 1882.6 1248.47 1880.9 1247.55 1879.19 1246.62 1880.96 1245.7 1882.73 1244.77 1881.02 1243.85 1879.32 1242.92 1881.09 1242 1882.85ZM1258 1808.37 1258.92 1810.1 1259.85 1811.83 1260.77 1810.16 1261.7 1808.49 1262.62 1810.22 1263.55 1811.96 1264.47 1810.29 1265.4 1808.62 1266.32 1810.35 1267.25 1812.08 1268.17 1810.41 1269.1 1808.74 L1269.1 1829.93 1268.17 1828.31 1267.25 1826.7 1266.32 1828.37 1265.4 1830.05 1264.47 1828.44 1263.55 1826.82 1262.62 1828.5 1261.7 1830.18 1260.77 1828.56 1259.85 1826.94 1258.92 1828.62 1258 1830.3ZM1258 1860.37 1258.92 1862.1 1259.85 1863.83 1260.77 1862.16 1261.7 1860.49 1262.62 1862.22 1263.55 1863.96 1264.47 1862.29 1265.4 1860.62 1266.32 1862.35 1267.25 1864.08 1268.17 1862.41 1269.1 1860.74 L1269.1 1882.47 1268.17 1880.77 1267.25 1879.07 1266.32 1880.83 1265.4 1882.6 1264.47 1880.9 1263.55 1879.19 1262.62 1880.96 1261.7 1882.73 1260.77 1881.02 1259.85 1879.32 1258.92 1881.09 1258 1882.85ZM1272 1808.37 1272.92 1810.1 1273.85 1811.83 1274.77 1810.16 1275.7 1808.49 1276.62 1810.22 1277.55 1811.96 1278.47 1810.29 1279.4 1808.62 1280.32 1810.35 1281.25 1812.08 1282.17 1810.41 1283.1 1808.74 L1283.1 1829.93 1282.17 1828.31 1281.25 1826.7 1280.32 1828.37 1279.4 1830.05 1278.47 1828.44 1277.55 1826.82 1276.62 1828.5 1275.7 1830.18 1274.77 1828.56 1273.85 1826.94 1272.92 1828.62 1272 1830.3ZM1272 1860.37 1272.92 1862.1 1273.85 1863.83 1274.77 1862.16 1275.7 1860.49 1276.62 1862.22 1277.55 1863.96 1278.47 1862.29 1279.4 1860.62 1280.32 1862.35 1281.25 1864.08 1282.17 1862.41 1283.1 1860.74 L1283.1 1882.47 1282.17 1880.77 1281.25 1879.07 1280.32 1880.83 1279.4 1882.6 1278.47 1880.9 1277.55 1879.19 1276.62 1880.96 1275.7 1882.73 1274.77 1881.02 1273.85 1879.32 1272.92 1881.09 1272 1882.85ZM1286 1808.37 1286.92 1810.1 1287.85 1811.83 1288.77 1810.16 1289.7 1808.49 1290.62 1810.22 1291.55 1811.96 1292.47 1810.29 1293.4 1808.62 1294.32 1810.35 1295.25 1812.08 1296.17 1810.41 1297.1 1808.74 1298.02 1810.48 1298.95 1812.21 1299.87 1810.54 L1299.87 1828.19 1298.95 1826.57 1298.02 1828.25 1297.1 1829.93 1296.17 1828.31 1295.25 1826.7 1294.32 1828.37 1293.4 1830.05 1292.47 1828.44 1291.55 1826.82 1290.62 1828.5 1289.7 1830.18 1288.77 1828.56 1287.85 1826.94 1286.92 1828.62 1286 1830.3ZM1286 1860.37 1286.92 1862.1 1287.85 1863.83 1288.77 1862.16 1289.7 1860.49 1290.62 1862.22 1291.55 1863.96 1292.47 1862.29 1293.4 1860.62 1294.32 1862.35 1295.25 1864.08 1296.17 1862.41 1297.1 1860.74 1298.02 1862.48 1298.95 1864.21 1299.87 1862.54 L1299.87 1880.64 1298.95 1878.94 1298.02 1880.7 1297.1 1882.47 1296.17 1880.77 1295.25 1879.07 1294.32 1880.83 1293.4 1882.6 1292.47 1880.9 1291.55 1879.19 1290.62 1880.96 1289.7 1882.73 1288.77 1881.02 1287.85 1879.32 1286.92 1881.09 1286 1882.85ZM1302 1808.37 1302.92 1810.1 1303.85 1811.83 1304.77 1810.16 1305.7 1808.49 1306.62 1810.22 1307.55 1811.96 1308.47 1810.29 1309.4 1808.62 1310.32 1810.35 1311.25 1812.08 1312.17 1810.41 1313.1 1808.74 L1313.1 1829.93 1312.17 1828.31 1311.25 1826.7 1310.32 1828.37 1309.4 1830.05 1308.47 1828.44 1307.55 1826.82 1306.62 1828.5 1305.7 1830.18 1304.77 1828.56 1303.85 1826.94 1302.92 1828.62 1302 1830.3ZM1302 1860.37 1302.92 1862.1 1303.85 1863.83 1304.77 1862.16 1305.7 1860.49 1306.62 1862.22 1307.55 1863.96 1308.47 1862.29 1309.4 1860.62 1310.32 1862.35 1311.25 1864.08 1312.17 1862.41 1313.1 1860.74 L1313.1 1882.47 1312.17 1880.77 1311.25 1879.07 1310.32 1880.83 1309.4 1882.6 1308.47 1880.9 1307.55 1879.19 1306.62 1880.96 1305.7 1882.73 1304.77 1881.02 1303.85 1879.32 1302.92 1881.09 1302 1882.85ZM1316 1808.37 1316.92 1810.1 1317.85 1811.83 1318.77 1810.16 1319.7 1808.49 1320.62 1810.22 1321.55 1811.96 1322.47 1810.29 1323.4 1808.62 1324.32 1810.35 1325.25 1812.08 1326.17 1810.41 1327.1 1808.74 L1327.1 1829.93 1326.17 1828.31 1325.25 1826.7 1324.32 1828.37 1323.4 1830.05 1322.47 1828.44 1321.55 1826.82 1320.62 1828.5 1319.7 1830.18 1318.77 1828.56 1317.85 1826.94 1316.92 1828.62 1316 1830.3ZM1316 1860.37 1316.92 1862.1 1317.85 1863.83 1318.77 1862.16 1319.7 1860.49 1320.62 1862.22 1321.55 1863.96 1322.47 1862.29 1323.4 1860.62 1324.32 1862.35 1325.25 1864.08 1326.17 1862.41 1327.1 1860.74 L1327.1 1882.47 1326.17 1880.77 1325.25 1879.07 1324.32 1880.83 1323.4 1882.6 1322.47 1880.9 1321.55 1879.19 1320.62 1880.96 1319.7 1882.73 1318.77 1881.02 1317.85 1879.32 1316.92 1881.09 1316 1882.85ZM1330 1808.37 1330.92 1810.1 1331.85 1811.83 1332.77 1810.16 1333.7 1808.49 1334.62 1810.22 1335.55 1811.96 1336.47 1810.29 1337.4 1808.62 1338.32 1810.35 1339.25 1812.08 1340.17 1810.41 1341.1 1808.74 1342.02 1810.48 1342.95 1812.21 1343.87 1810.54 L1343.87 1828.19 1342.95 1826.57 1342.02 1828.25 1341.1 1829.93 1340.17 1828.31 1339.25 1826.7 1338.32 1828.37 1337.4 1830.05 1336.47 1828.44 1335.55 1826.82 1334.62 1828.5 1333.7 1830.18 1332.77 1828.56 1331.85 1826.94 1330.92 1828.62 1330 1830.3ZM1330 1860.37 1330.92 1862.1 1331.85 1863.83 1332.77 1862.16 1333.7 1860.49 1334.62 1862.22 1335.55 1863.96 1336.47 1862.29 1337.4 1860.62 1338.32 1862.35 1339.25 1864.08 1340.17 1862.41 1341.1 1860.74 1342.02 1862.48 1342.95 1864.21 1343.87 1862.54 L1343.87 1880.64 1342.95 1878.94 1342.02 1880.7 1341.1 1882.47 1340.17 1880.77 1339.25 1879.07 1338.32 1880.83 1337.4 1882.6 1336.47 1880.9 1335.55 1879.19 1334.62 1880.96 1333.7 1882.73 1332.77 1881.02 1331.85 1879.32 1330.92 1881.09 1330 1882.85ZM1346 1808.37 1346.92 1810.1 1347.85 1811.83 1348.77 1810.16 1349.7 1808.49 1350.62 1810.22 1351.55 1811.96 1352.47 1810.29 1353.4 1808.62 1354.32 1810.35 1355.25 1812.08 1356.17 1810.41 1357.1 1808.74 L1357.1 1829.93 1356.17 1828.31 1355.25 1826.7 1354.32 1828.37 1353.4 1830.05 1352.47 1828.44 1351.55 1826.82 1350.62 1828.5 1349.7 1830.18 1348.77 1828.56 1347.85 1826.94 1346.92 1828.62 1346 1830.3ZM1346 1860.37 1346.92 1862.1 1347.85 1863.83 1348.77 1862.16 1349.7 1860.49 1350.62 1862.22 1351.55 1863.96 1352.47 1862.29 1353.4 1860.62 1354.32 1862.35 1355.25 1864.08 1356.17 1862.41 1357.1 1860.74 L1357.1 1882.47 1356.17 1880.77 1355.25 1879.07 1354.32 1880.83 1353.4 1882.6 1352.47 1880.9 1351.55 1879.19 1350.62 1880.96 1349.7 1882.73 1348.77 1881.02 1347.85 1879.32 1346.92 1881.09 1346 1882.85ZM1360 1808.37 1360.92 1810.1 1361.85 1811.83 1362.77 1810.16 1363.7 1808.49 1364.62 1810.22 1365.55 1811.96 1366.47 1810.29 1367.4 1808.62 1368.32 1810.35 1369.25 1812.08 1370.17 1810.41 1371.1 1808.74 L1371.1 1829.93 1370.17 1828.31 1369.25 1826.7 1368.32 1828.37 1367.4 1830.05 1366.47 1828.44 1365.55 1826.82 1364.62 1828.5 1363.7 1830.18 1362.77 1828.56 1361.85 1826.94 1360.92 1828.62 1360 1830.3ZM1360 1860.37 1360.92 1862.1 1361.85 1863.83 1362.77 1862.16 1363.7 1860.49 1364.62 1862.22 1365.55 1863.96 1366.47 1862.29 1367.4 1860.62 1368.32 1862.35 1369.25 1864.08 1370.17 1862.41 1371.1 1860.74 L1371.1 1882.47 1370.17 1880.77 1369.25 1879.07 1368.32 1880.83 1367.4 1882.6 1366.47 1880.9 1365.55 1879.19 1364.62 1880.96 1363.7 1882.73 1362.77 1881.02 1361.85 1879.32 1360.92 1881.09 1360 1882.85ZM1374 1808.37 1374.92 1810.1 1375.85 1811.83 1376.77 1810.16 1377.7 1808.49 1378.62 1810.22 1379.55 1811.96 1380.47 1810.29 1381.4 1808.62 1382.32 1810.35 1383.25 1812.08 1384.17 1810.41 1385.1 1808.74 1386.02 1810.48 1386.95 1812.21 1387.87 1810.54 L1387.87 1828.19 1386.95 1826.57 1386.02 1828.25 1385.1 1829.93 1384.17 1828.31 1383.25 1826.7 1382.32 1828.37 1381.4 1830.05 1380.47 1828.44 1379.55 1826.82 1378.62 1828.5 1377.7 1830.18 1376.77 1828.56 1375.85 1826.94 1374.92 1828.62 1374 1830.3ZM1374 1860.37 1374.92 1862.1 1375.85 1863.83 1376.77 1862.16 1377.7 1860.49 1378.62 1862.22 1379.55 1863.96 1380.47 1862.29 1381.4 1860.62 1382.32 1862.35 1383.25 1864.08 1384.17 1862.41 1385.1 1860.74 1386.02 1862.48 1386.95 1864.21 1387.87 1862.54 L1387.87 1880.64 1386.95 1878.94 1386.02 1880.7 1385.1 1882.47 1384.17 1880.77 1383.25 1879.07 1382.32 1880.83 1381.4 1882.6 1380.47 1880.9 1379.55 1879.19 1378.62 1880.96 1377.7 1882.73 1376.77 1881.02 1375.85 1879.32 1374.92 1881.09 1374 1882.85ZM1390 1808.37 1390.92 1810.1 1391.85 1811.83 1392.77 1810.16 1393.7 1808.49 1394.62 1810.22 1395.55 1811.96 1396.47 1810.29 1397.4 1808.62 1398.32 1810.35 1399.25 1812.08 1400.17 1810.41 1401.1 1808.74 L1401.1 1829.93 1400.17 1828.31 1399.25 1826.7 1398.32 1828.37 1397.4 1830.05 1396.47 1828.44 1395.55 1826.82 1394.62 1828.5 1393.7 1830.18 1392.77 1828.56 1391.85 1826.94 1390.92 1828.62 1390 1830.3ZM1390 1860.37 1390.92 1862.1 1391.85 1863.83 1392.77 1862.16 1393.7 1860.49 1394.62 1862.22 1395.55 1863.96 1396.47 1862.29 1397.4 1860.62 1398.32 1862.35 1399.25 1864.08 1400.17 1862.41 1401.1 1860.74 L1401.1 1882.47 1400.17 1880.77 1399.25 1879.07 1398.32 1880.83 1397.4 1882.6 1396.47 1880.9 1395.55 1879.19 1394.62 1880.96 1393.7 1882.73 1392.77 1881.02 1391.85 1879.32 1390.92 1881.09 1390 1882.85ZM1404 1808.37 1404.92 1810.1 1405.85 1811.83 1406.77 1810.16 1407.7 1808.49 1408.62 1810.22 1409.55 1811.96 1410.47 1810.29 1411.4 1808.62 1412.32 1810.35 1413.25 1812.08 1414.17 1810.41 1415.1 1808.74 1416.02 1810.48 1416.95 1812.21 1417.87 1810.54 L1417.87 1828.19 1416.95 1826.57 1416.02 1828.25 1415.1 1829.93 1414.17 1828.31 1413.25 1826.7 1412.32 1828.37 1411.4 1830.05 1410.47 1828.44 1409.55 1826.82 1408.62 1828.5 1407.7 1830.18 1406.77 1828.56 1405.85 1826.94 1404.92 1828.62 1404 1830.3ZM1404 1860.37 1404.92 1862.1 1405.85 1863.83 1406.77 1862.16 1407.7 1860.49 1408.62 1862.22 1409.55 1863.96 1410.47 1862.29 1411.4 1860.62 1412.32 1862.35 1413.25 1864.08 1414.17 1862.41 1415.1 1860.74 1416.02 1862.48 1416.95 1864.21 1417.87 1862.54 L1417.87 1880.64 1416.95 1878.94 1416.02 1880.7 1415.1 1882.47 1414.17 1880.77 1413.25 1879.07 1412.32 1880.83 1411.4 1882.6 1410.47 1880.9 1409.55 1879.19 1408.62 1880.96 1407.7 1882.73 1406.77 1881.02 1405.85 1879.32 1404.92 1881.09 1404 1882.85ZM1420 1808.37 1420.92 1810.1 1421.85 1811.83 1422.77 1810.16 1423.7 1808.49 1424.62 1810.22 1425.55 1811.96 1426.47 1810.29 1427.4 1808.62 1428.32 1810.35 1429.25 1812.08 1430.17 1810.41 1431.1 1808.74 L1431.1 1829.93 1430.17 1828.31 1429.25 1826.7 1428.32 1828.37 1427.4 1830.05 1426.47 1828.44 1425.55 1826.82 1424.62 1828.5 1423.7 1830.18 1422.77 1828.56 1421.85 1826.94 1420.92 1828.62 1420 1830.3ZM1420 1860.37 1420.92 1862.1 1421.85 1863.83 1422.77 1862.16 1423.7 1860.49 1424.62 1862.22 1425.55 1863.96 1426.47 1862.29 1427.4 1860.62 1428.32 1862.35 1429.25 1864.08 1430.17 1862.41 1431.1 1860.74 L1431.1 1882.47 1430.17 1880.77 1429.25 1879.07 1428.32 1880.83 1427.4 1882.6 1426.47 1880.9 1425.55 1879.19 1424.62 1880.96 1423.7 1882.73 1422.77 1881.02 1421.85 1879.32 1420.92 1881.09 1420 1882.85ZM1670 1801.62 1672 1803.56 1674 1808.23 1676 1806.22 1678 1808.79 1680 1806.36 1682 1807.12 1684 1807.56 1686 1809.4 1688 1808.2 1690 1809.56 1692 1809.63 1694 1808.29 1696 1808.99 1698 1805.67 1700 1805.39 1702 1808.2 1704 1805.47 1706 1806.95 1708 1806.58 1710 1806.17 1712 1805.74 1714 1806.16 1716 1806.89 1718 1806.43 1720 1809.45 1722 1807.13 1724 1807.3 1726 1808.53 1728 1807.31 1730 1808.33 1732 1803.97 1734 1808.82 1736 1806.58 1738 1808.69 1740 1809.01 1742 1806.37 1744 1808.44 1746 1808.82 1748 1804.19 1750 1805.99 1752 1807.4 1754 1809.23 1756 1809.41 1758 1805.11 1760 1806.84 1762 1805.26 1764 1805.96 1766 1806.13 1768 1807.64 1770 1807.84 1772 1807.57 1774 1800.5 1776 1806.76 1778 1801.23 1780 1804.01 1782 1806.35 1784 1806.68 1786 1802.22 1788 1803.75 1790 1806.26 1792 1803.79 1794 1804.96 1796 1805.71 1798 1807.2 1800 1802.65 1802 1806.32 1804 1807.59 1806 1807.09 1808 1810.21 1810 1810.65 1812 1809.77 1814 1808.83 1816 1809.28 1818 1809.17 1820 1807.95 1822 1805.31 1824 1808.43 1826 1809.81 1828 1809.44 1830 1807.76 1832 1808.86 1834 1808.92 1836 1809.57 1838 1806.08 1840 1806.42 1842 1806.18 1844 1805.25 1846 1806.08 1848 1806.48 1850 1806.93 1852 1804.92 1854 1806.07 1856 1804.32 1858 1806.4 1860 1806.04 1862 1803.63 1864 1805.96 1866 1807.06 1868 1804.51 1870 1805.54 1872 1800.56 1874 1803.38 1876 1803.3 1878 1804.79 1880 1806.46 1882 1806.39 1884 1805.44 1886 1802.64 1888 1805.15 1890 1807.95 1892 1806.14 1894 1807.59 1896 1804.77 1898 1807 1900 1807.34 1902 1806.24 1904 1800.5 1906 1801.39 1908 1804.49 1910 1801.04 1912 1806.01 1914 1806.95 1916 1805.92 1918 1805.8 1920 1806.2 1922 1806.96 1924 1806.87 1926 1807.81 1928 1809.14 1930 1807.15 1932 1806.71 1934 1806.63 1936 1805.19 1938 1802.95 1940 1807.22 1942 1804.55 1944 1807.53 1946 1806.75 1948 1806.19 1950 1806.43 1952 1805.74 1954 1807.32 1956 1804.03 1958 1807.67 1960 1806.11 1962 1806.59 1964 1806.12 1966 1804.36 1968 1805.1 1970 1802.57 1972 1808.01 1974 1807.33 1976 1806.62 1978 1807.21 1980 1808.71 1982 1807.28 1984 1806.86 1986 1807.65 1988 1805.8 1990 1805.93 1992 1806.71 1994 1806.28 1996 1807.09 1998 1807.9 2000 1807.24 2002 1806.71 2004 1808.01 2006 1809.03 2008 1811.16 2010 1810.76 2012 1810.88 2014 1805.16 2016 1807.43 2018 1807.39 2020 1806.84 2022 1806.89 2024 1805.39 2026 1808.44 2028 1808.31 2030 1801.24 2032 1807.92 2034 1800.84 2036 1805.14 2038 1806.1 2040 1804.08 2042 1800.72 2044 1803.64 2046 1806.03 2048 1806.03 2050 1803.17 2052 1800.5 2054 1804.9 2056 1800.5 2058 1804.37 2060 1803.66 2062 1805.24 2064 1802.77 2066 1805.6 2068 1805.61 2070 1806.72 2072 1807.36 2074 1807.86 2076 1805.59 2078 1808.22 2080 1808.24 2082 1803.64 2084 1800.5 2086 1806.88 2088 1804.42 2090 1804.73 2092 1807.48 2094 1806.12 2096 1805.93 2098 1807.44 2100 1804.51 2102 1806.63 2104 1804.98 2106 1807.22 2108 1808.33 2110 1806.06 2112 1806.95 2114 1806.42 2116 1807.45 2118 1806.67 2120 1808.01 2122 1805.98 2124 1806.93 2126 1807.56 2128 1806.76 2130 1807.37 2132 1805.29 2134 1807.95 2136 1807.32 2138 1806.27 L2138 1832.33 2136 1831.31 2134 1830.7 2132 1833.29 2130 1831.27 2128 1831.85 2126 1831.08 2124 1831.69 2122 1832.62 2120 1830.64 2118 1831.94 2116 1831.19 2114 1832.18 2112 1831.68 2110 1832.54 2108 1830.34 2106 1831.41 2104 1833.58 2102 1831.99 2100 1834.04 2098 1831.2 2096 1832.66 2094 1832.48 2092 1831.16 2090 1833.82 2088 1834.13 2086 1831.74 2084 1837.93 2082 1834.88 2080 1830.43 2078 1830.44 2076 1833 2074 1830.79 2072 1831.28 2070 1831.9 2068 1832.97 2066 1832.98 2064 1835.72 2062 1833.33 2060 1834.87 2058 1834.17 2056 1837.93 2054 1833.66 2052 1837.93 2050 1835.34 2048 1832.56 2046 1832.57 2044 1834.88 2042 1837.72 2040 1834.46 2038 1832.5 2036 1833.43 2034 1837.6 2032 1830.73 2030 1837.21 2028 1830.36 2026 1830.23 2024 1833.19 2022 1831.74 2020 1831.78 2018 1831.24 2016 1831.2 2014 1833.41 2012 1827.87 2010 1827.97 2008 1827.59 2006 1829.65 2004 1830.64 2002 1831.91 2000 1831.39 1998 1830.76 1996 1831.53 1994 1832.32 1992 1831.91 1990 1832.66 1988 1832.79 1986 1830.99 1984 1831.77 1982 1831.35 1980 1829.97 1978 1831.42 1976 1831.99 1974 1831.3 1972 1830.65 1970 1835.93 1968 1833.47 1966 1834.18 1964 1832.48 1962 1832.02 1960 1832.49 1958 1830.97 1956 1834.51 1954 1831.31 1952 1832.85 1950 1832.18 1948 1832.41 1946 1831.86 1944 1831.11 1942 1834 1940 1831.41 1938 1835.55 1936 1833.38 1934 1831.98 1932 1831.91 1930 1831.48 1928 1829.55 1926 1830.84 1924 1831.75 1922 1831.67 1920 1832.41 1918 1832.79 1916 1832.67 1914 1831.67 1912 1832.58 1910 1837.4 1908 1834.06 1906 1837.07 1904 1837.93 1902 1832.36 1900 1831.3 1898 1831.63 1896 1833.79 1894 1831.05 1892 1832.46 1890 1830.7 1888 1833.42 1886 1835.85 1884 1833.14 1882 1832.21 1880 1832.15 1878 1833.77 1876 1835.21 1874 1835.14 1872 1837.87 1870 1833.05 1868 1834.04 1866 1831.57 1864 1832.63 1862 1834.9 1860 1832.56 1858 1832.2 1856 1834.22 1854 1832.52 1852 1833.65 1850 1831.69 1848 1832.12 1846 1832.51 1844 1833.33 1842 1832.42 1840 1832.19 1838 1832.52 1836 1829.13 1834 1829.76 1832 1829.82 1830 1830.88 1828 1829.26 1826 1828.9 1824 1830.23 1822 1833.26 1820 1830.7 1818 1829.52 1816 1829.42 1814 1829.85 1812 1828.94 1810 1828.09 1808 1828.51 1806 1831.54 1804 1831.05 1802 1832.28 1800 1835.84 1798 1831.43 1796 1832.88 1794 1833.61 1792 1834.74 1790 1832.35 1788 1834.78 1786 1836.26 1784 1831.93 1782 1832.25 1780 1834.53 1778 1837.22 1776 1831.86 1774 1837.93 1772 1831.07 1770 1830.81 1768 1831.01 1766 1832.47 1764 1832.64 1762 1833.31 1760 1831.78 1758 1833.46 1756 1829.28 1754 1829.46 1752 1831.23 1750 1832.6 1748 1834.35 1746 1829.86 1744 1830.22 1742 1832.24 1740 1829.68 1738 1829.99 1736 1832.04 1734 1829.86 1732 1834.57 1730 1830.34 1728 1831.33 1726 1830.14 1724 1831.33 1722 1831.5 1720 1829.25 1718 1832.18 1716 1831.73 1714 1832.44 1712 1832.84 1710 1832.43 1708 1832.03 1706 1831.68 1704 1833.11 1702 1830.46 1700 1833.18 1698 1832.91 1696 1829.69 1694 1830.38 1692 1829.08 1690 1829.14 1688 1830.46 1686 1829.3 1684 1831.08 1682 1831.51 1680 1832.24 1678 1829.89 1676 1832.39 1674 1830.44 1672 1834.97 1670 1836.84ZM1670 1853.62 1672 1855.56 1674 1860.23 1676 1858.22 1678 1860.79 1680 1858.36 1682 1859.12 1684 1859.56 1686 1861.4 1688 1860.2 1690 1861.56 1692 1861.63 1694 1860.29 1696 1860.99 1698 1857.67 1700 1857.39 1702 1860.2 1704 1857.47 1706 1858.95 1708 1858.58 1710 1858.17 1712 1857.74 1714 1858.16 1716 1858.89 1718 1858.43 1720 1861.45 1722 1859.13 1724 1859.3 1726 1860.53 1728 1859.31 1730 1860.33 1732 1855.97 1734 1860.82 1736 1858.58 1738 1860.69 1740 1861.01 1742 1858.37 1744 1860.44 1746 1860.82 1748 1856.19 1750 1857.99 1752 1859.4 1754 1861.23 1756 1861.41 1758 1857.11 1760 1858.84 1762 1857.26 1764 1857.96 1766 1858.13 1768 1859.64 1770 1859.84 1772 1859.57 1774 1852.5 1776 1858.76 1778 1853.23 1780 1856.01 1782 1858.35 1784 1858.68 1786 1854.22 1788 1855.75 1790 1858.26 1792 1855.79 1794 1856.96 1796 1857.71 1798 1859.2 1800 1854.65 1802 1858.32 1804 1859.59 1806 1859.09 1808 1862.21 1810 1862.65 1812 1861.77 1814 1860.83 1816 1861.28 1818 1861.17 1820 1859.95 1822 1857.31 1824 1860.43 1826 1861.81 1828 1861.44 1830 1859.76 1832 1860.86 1834 1860.92 1836 1861.57 1838 1858.08 1840 1858.42 1842 1858.18 1844 1857.25 1846 1858.08 1848 1858.48 1850 1858.93 1852 1856.92 1854 1858.07 1856 1856.32 1858 1858.4 1860 1858.04 1862 1855.63 1864 1857.96 1866 1859.06 1868 1856.51 1870 1857.54 1872 1852.56 1874 1855.38 1876 1855.3 1878 1856.79 1880 1858.46 1882 1858.39 1884 1857.44 1886 1854.64 1888 1857.15 1890 1859.95 1892 1858.14 1894 1859.59 1896 1856.77 1898 1859 1900 1859.34 1902 1858.24 1904 1852.5 1906 1853.39 1908 1856.49 1910 1853.04 1912 1858.01 1914 1858.95 1916 1857.92 1918 1857.8 1920 1858.2 1922 1858.96 1924 1858.87 1926 1859.81 1928 1861.14 1930 1859.15 1932 1858.71 1934 1858.63 1936 1857.19 1938 1854.95 1940 1859.22 1942 1856.55 1944 1859.53 1946 1858.75 1948 1858.19 1950 1858.43 1952 1857.74 1954 1859.32 1956 1856.03 1958 1859.67 1960 1858.11 1962 1858.59 1964 1858.12 1966 1856.36 1968 1857.1 1970 1854.57 1972 1860.01 1974 1859.33 1976 1858.62 1978 1859.21 1980 1860.71 1982 1859.28 1984 1858.86 1986 1859.65 1988 1857.8 1990 1857.93 1992 1858.71 1994 1858.28 1996 1859.09 1998 1859.9 2000 1859.24 2002 1858.71 2004 1860.01 2006 1861.03 2008 1863.16 2010 1862.76 2012 1862.88 2014 1857.16 2016 1859.43 2018 1859.39 2020 1858.84 2022 1858.89 2024 1857.39 2026 1860.44 2028 1860.31 2030 1853.24 2032 1859.92 2034 1852.84 2036 1857.14 2038 1858.1 2040 1856.08 2042 1852.72 2044 1855.64 2046 1858.03 2048 1858.03 2050 1855.17 2052 1852.5 2054 1856.9 2056 1852.5 2058 1856.37 2060 1855.66 2062 1857.24 2064 1854.77 2066 1857.6 2068 1857.61 2070 1858.72 2072 1859.36 2074 1859.86 2076 1857.59 2078 1860.22 2080 1860.24 2082 1855.64 2084 1852.5 2086 1858.88 2088 1856.42 2090 1856.73 2092 1859.48 2094 1858.12 2096 1857.93 2098 1859.44 2100 1856.51 2102 1858.63 2104 1856.98 2106 1859.22 2108 1860.33 2110 1858.06 2112 1858.95 2114 1858.42 2116 1859.45 2118 1858.67 2120 1860.01 2122 1857.98 2124 1858.93 2126 1859.56 2128 1858.76 2130 1859.37 2132 1857.29 2134 1859.95 2136 1859.32 2138 1858.27 L2138 1885 2136 1883.92 2134 1883.28 2132 1886 2130 1883.88 2128 1884.49 2126 1883.68 2124 1884.32 2122 1885.29 2120 1883.22 2118 1884.59 2116 1883.79 2114 1884.84 2112 1884.3 2110 1885.21 2108 1882.9 2106 1884.03 2104 1886.31 2102 1884.63 2100 1886.79 2098 1883.8 2096 1885.34 2094 1885.15 2092 1883.76 2090 1886.56 2088 1886.88 2086 1884.38 2084 1890.88 2082 1887.67 2080 1882.99 2078 1883.01 2076 1885.69 2074 1883.38 2072 1883.89 2070 1884.54 2068 1885.66 2066 1885.67 2064 1888.56 2062 1886.04 2060 1887.66 2058 1886.93 2056 1890.88 2054 1886.39 2052 1890.88 2050 1888.16 2048 1885.24 2046 1885.24 2044 1887.68 2042 1890.65 2040 1887.23 2038 1885.17 2036 1886.15 2034 1890.53 2032 1883.31 2030 1890.12 2028 1882.92 2026 1882.78 2024 1885.89 2022 1884.37 2020 1884.41 2018 1883.85 2016 1883.81 2014 1886.13 2012 1880.3 2010 1880.41 2008 1880.01 2006 1882.18 2004 1883.22 2002 1884.55 2000 1884 1998 1883.34 1996 1884.15 1994 1884.98 1992 1884.55 1990 1885.34 1988 1885.48 1986 1883.59 1984 1884.4 1982 1883.96 1980 1882.5 1978 1884.04 1976 1884.64 1974 1883.91 1972 1883.22 1970 1888.77 1968 1886.19 1966 1886.94 1964 1885.15 1962 1884.66 1960 1885.16 1958 1883.56 1956 1887.28 1954 1883.92 1952 1885.54 1950 1884.83 1948 1885.08 1946 1884.5 1944 1883.71 1942 1886.75 1940 1884.03 1938 1888.38 1936 1886.09 1934 1884.62 1932 1884.55 1930 1884.09 1928 1882.07 1926 1883.43 1924 1884.38 1922 1884.3 1920 1885.07 1918 1885.47 1916 1885.35 1914 1884.3 1912 1885.25 1910 1890.33 1908 1886.81 1906 1889.97 1904 1890.88 1902 1885.03 1900 1883.91 1898 1884.25 1896 1886.53 1894 1883.65 1892 1885.12 1890 1883.28 1888 1886.14 1886 1888.69 1884 1885.84 1882 1884.87 1880 1884.8 1878 1886.5 1876 1888.02 1874 1887.94 1872 1890.82 1870 1885.74 1868 1886.79 1866 1884.19 1864 1885.31 1862 1887.69 1860 1885.23 1858 1884.86 1856 1886.98 1854 1885.19 1852 1886.38 1850 1884.32 1848 1884.78 1846 1885.19 1844 1886.04 1842 1885.08 1840 1884.84 1838 1885.19 1836 1881.63 1834 1882.29 1832 1882.35 1830 1883.47 1828 1881.76 1826 1881.38 1824 1882.79 1822 1885.97 1820 1883.28 1818 1882.04 1816 1881.93 1814 1882.38 1812 1881.43 1810 1880.53 1808 1880.98 1806 1884.16 1804 1883.65 1802 1884.94 1800 1888.69 1798 1884.04 1796 1885.57 1794 1886.34 1792 1887.52 1790 1885.01 1788 1887.56 1786 1889.12 1784 1884.57 1782 1884.91 1780 1887.3 1778 1890.14 1776 1884.5 1774 1890.88 1772 1883.67 1770 1883.39 1768 1883.6 1766 1885.13 1764 1885.31 1762 1886.02 1760 1884.41 1758 1886.18 1756 1881.79 1754 1881.98 1752 1883.84 1750 1885.28 1748 1887.11 1746 1882.39 1744 1882.78 1742 1884.89 1740 1882.2 1738 1882.53 1736 1884.68 1734 1882.4 1732 1887.34 1730 1882.9 1728 1883.94 1726 1882.69 1724 1883.94 1722 1884.12 1720 1881.75 1718 1884.83 1716 1884.36 1714 1885.11 1712 1885.53 1710 1885.09 1708 1884.68 1706 1884.31 1704 1885.81 1702 1883.02 1700 1885.89 1698 1885.6 1696 1882.22 1694 1882.94 1692 1881.57 1690 1881.64 1688 1883.03 1686 1881.8 1684 1883.68 1682 1884.13 1680 1884.9 1678 1882.42 1676 1885.05 1674 1883 1672 1887.76 1670 1889.73ZM2140 1801.97 2142 1806.03 2144 1806.93 2146 1804.95 2148 1806.3 2150 1806.32 2152 1804.89 2154 1802.48 2156 1806.47 2158 1803.86 2160 1807.09 2162 1804.84 2164 1805.07 2166 1803.5 2168 1803.45 2170 1805.92 2172 1803.81 2174 1805 2176 1802.47 2178 1806.45 2180 1808.03 2182 1806.53 2184 1809.46 2186 1806.09 2188 1805.96 2190 1806.29 2192 1803.83 2194 1808.62 2196 1808.55 2198 1805.8 2200 1805.46 2202 1809.12 2204 1803.98 2206 1808.43 2208 1810.3 2210 1809.31 2212 1809.37 2214 1809.54 2216 1809.64 2218 1808.07 2220 1805.78 2222 1808.11 2224 1806.14 2226 1808.33 2228 1804.54 2230 1803 2232 1807.87 2234 1807.92 2236 1808.2 2238 1805.96 2240 1807.65 2242 1805.4 2244 1808.44 2246 1806.89 2248 1808.35 2250 1807.37 2252 1805.66 2254 1805.46 2256 1805.46 2258 1806.71 2260 1805 2262 1806.52 2264 1804.9 2266 1805.78 2268 1806.56 2270 1806.42 2272 1805.92 2274 1806.29 2276 1806.04 2278 1805.93 2280 1807.18 2282 1808.41 2284 1806.98 2286 1806.47 2288 1805 2290 1806.18 2292 1804.19 2294 1809.25 2296 1804.94 2298 1809.52 2300 1809.18 2302 1809.66 2304 1810.23 2306 1810.19 2308 1810.29 2310 1807.6 2312 1809.98 2314 1809.29 2316 1806.48 2318 1807.28 2320 1807.27 2322 1806.73 2324 1804.79 2326 1805.38 2328 1807 2330 1803.35 2332 1804.51 2334 1805.35 2336 1805.42 2338 1805.19 2340 1804.11 2342 1805.46 2344 1807.05 2346 1804.76 2348 1806.38 2350 1805.23 2352 1805.42 2354 1806.43 2356 1806.17 2358 1807.67 2360 1807.69 2362 1806.49 2364 1805.93 2366 1807.8 2368 1806.53 2370 1806.08 2372 1804.66 2374 1801.33 2376 1800.5 2378 1804.05 2380 1806.47 2382 1806.54 2384 1805.46 2386 1807.34 2388 1805.56 2390 1805.29 2392 1808.03 2394 1807.84 2396 1809.56 2398 1809.7 2400 1809.37 2402 1808.46 2404 1807.62 2406 1808.12 2408 1807.01 2410 1807.5 2412 1807.46 2414 1807.55 2416 1805.68 2418 1807.27 2420 1806.75 2422 1805.55 2424 1805.47 2426 1803.66 2428 1804.35 2430 1807.5 2432 1801.92 2434 1800.5 2436 1800.5 2438 1805.62 2440 1806.13 2442 1803.59 2444 1803.68 2446 1804.92 2448 1805.58 2450 1805.68 2452 1805.55 2454 1806.35 2456 1806.88 2458 1807.8 2460 1806.85 2462 1806.82 2464 1805.75 2466 1806.52 2468 1806.07 2470 1806.33 2472 1806.54 2474 1807.86 2476 1805.2 2478 1805.29 2480 1805.07 2482 1807.77 2484 1807.01 2486 1806.32 2488 1808.38 2490 1807.87 2492 1807.12 2494 1806.65 2496 1801.8 2498 1808.9 2500 1808.3 2502 1806.39 2504 1805.63 2506 1807.87 2508 1808.42 2510 1806.5 2512 1807.18 2514 1806.6 2516 1806.66 2518 1806.17 2520 1807.59 2522 1803.32 2524 1804.31 2526 1805 2528 1807.38 2530 1805.54 2532 1806.15 2534 1805.24 2536 1806.58 2538 1806.71 2540 1807.6 2542 1804.35 2544 1804.21 2546 1804.28 2548 1803.92 2550 1804.21 2552 1804.58 2554 1803.58 2556 1806.54 2558 1805.26 2560 1806.26 2562 1808.62 2564 1806.94 2566 1804.22 2568 1808.69 2570 1807.54 2572 1805.23 2574 1807.34 2576 1807.47 2578 1808.1 2580 1806.26 2582 1807.65 2584 1806.52 2586 1808.99 2588 1806.95 2590 1806.17 2592 1807.4 2594 1801.37 2596 1806.36 2598 1807.44 2600 1805.56 2602 1806.44 2604 1808 2606 1805.82 2608 1807.65 2610 1800.57 L2610 1837.87 2608 1830.99 2606 1832.77 2604 1830.66 2602 1832.17 2600 1833.02 2598 1831.2 2596 1832.25 2594 1837.09 2592 1831.24 2590 1832.43 2588 1831.67 2586 1829.7 2584 1832.09 2582 1831 2580 1832.35 2578 1830.56 2576 1831.17 2574 1831.3 2572 1833.34 2570 1831.1 2568 1829.98 2566 1834.32 2564 1831.68 2562 1830.06 2560 1832.34 2558 1833.31 2556 1832.07 2554 1834.94 2552 1833.97 2550 1834.33 2548 1834.61 2546 1834.26 2544 1834.33 2542 1834.19 2540 1831.04 2538 1831.91 2536 1832.03 2534 1833.33 2532 1832.45 2530 1833.04 2528 1831.25 2526 1833.57 2524 1834.23 2522 1835.19 2520 1831.05 2518 1832.43 2516 1831.95 2514 1832.01 2512 1831.45 2510 1832.11 2508 1830.25 2506 1830.78 2504 1832.95 2502 1832.21 2500 1830.36 2498 1829.78 2496 1836.67 2494 1831.96 2492 1831.51 2490 1830.78 2488 1830.29 2486 1832.29 2484 1831.62 2482 1830.88 2480 1833.5 2478 1833.28 2476 1833.38 2474 1830.79 2472 1832.07 2470 1832.27 2468 1832.52 2466 1832.09 2464 1832.84 2462 1831.8 2460 1831.77 2458 1830.85 2456 1831.74 2454 1832.25 2452 1833.03 2450 1832.91 2448 1833 2446 1833.64 2444 1834.84 2442 1834.93 2440 1832.47 2438 1832.96 2436 1837.93 2434 1837.93 2432 1836.55 2430 1831.14 2428 1834.19 2426 1834.87 2424 1833.11 2422 1833.03 2420 1831.87 2418 1831.36 2416 1832.9 2414 1831.09 2412 1831.18 2410 1831.14 2408 1831.61 2406 1830.54 2404 1831.02 2402 1830.21 2400 1829.33 2398 1829.01 2396 1829.14 2394 1830.81 2392 1830.62 2390 1833.28 2388 1833.02 2386 1831.29 2384 1833.12 2382 1832.07 2380 1832.14 2378 1834.48 2376 1837.93 2374 1837.12 2372 1833.89 2370 1832.52 2368 1832.08 2366 1830.85 2364 1832.66 2362 1832.12 2360 1830.96 2358 1830.97 2356 1832.43 2354 1832.17 2352 1833.16 2350 1833.34 2348 1832.23 2346 1833.79 2344 1831.58 2342 1833.12 2340 1834.43 2338 1833.38 2336 1833.16 2334 1833.22 2332 1834.04 2330 1835.16 2328 1831.62 2326 1833.2 2324 1833.77 2322 1831.89 2320 1831.37 2318 1831.35 2316 1832.13 2314 1829.41 2312 1828.74 2310 1831.05 2308 1828.44 2306 1828.53 2304 1828.49 2302 1829.04 2300 1829.51 2298 1829.18 2296 1833.62 2294 1829.45 2292 1834.35 2290 1832.42 2288 1833.56 2286 1832.14 2284 1831.64 2282 1830.25 2280 1831.45 2278 1832.67 2276 1832.56 2274 1832.31 2272 1832.68 2270 1832.19 2268 1832.05 2266 1832.81 2264 1833.66 2262 1832.09 2260 1833.56 2258 1831.91 2256 1833.12 2254 1833.12 2252 1832.92 2250 1831.27 2248 1830.32 2246 1831.74 2244 1830.23 2242 1833.18 2240 1830.99 2238 1832.64 2236 1830.46 2234 1830.74 2232 1830.78 2230 1835.5 2228 1834.01 2226 1830.34 2224 1832.45 2222 1830.55 2220 1832.81 2218 1830.59 2216 1829.07 2214 1829.16 2212 1829.33 2210 1829.38 2208 1828.42 2206 1830.24 2204 1834.56 2202 1829.57 2200 1833.12 2198 1832.79 2196 1830.12 2194 1830.06 2192 1834.7 2190 1832.31 2188 1832.63 2186 1832.51 2184 1829.24 2182 1832.08 2180 1830.63 2178 1832.16 2176 1836.02 2174 1833.57 2172 1834.72 2170 1832.67 2168 1835.07 2166 1835.02 2164 1833.49 2162 1833.72 2160 1831.54 2158 1834.67 2156 1832.14 2154 1836.01 2152 1833.67 2150 1832.29 2148 1832.3 2146 1833.61 2144 1831.69 2142 1832.56 2140 1836.5ZM2140 1853.97 2142 1858.03 2144 1858.93 2146 1856.95 2148 1858.3 2150 1858.32 2152 1856.89 2154 1854.48 2156 1858.47 2158 1855.86 2160 1859.09 2162 1856.84 2164 1857.07 2166 1855.5 2168 1855.45 2170 1857.92 2172 1855.81 2174 1857 2176 1854.47 2178 1858.45 2180 1860.03 2182 1858.53 2184 1861.46 2186 1858.09 2188 1857.96 2190 1858.29 2192 1855.83 2194 1860.62 2196 1860.55 2198 1857.8 2200 1857.46 2202 1861.12 2204 1855.98 2206 1860.43 2208 1862.3 2210 1861.31 2212 1861.37 2214 1861.54 2216 1861.64 2218 1860.07 2220 1857.78 2222 1860.11 2224 1858.14 2226 1860.33 2228 1856.54 2230 1855 2232 1859.87 2234 1859.92 2236 1860.2 2238 1857.96 2240 1859.65 2242 1857.4 2244 1860.44 2246 1858.89 2248 1860.35 2250 1859.37 2252 1857.66 2254 1857.46 2256 1857.46 2258 1858.71 2260 1857 2262 1858.52 2264 1856.9 2266 1857.78 2268 1858.56 2270 1858.42 2272 1857.92 2274 1858.29 2276 1858.04 2278 1857.93 2280 1859.18 2282 1860.41 2284 1858.98 2286 1858.47 2288 1857 2290 1858.18 2292 1856.19 2294 1861.25 2296 1856.94 2298 1861.52 2300 1861.18 2302 1861.66 2304 1862.23 2306 1862.19 2308 1862.29 2310 1859.6 2312 1861.98 2314 1861.29 2316 1858.48 2318 1859.28 2320 1859.27 2322 1858.73 2324 1856.79 2326 1857.38 2328 1859 2330 1855.35 2332 1856.51 2334 1857.35 2336 1857.42 2338 1857.19 2340 1856.11 2342 1857.46 2344 1859.05 2346 1856.76 2348 1858.38 2350 1857.23 2352 1857.42 2354 1858.43 2356 1858.17 2358 1859.67 2360 1859.69 2362 1858.49 2364 1857.93 2366 1859.8 2368 1858.53 2370 1858.08 2372 1856.66 2374 1853.33 2376 1852.5 2378 1856.05 2380 1858.47 2382 1858.54 2384 1857.46 2386 1859.34 2388 1857.56 2390 1857.29 2392 1860.03 2394 1859.84 2396 1861.56 2398 1861.7 2400 1861.37 2402 1860.46 2404 1859.62 2406 1860.12 2408 1859.01 2410 1859.5 2412 1859.46 2414 1859.55 2416 1857.68 2418 1859.27 2420 1858.75 2422 1857.55 2424 1857.47 2426 1855.66 2428 1856.35 2430 1859.5 2432 1853.92 2434 1852.5 2436 1852.5 2438 1857.62 2440 1858.13 2442 1855.59 2444 1855.68 2446 1856.92 2448 1857.58 2450 1857.68 2452 1857.55 2454 1858.35 2456 1858.88 2458 1859.8 2460 1858.85 2462 1858.82 2464 1857.75 2466 1858.52 2468 1858.07 2470 1858.33 2472 1858.54 2474 1859.86 2476 1857.2 2478 1857.29 2480 1857.07 2482 1859.77 2484 1859.01 2486 1858.32 2488 1860.38 2490 1859.87 2492 1859.12 2494 1858.65 2496 1853.8 2498 1860.9 2500 1860.3 2502 1858.39 2504 1857.63 2506 1859.87 2508 1860.42 2510 1858.5 2512 1859.18 2514 1858.6 2516 1858.66 2518 1858.17 2520 1859.59 2522 1855.32 2524 1856.31 2526 1857 2528 1859.38 2530 1857.54 2532 1858.15 2534 1857.24 2536 1858.58 2538 1858.71 2540 1859.6 2542 1856.35 2544 1856.21 2546 1856.28 2548 1855.92 2550 1856.21 2552 1856.58 2554 1855.58 2556 1858.54 2558 1857.26 2560 1858.26 2562 1860.62 2564 1858.94 2566 1856.22 2568 1860.69 2570 1859.54 2572 1857.23 2574 1859.34 2576 1859.47 2578 1860.1 2580 1858.26 2582 1859.65 2584 1858.52 2586 1860.99 2588 1858.95 2590 1858.17 2592 1859.4 2594 1853.37 2596 1858.36 2598 1859.44 2600 1857.56 2602 1858.44 2604 1860 2606 1857.82 2608 1859.65 2610 1852.57 L2610 1890.81 2608 1883.58 2606 1885.46 2604 1883.23 2602 1884.83 2600 1885.72 2598 1883.8 2596 1884.91 2594 1889.99 2592 1883.84 2590 1885.09 2588 1884.3 2586 1882.22 2584 1884.73 2582 1883.59 2580 1885.01 2578 1883.13 2576 1883.77 2574 1883.91 2572 1886.06 2570 1883.7 2568 1882.52 2566 1887.09 2564 1884.31 2562 1882.6 2560 1885.01 2558 1886.02 2556 1884.72 2554 1887.74 2552 1886.72 2550 1887.09 2548 1887.39 2546 1887.02 2544 1887.09 2542 1886.95 2540 1883.64 2538 1884.55 2536 1884.67 2534 1886.05 2532 1885.12 2530 1885.74 2528 1883.86 2526 1886.29 2524 1886.99 2522 1888 2520 1883.65 2518 1885.1 2516 1884.59 2514 1884.65 2512 1884.06 2510 1884.76 2508 1882.8 2506 1883.36 2504 1885.64 2502 1884.87 2500 1882.92 2498 1882.31 2496 1889.55 2494 1884.6 2492 1884.13 2490 1883.36 2488 1882.85 2486 1884.95 2484 1884.24 2482 1883.46 2480 1886.22 2478 1885.99 2476 1886.09 2474 1883.37 2472 1884.72 2470 1884.93 2468 1885.2 2466 1884.74 2464 1885.52 2462 1884.44 2460 1884.4 2458 1883.44 2456 1884.37 2454 1884.91 2452 1885.73 2450 1885.6 2448 1885.7 2446 1886.37 2444 1887.63 2442 1887.73 2440 1885.14 2438 1885.66 2436 1890.88 2434 1890.88 2432 1889.43 2430 1883.74 2428 1886.95 2426 1887.66 2424 1885.81 2422 1885.73 2420 1884.51 2418 1883.97 2416 1885.59 2414 1883.69 2412 1883.78 2410 1883.74 2408 1884.24 2406 1883.11 2404 1883.61 2402 1882.76 2400 1881.84 2398 1881.5 2396 1881.64 2394 1883.39 2392 1883.2 2390 1885.99 2388 1885.72 2386 1883.9 2384 1885.82 2382 1884.72 2380 1884.79 2378 1887.26 2376 1890.88 2374 1890.03 2372 1886.63 2370 1885.19 2368 1884.73 2366 1883.43 2364 1885.34 2362 1884.77 2360 1883.55 2358 1883.57 2356 1885.09 2354 1884.83 2352 1885.86 2350 1886.05 2348 1884.88 2346 1886.53 2344 1884.2 2342 1885.82 2340 1887.2 2338 1886.1 2336 1885.87 2334 1885.93 2332 1886.79 2330 1887.97 2328 1884.25 2326 1885.9 2324 1886.51 2322 1884.53 2320 1883.98 2318 1883.96 2316 1884.78 2314 1881.92 2312 1881.21 2310 1883.64 2308 1880.9 2306 1881 2304 1880.95 2302 1881.53 2300 1882.03 2298 1881.68 2296 1886.35 2294 1881.96 2292 1887.12 2290 1885.09 2288 1886.29 2286 1884.79 2284 1884.27 2282 1882.81 2280 1884.06 2278 1885.34 2276 1885.23 2274 1884.97 2272 1885.35 2270 1884.85 2268 1884.7 2266 1885.49 2264 1886.39 2262 1884.74 2260 1886.29 2258 1884.55 2256 1885.83 2254 1885.82 2252 1885.61 2250 1883.87 2248 1882.87 2246 1884.37 2244 1882.78 2242 1885.89 2240 1883.58 2238 1885.31 2236 1883.02 2234 1883.32 2232 1883.36 2230 1888.33 2228 1886.76 2226 1882.9 2224 1885.12 2222 1883.11 2220 1885.49 2218 1883.16 2216 1881.56 2214 1881.66 2212 1881.83 2210 1881.89 2208 1880.88 2206 1882.8 2204 1887.33 2202 1882.09 2200 1885.82 2198 1885.48 2196 1882.66 2194 1882.6 2192 1887.48 2190 1884.97 2188 1885.31 2186 1885.18 2184 1881.74 2182 1884.73 2180 1883.2 2178 1884.81 2176 1888.88 2174 1886.29 2172 1887.51 2170 1885.35 2168 1887.87 2166 1887.82 2164 1886.22 2162 1886.46 2160 1884.16 2158 1887.45 2156 1884.79 2154 1888.86 2152 1886.4 2150 1884.95 2148 1884.96 2146 1886.34 2144 1884.32 2142 1885.24 2140 1889.38ZM2612 1808.33 2612.93 1810.05 2613.85 1811.77 2614.78 1810.08 2615.7 1808.4 2616.63 1810.11 2617.55 1811.83 2618.48 1810.14 2619.4 1808.46 2620.33 1810.18 2621.25 1811.89 2622.18 1810.21 2623.1 1808.52 2624.03 1810.24 2624.95 1811.95 2625.88 1810.27 2626.8 1808.59 2627.73 1810.3 2628.65 1812.02 2629.58 1810.33 2630.5 1808.65 2631.43 1810.36 2632.35 1812.08 2633.28 1810.4 2634.2 1808.71 2635.13 1810.43 2636.05 1812.14 2636.98 1810.46 2637.9 1808.77 2638.83 1810.49 2639.75 1812.2 L2639.75 1826.58 2638.83 1828.24 2637.9 1829.9 2636.98 1828.27 2636.05 1826.64 2635.13 1828.3 2634.2 1829.97 2633.28 1828.33 2632.35 1826.7 2631.43 1828.36 2630.5 1830.03 2629.58 1828.39 2628.65 1826.76 2627.73 1828.42 2626.8 1830.09 2625.88 1828.45 2624.95 1826.82 2624.03 1828.48 2623.1 1830.15 2622.18 1828.51 2621.25 1826.88 2620.33 1828.54 2619.4 1830.21 2618.48 1828.58 2617.55 1826.94 2616.63 1828.61 2615.7 1830.27 2614.78 1828.64 2613.85 1827 2612.93 1828.67 2612 1830.33ZM2612 1860.33 2612.93 1862.05 2613.85 1863.77 2614.78 1862.08 2615.7 1860.4 2616.63 1862.11 2617.55 1863.83 2618.48 1862.14 2619.4 1860.46 2620.33 1862.18 2621.25 1863.89 2622.18 1862.21 2623.1 1860.52 2624.03 1862.24 2624.95 1863.95 2625.88 1862.27 2626.8 1860.59 2627.73 1862.3 2628.65 1864.02 2629.58 1862.33 2630.5 1860.65 2631.43 1862.36 2632.35 1864.08 2633.28 1862.4 2634.2 1860.71 2635.13 1862.43 2636.05 1864.14 2636.98 1862.46 2637.9 1860.77 2638.83 1862.49 2639.75 1864.2 L2639.75 1878.94 2638.83 1880.69 2637.9 1882.44 2636.98 1880.72 2636.05 1879 2635.13 1880.75 2634.2 1882.51 2633.28 1880.79 2632.35 1879.07 2631.43 1880.82 2630.5 1882.57 2629.58 1880.85 2628.65 1879.13 2627.73 1880.88 2626.8 1882.63 2625.88 1880.92 2624.95 1879.2 2624.03 1880.95 2623.1 1882.7 2622.18 1880.98 2621.25 1879.26 2620.33 1881.01 2619.4 1882.76 2618.48 1881.04 2617.55 1879.33 2616.63 1881.08 2615.7 1882.83 2614.78 1881.11 2613.85 1879.39 2612.93 1881.14 2612 1882.89ZM2642 1808.33 2642.93 1810.05 2643.85 1811.77 2644.78 1810.08 2645.7 1808.4 2646.63 1810.11 2647.55 1811.83 2648.48 1810.14 2649.4 1808.46 2650.33 1810.18 2651.25 1811.89 2652.18 1810.21 2653.1 1808.52 2654.03 1810.24 2654.95 1811.95 2655.88 1810.27 2656.8 1808.59 2657.73 1810.3 2658.65 1812.02 2659.58 1810.33 2660.5 1808.65 2661.43 1810.36 2662.35 1812.08 2663.28 1810.4 2664.2 1808.71 2665.13 1810.43 2666.05 1812.14 2666.98 1810.46 2667.9 1808.77 L2667.9 1829.9 2666.98 1828.27 2666.05 1826.64 2665.13 1828.3 2664.2 1829.97 2663.28 1828.33 2662.35 1826.7 2661.43 1828.36 2660.5 1830.03 2659.58 1828.39 2658.65 1826.76 2657.73 1828.42 2656.8 1830.09 2655.88 1828.45 2654.95 1826.82 2654.03 1828.48 2653.1 1830.15 2652.18 1828.51 2651.25 1826.88 2650.33 1828.54 2649.4 1830.21 2648.48 1828.58 2647.55 1826.94 2646.63 1828.61 2645.7 1830.27 2644.78 1828.64 2643.85 1827 2642.93 1828.67 2642 1830.33ZM2642 1860.33 2642.93 1862.05 2643.85 1863.77 2644.78 1862.08 2645.7 1860.4 2646.63 1862.11 2647.55 1863.83 2648.48 1862.14 2649.4 1860.46 2650.33 1862.18 2651.25 1863.89 2652.18 1862.21 2653.1 1860.52 2654.03 1862.24 2654.95 1863.95 2655.88 1862.27 2656.8 1860.59 2657.73 1862.3 2658.65 1864.02 2659.58 1862.33 2660.5 1860.65 2661.43 1862.36 2662.35 1864.08 2663.28 1862.4 2664.2 1860.71 2665.13 1862.43 2666.05 1864.14 2666.98 1862.46 2667.9 1860.77 L2667.9 1882.44 2666.98 1880.72 2666.05 1879 2665.13 1880.75 2664.2 1882.51 2663.28 1880.79 2662.35 1879.07 2661.43 1880.82 2660.5 1882.57 2659.58 1880.85 2658.65 1879.13 2657.73 1880.88 2656.8 1882.63 2655.88 1880.92 2654.95 1879.2 2654.03 1880.95 2653.1 1882.7 2652.18 1880.98 2651.25 1879.26 2650.33 1881.01 2649.4 1882.76 2648.48 1881.04 2647.55 1879.33 2646.63 1881.08 2645.7 1882.83 2644.78 1881.11 2643.85 1879.39 2642.93 1881.14 2642 1882.89ZM2670 1808.33 2670.93 1810.05 2671.85 1811.77 2672.78 1810.08 2673.7 1808.4 2674.63 1810.11 2675.55 1811.83 2676.48 1810.14 2677.4 1808.46 2678.33 1810.18 2679.25 1811.89 2680.18 1810.21 2681.1 1808.52 2682.03 1810.24 2682.95 1811.95 2683.88 1810.27 2684.8 1808.59 2685.73 1810.3 2686.65 1812.02 2687.58 1810.33 2688.5 1808.65 2689.43 1810.36 2690.35 1812.08 2691.28 1810.4 2692.2 1808.71 2693.13 1810.43 2694.05 1812.14 2694.98 1810.46 2695.9 1808.77 2696.83 1810.49 2697.75 1812.2 L2697.75 1826.58 2696.83 1828.24 2695.9 1829.9 2694.98 1828.27 2694.05 1826.64 2693.13 1828.3 2692.2 1829.97 2691.28 1828.33 2690.35 1826.7 2689.43 1828.36 2688.5 1830.03 2687.58 1828.39 2686.65 1826.76 2685.73 1828.42 2684.8 1830.09 2683.88 1828.45 2682.95 1826.82 2682.03 1828.48 2681.1 1830.15 2680.18 1828.51 2679.25 1826.88 2678.33 1828.54 2677.4 1830.21 2676.48 1828.58 2675.55 1826.94 2674.63 1828.61 2673.7 1830.27 2672.78 1828.64 2671.85 1827 2670.93 1828.67 2670 1830.33ZM2670 1860.33 2670.93 1862.05 2671.85 1863.77 2672.78 1862.08 2673.7 1860.4 2674.63 1862.11 2675.55 1863.83 2676.48 1862.14 2677.4 1860.46 2678.33 1862.18 2679.25 1863.89 2680.18 1862.21 2681.1 1860.52 2682.03 1862.24 2682.95 1863.95 2683.88 1862.27 2684.8 1860.59 2685.73 1862.3 2686.65 1864.02 2687.58 1862.33 2688.5 1860.65 2689.43 1862.36 2690.35 1864.08 2691.28 1862.4 2692.2 1860.71 2693.13 1862.43 2694.05 1864.14 2694.98 1862.46 2695.9 1860.77 2696.83 1862.49 2697.75 1864.2 L2697.75 1878.94 2696.83 1880.69 2695.9 1882.44 2694.98 1880.72 2694.05 1879 2693.13 1880.75 2692.2 1882.51 2691.28 1880.79 2690.35 1879.07 2689.43 1880.82 2688.5 1882.57 2687.58 1880.85 2686.65 1879.13 2685.73 1880.88 2684.8 1882.63 2683.88 1880.92 2682.95 1879.2 2682.03 1880.95 2681.1 1882.7 2680.18 1880.98 2679.25 1879.26 2678.33 1881.01 2677.4 1882.76 2676.48 1881.04 2675.55 1879.33 2674.63 1881.08 2673.7 1882.83 2672.78 1881.11 2671.85 1879.39 2670.93 1881.14 2670 1882.89ZM2700 1808.33 2700.93 1810.05 2701.85 1811.77 2702.78 1810.08 2703.7 1808.4 2704.63 1810.11 2705.55 1811.83 2706.48 1810.14 2707.4 1808.46 2708.33 1810.18 2709.25 1811.89 2710.18 1810.21 2711.1 1808.52 2712.03 1810.24 2712.95 1811.95 2713.88 1810.27 2714.8 1808.59 2715.73 1810.3 2716.65 1812.02 2717.58 1810.33 2718.5 1808.65 2719.43 1810.36 2720.35 1812.08 2721.28 1810.4 2722.2 1808.71 2723.13 1810.43 2724.05 1812.14 2724.98 1810.46 2725.9 1808.77 2726.83 1810.49 2727.75 1812.2 L2727.75 1826.58 2726.83 1828.24 2725.9 1829.9 2724.98 1828.27 2724.05 1826.64 2723.13 1828.3 2722.2 1829.97 2721.28 1828.33 2720.35 1826.7 2719.43 1828.36 2718.5 1830.03 2717.58 1828.39 2716.65 1826.76 2715.73 1828.42 2714.8 1830.09 2713.88 1828.45 2712.95 1826.82 2712.03 1828.48 2711.1 1830.15 2710.18 1828.51 2709.25 1826.88 2708.33 1828.54 2707.4 1830.21 2706.48 1828.58 2705.55 1826.94 2704.63 1828.61 2703.7 1830.27 2702.78 1828.64 2701.85 1827 2700.93 1828.67 2700 1830.33ZM2700 1860.33 2700.93 1862.05 2701.85 1863.77 2702.78 1862.08 2703.7 1860.4 2704.63 1862.11 2705.55 1863.83 2706.48 1862.14 2707.4 1860.46 2708.33 1862.18 2709.25 1863.89 2710.18 1862.21 2711.1 1860.52 2712.03 1862.24 2712.95 1863.95 2713.88 1862.27 2714.8 1860.59 2715.73 1862.3 2716.65 1864.02 2717.58 1862.33 2718.5 1860.65 2719.43 1862.36 2720.35 1864.08 2721.28 1862.4 2722.2 1860.71 2723.13 1862.43 2724.05 1864.14 2724.98 1862.46 2725.9 1860.77 2726.83 1862.49 2727.75 1864.2 L2727.75 1878.94 2726.83 1880.69 2725.9 1882.44 2724.98 1880.72 2724.05 1879 2723.13 1880.75 2722.2 1882.51 2721.28 1880.79 2720.35 1879.07 2719.43 1880.82 2718.5 1882.57 2717.58 1880.85 2716.65 1879.13 2715.73 1880.88 2714.8 1882.63 2713.88 1880.92 2712.95 1879.2 2712.03 1880.95 2711.1 1882.7 2710.18 1880.98 2709.25 1879.26 2708.33 1881.01 2707.4 1882.76 2706.48 1881.04 2705.55 1879.33 2704.63 1881.08 2703.7 1882.83 2702.78 1881.11 2701.85 1879.39 2700.93 1881.14 2700 1882.89ZM2730 1808.33 2730.93 1810.05 2731.85 1811.77 2732.78 1810.08 2733.7 1808.4 2734.63 1810.11 2735.55 1811.83 2736.48 1810.14 2737.4 1808.46 2738.33 1810.18 2739.25 1811.89 2740.18 1810.21 2741.1 1808.52 2742.03 1810.24 2742.95 1811.95 2743.88 1810.27 2744.8 1808.59 2745.73 1810.3 2746.65 1812.02 2747.58 1810.33 2748.5 1808.65 2749.43 1810.36 2750.35 1812.08 2751.28 1810.4 2752.2 1808.71 2753.13 1810.43 2754.05 1812.14 2754.98 1810.46 2755.9 1808.77 2756.83 1810.49 2757.75 1812.2 L2757.75 1826.58 2756.83 1828.24 2755.9 1829.9 2754.98 1828.27 2754.05 1826.64 2753.13 1828.3 2752.2 1829.97 2751.28 1828.33 2750.35 1826.7 2749.43 1828.36 2748.5 1830.03 2747.58 1828.39 2746.65 1826.76 2745.73 1828.42 2744.8 1830.09 2743.88 1828.45 2742.95 1826.82 2742.03 1828.48 2741.1 1830.15 2740.18 1828.51 2739.25 1826.88 2738.33 1828.54 2737.4 1830.21 2736.48 1828.58 2735.55 1826.94 2734.63 1828.61 2733.7 1830.27 2732.78 1828.64 2731.85 1827 2730.93 1828.67 2730 1830.33ZM2730 1860.33 2730.93 1862.05 2731.85 1863.77 2732.78 1862.08 2733.7 1860.4 2734.63 1862.11 2735.55 1863.83 2736.48 1862.14 2737.4 1860.46 2738.33 1862.18 2739.25 1863.89 2740.18 1862.21 2741.1 1860.52 2742.03 1862.24 2742.95 1863.95 2743.88 1862.27 2744.8 1860.59 2745.73 1862.3 2746.65 1864.02 2747.58 1862.33 2748.5 1860.65 2749.43 1862.36 2750.35 1864.08 2751.28 1862.4 2752.2 1860.71 2753.13 1862.43 2754.05 1864.14 2754.98 1862.46 2755.9 1860.77 2756.83 1862.49 2757.75 1864.2 L2757.75 1878.94 2756.83 1880.69 2755.9 1882.44 2754.98 1880.72 2754.05 1879 2753.13 1880.75 2752.2 1882.51 2751.28 1880.79 2750.35 1879.07 2749.43 1880.82 2748.5 1882.57 2747.58 1880.85 2746.65 1879.13 2745.73 1880.88 2744.8 1882.63 2743.88 1880.92 2742.95 1879.2 2742.03 1880.95 2741.1 1882.7 2740.18 1880.98 2739.25 1879.26 2738.33 1881.01 2737.4 1882.76 2736.48 1881.04 2735.55 1879.33 2734.63 1881.08 2733.7 1882.83 2732.78 1881.11 2731.85 1879.39 2730.93 1881.14 2730 1882.89ZM2760 1808.33 2760.93 1810.05 2761.85 1811.77 2762.78 1810.08 2763.7 1808.4 2764.63 1810.11 2765.55 1811.83 2766.48 1810.14 2767.4 1808.46 2768.33 1810.18 2769.25 1811.89 2770.18 1810.21 2771.1 1808.52 2772.03 1810.24 2772.95 1811.95 2773.88 1810.27 2774.8 1808.59 2775.73 1810.3 2776.65 1812.02 2777.58 1810.33 2778.5 1808.65 2779.43 1810.36 2780.35 1812.08 2781.28 1810.4 2782.2 1808.71 2783.13 1810.43 2784.05 1812.14 2784.98 1810.46 2785.9 1808.77 L2785.9 1829.9 2784.98 1828.27 2784.05 1826.64 2783.13 1828.3 2782.2 1829.97 2781.28 1828.33 2780.35 1826.7 2779.43 1828.36 2778.5 1830.03 2777.58 1828.39 2776.65 1826.76 2775.73 1828.42 2774.8 1830.09 2773.88 1828.45 2772.95 1826.82 2772.03 1828.48 2771.1 1830.15 2770.18 1828.51 2769.25 1826.88 2768.33 1828.54 2767.4 1830.21 2766.48 1828.58 2765.55 1826.94 2764.63 1828.61 2763.7 1830.27 2762.78 1828.64 2761.85 1827 2760.93 1828.67 2760 1830.33ZM2760 1860.33 2760.93 1862.05 2761.85 1863.77 2762.78 1862.08 2763.7 1860.4 2764.63 1862.11 2765.55 1863.83 2766.48 1862.14 2767.4 1860.46 2768.33 1862.18 2769.25 1863.89 2770.18 1862.21 2771.1 1860.52 2772.03 1862.24 2772.95 1863.95 2773.88 1862.27 2774.8 1860.59 2775.73 1862.3 2776.65 1864.02 2777.58 1862.33 2778.5 1860.65 2779.43 1862.36 2780.35 1864.08 2781.28 1862.4 2782.2 1860.71 2783.13 1862.43 2784.05 1864.14 2784.98 1862.46 2785.9 1860.77 L2785.9 1882.44 2784.98 1880.72 2784.05 1879 2783.13 1880.75 2782.2 1882.51 2781.28 1880.79 2780.35 1879.07 2779.43 1880.82 2778.5 1882.57 2777.58 1880.85 2776.65 1879.13 2775.73 1880.88 2774.8 1882.63 2773.88 1880.92 2772.95 1879.2 2772.03 1880.95 2771.1 1882.7 2770.18 1880.98 2769.25 1879.26 2768.33 1881.01 2767.4 1882.76 2766.48 1881.04 2765.55 1879.33 2764.63 1881.08 2763.7 1882.83 2762.78 1881.11 2761.85 1879.39 2760.93 1881.14 2760 1882.89ZM2788 1808.33 2788.93 1810.05 2789.85 1811.77 2790.78 1810.08 2791.7 1808.4 2792.63 1810.11 2793.55 1811.83 2794.48 1810.14 2795.4 1808.46 2796.33 1810.18 2797.25 1811.89 2798.18 1810.21 2799.1 1808.52 2800.03 1810.24 2800.95 1811.95 2801.88 1810.27 2802.8 1808.59 2803.73 1810.3 2804.65 1812.02 2805.58 1810.33 2806.5 1808.65 2807.43 1810.36 2808.35 1812.08 2809.28 1810.4 2810.2 1808.71 2811.13 1810.43 2812.05 1812.14 2812.98 1810.46 2813.9 1808.77 2814.83 1810.49 2815.75 1812.2 L2815.75 1826.58 2814.83 1828.24 2813.9 1829.9 2812.98 1828.27 2812.05 1826.64 2811.13 1828.3 2810.2 1829.97 2809.28 1828.33 2808.35 1826.7 2807.43 1828.36 2806.5 1830.03 2805.58 1828.39 2804.65 1826.76 2803.73 1828.42 2802.8 1830.09 2801.88 1828.45 2800.95 1826.82 2800.03 1828.48 2799.1 1830.15 2798.18 1828.51 2797.25 1826.88 2796.33 1828.54 2795.4 1830.21 2794.48 1828.58 2793.55 1826.94 2792.63 1828.61 2791.7 1830.27 2790.78 1828.64 2789.85 1827 2788.93 1828.67 2788 1830.33ZM2788 1860.33 2788.93 1862.05 2789.85 1863.77 2790.78 1862.08 2791.7 1860.4 2792.63 1862.11 2793.55 1863.83 2794.48 1862.14 2795.4 1860.46 2796.33 1862.18 2797.25 1863.89 2798.18 1862.21 2799.1 1860.52 2800.03 1862.24 2800.95 1863.95 2801.88 1862.27 2802.8 1860.59 2803.73 1862.3 2804.65 1864.02 2805.58 1862.33 2806.5 1860.65 2807.43 1862.36 2808.35 1864.08 2809.28 1862.4 2810.2 1860.71 2811.13 1862.43 2812.05 1864.14 2812.98 1862.46 2813.9 1860.77 2814.83 1862.49 2815.75 1864.2 L2815.75 1878.94 2814.83 1880.69 2813.9 1882.44 2812.98 1880.72 2812.05 1879 2811.13 1880.75 2810.2 1882.51 2809.28 1880.79 2808.35 1879.07 2807.43 1880.82 2806.5 1882.57 2805.58 1880.85 2804.65 1879.13 2803.73 1880.88 2802.8 1882.63 2801.88 1880.92 2800.95 1879.2 2800.03 1880.95 2799.1 1882.7 2798.18 1880.98 2797.25 1879.26 2796.33 1881.01 2795.4 1882.76 2794.48 1881.04 2793.55 1879.33 2792.63 1881.08 2791.7 1882.83 2790.78 1881.11 2789.85 1879.39 2788.93 1881.14 2788 1882.89ZM2818 1808.33 2818.93 1810.05 2819.85 1811.77 2820.78 1810.08 2821.7 1808.4 2822.63 1810.11 2823.55 1811.83 2824.48 1810.14 2825.4 1808.46 2826.33 1810.18 2827.25 1811.89 2828.18 1810.21 2829.1 1808.52 2830.03 1810.24 2830.95 1811.95 2831.88 1810.27 2832.8 1808.59 2833.73 1810.3 2834.65 1812.02 2835.58 1810.33 2836.5 1808.65 2837.43 1810.36 2838.35 1812.08 2839.28 1810.4 2840.2 1808.71 2841.13 1810.43 2842.05 1812.14 2842.98 1810.46 2843.9 1808.77 2844.83 1810.49 2845.75 1812.2 L2845.75 1826.58 2844.83 1828.24 2843.9 1829.9 2842.98 1828.27 2842.05 1826.64 2841.13 1828.3 2840.2 1829.97 2839.28 1828.33 2838.35 1826.7 2837.43 1828.36 2836.5 1830.03 2835.58 1828.39 2834.65 1826.76 2833.73 1828.42 2832.8 1830.09 2831.88 1828.45 2830.95 1826.82 2830.03 1828.48 2829.1 1830.15 2828.18 1828.51 2827.25 1826.88 2826.33 1828.54 2825.4 1830.21 2824.48 1828.58 2823.55 1826.94 2822.63 1828.61 2821.7 1830.27 2820.78 1828.64 2819.85 1827 2818.93 1828.67 2818 1830.33ZM2818 1860.33 2818.93 1862.05 2819.85 1863.77 2820.78 1862.08 2821.7 1860.4 2822.63 1862.11 2823.55 1863.83 2824.48 1862.14 2825.4 1860.46 2826.33 1862.18 2827.25 1863.89 2828.18 1862.21 2829.1 1860.52 2830.03 1862.24 2830.95 1863.95 2831.88 1862.27 2832.8 1860.59 2833.73 1862.3 2834.65 1864.02 2835.58 1862.33 2836.5 1860.65 2837.43 1862.36 2838.35 1864.08 2839.28 1862.4 2840.2 1860.71 2841.13 1862.43 2842.05 1864.14 2842.98 1862.46 2843.9 1860.77 2844.83 1862.49 2845.75 1864.2 L2845.75 1878.94 2844.83 1880.69 2843.9 1882.44 2842.98 1880.72 2842.05 1879 2841.13 1880.75 2840.2 1882.51 2839.28 1880.79 2838.35 1879.07 2837.43 1880.82 2836.5 1882.57 2835.58 1880.85 2834.65 1879.13 2833.73 1880.88 2832.8 1882.63 2831.88 1880.92 2830.95 1879.2 2830.03 1880.95 2829.1 1882.7 2828.18 1880.98 2827.25 1879.26 2826.33 1881.01 2825.4 1882.76 2824.48 1881.04 2823.55 1879.33 2822.63 1881.08 2821.7 1882.83 2820.78 1881.11 2819.85 1879.39 2818.93 1881.14 2818 1882.89ZM2848 1808.33 2848.93 1810.05 2849.85 1811.77 2850.78 1810.08 2851.7 1808.4 2852.63 1810.11 2853.55 1811.83 2854.48 1810.14 2855.4 1808.46 2856.33 1810.18 2857.25 1811.89 2858.18 1810.21 2859.1 1808.52 2860.03 1810.24 2860.95 1811.95 2861.88 1810.27 2862.8 1808.59 2863.73 1810.3 2864.65 1812.02 2865.58 1810.33 2866.5 1808.65 2867.43 1810.36 2868.35 1812.08 2869.28 1810.4 2870.2 1808.71 2871.13 1810.43 2872.05 1812.14 2872.98 1810.46 2873.9 1808.77 2874.83 1810.49 2875.75 1812.2 L2875.75 1826.58 2874.83 1828.24 2873.9 1829.9 2872.98 1828.27 2872.05 1826.64 2871.13 1828.3 2870.2 1829.97 2869.28 1828.33 2868.35 1826.7 2867.43 1828.36 2866.5 1830.03 2865.58 1828.39 2864.65 1826.76 2863.73 1828.42 2862.8 1830.09 2861.88 1828.45 2860.95 1826.82 2860.03 1828.48 2859.1 1830.15 2858.18 1828.51 2857.25 1826.88 2856.33 1828.54 2855.4 1830.21 2854.48 1828.58 2853.55 1826.94 2852.63 1828.61 2851.7 1830.27 2850.78 1828.64 2849.85 1827 2848.93 1828.67 2848 1830.33ZM2848 1860.33 2848.93 1862.05 2849.85 1863.77 2850.78 1862.08 2851.7 1860.4 2852.63 1862.11 2853.55 1863.83 2854.48 1862.14 2855.4 1860.46 2856.33 1862.18 2857.25 1863.89 2858.18 1862.21 2859.1 1860.52 2860.03 1862.24 2860.95 1863.95 2861.88 1862.27 2862.8 1860.59 2863.73 1862.3 2864.65 1864.02 2865.58 1862.33 2866.5 1860.65 2867.43 1862.36 2868.35 1864.08 2869.28 1862.4 2870.2 1860.71 2871.13 1862.43 2872.05 1864.14 2872.98 1862.46 2873.9 1860.77 2874.83 1862.49 2875.75 1864.2 L2875.75 1878.94 2874.83 1880.69 2873.9 1882.44 2872.98 1880.72 2872.05 1879 2871.13 1880.75 2870.2 1882.51 2869.28 1880.79 2868.35 1879.07 2867.43 1880.82 2866.5 1882.57 2865.58 1880.85 2864.65 1879.13 2863.73 1880.88 2862.8 1882.63 2861.88 1880.92 2860.95 1879.2 2860.03 1880.95 2859.1 1882.7 2858.18 1880.98 2857.25 1879.26 2856.33 1881.01 2855.4 1882.76 2854.48 1881.04 2853.55 1879.33 2852.63 1881.08 2851.7 1882.83 2850.78 1881.11 2849.85 1879.39 2848.93 1881.14 2848 1882.89ZM2878 1808.33 2878.93 1810.05 2879.85 1811.77 2880.78 1810.08 2881.7 1808.4 2882.63 1810.11 2883.55 1811.83 2884.48 1810.14 2885.4 1808.46 2886.33 1810.18 2887.25 1811.89 2888.18 1810.21 2889.1 1808.52 2890.03 1810.24 2890.95 1811.95 2891.88 1810.27 2892.8 1808.59 2893.73 1810.3 2894.65 1812.02 2895.58 1810.33 2896.5 1808.65 2897.43 1810.36 2898.35 1812.08 2899.28 1810.4 2900.2 1808.71 2901.13 1810.43 2902.05 1812.14 2902.98 1810.46 2903.9 1808.77 L2903.9 1829.9 2902.98 1828.27 2902.05 1826.64 2901.13 1828.3 2900.2 1829.97 2899.28 1828.33 2898.35 1826.7 2897.43 1828.36 2896.5 1830.03 2895.58 1828.39 2894.65 1826.76 2893.73 1828.42 2892.8 1830.09 2891.88 1828.45 2890.95 1826.82 2890.03 1828.48 2889.1 1830.15 2888.18 1828.51 2887.25 1826.88 2886.33 1828.54 2885.4 1830.21 2884.48 1828.58 2883.55 1826.94 2882.63 1828.61 2881.7 1830.27 2880.78 1828.64 2879.85 1827 2878.93 1828.67 2878 1830.33ZM2878 1860.33 2878.93 1862.05 2879.85 1863.77 2880.78 1862.08 2881.7 1860.4 2882.63 1862.11 2883.55 1863.83 2884.48 1862.14 2885.4 1860.46 2886.33 1862.18 2887.25 1863.89 2888.18 1862.21 2889.1 1860.52 2890.03 1862.24 2890.95 1863.95 2891.88 1862.27 2892.8 1860.59 2893.73 1862.3 2894.65 1864.02 2895.58 1862.33 2896.5 1860.65 2897.43 1862.36 2898.35 1864.08 2899.28 1862.4 2900.2 1860.71 2901.13 1862.43 2902.05 1864.14 2902.98 1862.46 2903.9 1860.77 L2903.9 1882.44 2902.98 1880.72 2902.05 1879 2901.13 1880.75 2900.2 1882.51 2899.28 1880.79 2898.35 1879.07 2897.43 1880.82 2896.5 1882.57 2895.58 1880.85 2894.65 1879.13 2893.73 1880.88 2892.8 1882.63 2891.88 1880.92 2890.95 1879.2 2890.03 1880.95 2889.1 1882.7 2888.18 1880.98 2887.25 1879.26 2886.33 1881.01 2885.4 1882.76 2884.48 1881.04 2883.55 1879.33 2882.63 1881.08 2881.7 1882.83 2880.78 1881.11 2879.85 1879.39 2878.93 1881.14 2878 1882.89ZM2906 1808.33 2906.93 1810.05 2907.85 1811.77 2908.78 1810.08 2909.7 1808.4 2910.63 1810.11 2911.55 1811.83 2912.48 1810.14 2913.4 1808.46 2914.33 1810.18 2915.25 1811.89 2916.18 1810.21 2917.1 1808.52 2918.03 1810.24 2918.95 1811.95 2919.88 1810.27 2920.8 1808.59 2921.73 1810.3 2922.65 1812.02 2923.58 1810.33 2924.5 1808.65 2925.43 1810.36 2926.35 1812.08 2927.28 1810.4 2928.2 1808.71 2929.13 1810.43 2930.05 1812.14 2930.98 1810.46 2931.9 1808.77 2932.83 1810.49 2933.75 1812.2 L2933.75 1826.58 2932.83 1828.24 2931.9 1829.9 2930.98 1828.27 2930.05 1826.64 2929.13 1828.3 2928.2 1829.97 2927.28 1828.33 2926.35 1826.7 2925.43 1828.36 2924.5 1830.03 2923.58 1828.39 2922.65 1826.76 2921.73 1828.42 2920.8 1830.09 2919.88 1828.45 2918.95 1826.82 2918.03 1828.48 2917.1 1830.15 2916.18 1828.51 2915.25 1826.88 2914.33 1828.54 2913.4 1830.21 2912.48 1828.58 2911.55 1826.94 2910.63 1828.61 2909.7 1830.27 2908.78 1828.64 2907.85 1827 2906.93 1828.67 2906 1830.33ZM2906 1860.33 2906.93 1862.05 2907.85 1863.77 2908.78 1862.08 2909.7 1860.4 2910.63 1862.11 2911.55 1863.83 2912.48 1862.14 2913.4 1860.46 2914.33 1862.18 2915.25 1863.89 2916.18 1862.21 2917.1 1860.52 2918.03 1862.24 2918.95 1863.95 2919.88 1862.27 2920.8 1860.59 2921.73 1862.3 2922.65 1864.02 2923.58 1862.33 2924.5 1860.65 2925.43 1862.36 2926.35 1864.08 2927.28 1862.4 2928.2 1860.71 2929.13 1862.43 2930.05 1864.14 2930.98 1862.46 2931.9 1860.77 2932.83 1862.49 2933.75 1864.2 L2933.75 1878.94 2932.83 1880.69 2931.9 1882.44 2930.98 1880.72 2930.05 1879 2929.13 1880.75 2928.2 1882.51 2927.28 1880.79 2926.35 1879.07 2925.43 1880.82 2924.5 1882.57 2923.58 1880.85 2922.65 1879.13 2921.73 1880.88 2920.8 1882.63 2919.88 1880.92 2918.95 1879.2 2918.03 1880.95 2917.1 1882.7 2916.18 1880.98 2915.25 1879.26 2914.33 1881.01 2913.4 1882.76 2912.48 1881.04 2911.55 1879.33 2910.63 1881.08 2909.7 1882.83 2908.78 1881.11 2907.85 1879.39 2906.93 1881.14 2906 1882.89ZM2936 1808.33 2936.93 1810.05 2937.85 1811.77 2938.78 1810.08 2939.7 1808.4 2940.63 1810.11 2941.55 1811.83 2942.48 1810.14 2943.4 1808.46 2944.33 1810.18 2945.25 1811.89 2946.18 1810.21 2947.1 1808.52 2948.03 1810.24 2948.95 1811.95 2949.88 1810.27 2950.8 1808.59 2951.73 1810.3 2952.65 1812.02 2953.58 1810.33 2954.5 1808.65 2955.43 1810.36 2956.35 1812.08 2957.28 1810.4 2958.2 1808.71 2959.13 1810.43 2960.05 1812.14 2960.98 1810.46 2961.9 1808.77 2962.83 1810.49 2963.75 1812.2 L2963.75 1826.58 2962.83 1828.24 2961.9 1829.9 2960.98 1828.27 2960.05 1826.64 2959.13 1828.3 2958.2 1829.97 2957.28 1828.33 2956.35 1826.7 2955.43 1828.36 2954.5 1830.03 2953.58 1828.39 2952.65 1826.76 2951.73 1828.42 2950.8 1830.09 2949.88 1828.45 2948.95 1826.82 2948.03 1828.48 2947.1 1830.15 2946.18 1828.51 2945.25 1826.88 2944.33 1828.54 2943.4 1830.21 2942.48 1828.58 2941.55 1826.94 2940.63 1828.61 2939.7 1830.27 2938.78 1828.64 2937.85 1827 2936.93 1828.67 2936 1830.33ZM2936 1860.33 2936.93 1862.05 2937.85 1863.77 2938.78 1862.08 2939.7 1860.4 2940.63 1862.11 2941.55 1863.83 2942.48 1862.14 2943.4 1860.46 2944.33 1862.18 2945.25 1863.89 2946.18 1862.21 2947.1 1860.52 2948.03 1862.24 2948.95 1863.95 2949.88 1862.27 2950.8 1860.59 2951.73 1862.3 2952.65 1864.02 2953.58 1862.33 2954.5 1860.65 2955.43 1862.36 2956.35 1864.08 2957.28 1862.4 2958.2 1860.71 2959.13 1862.43 2960.05 1864.14 2960.98 1862.46 2961.9 1860.77 2962.83 1862.49 2963.75 1864.2 L2963.75 1878.94 2962.83 1880.69 2961.9 1882.44 2960.98 1880.72 2960.05 1879 2959.13 1880.75 2958.2 1882.51 2957.28 1880.79 2956.35 1879.07 2955.43 1880.82 2954.5 1882.57 2953.58 1880.85 2952.65 1879.13 2951.73 1880.88 2950.8 1882.63 2949.88 1880.92 2948.95 1879.2 2948.03 1880.95 2947.1 1882.7 2946.18 1880.98 2945.25 1879.26 2944.33 1881.01 2943.4 1882.76 2942.48 1881.04 2941.55 1879.33 2940.63 1881.08 2939.7 1882.83 2938.78 1881.11 2937.85 1879.39 2936.93 1881.14 2936 1882.89ZM2966 1808.33 2966.93 1810.05 2967.85 1811.77 2968.78 1810.08 2969.7 1808.4 2970.63 1810.11 2971.55 1811.83 2972.48 1810.14 2973.4 1808.46 2974.33 1810.18 2975.25 1811.89 2976.18 1810.21 2977.1 1808.52 2978.03 1810.24 2978.95 1811.95 2979.88 1810.27 2980.8 1808.59 2981.73 1810.3 2982.65 1812.02 2983.58 1810.33 2984.5 1808.65 2985.43 1810.36 2986.35 1812.08 2987.28 1810.4 2988.2 1808.71 2989.13 1810.43 2990.05 1812.14 2990.98 1810.46 2991.9 1808.77 L2991.9 1829.9 2990.98 1828.27 2990.05 1826.64 2989.13 1828.3 2988.2 1829.97 2987.28 1828.33 2986.35 1826.7 2985.43 1828.36 2984.5 1830.03 2983.58 1828.39 2982.65 1826.76 2981.73 1828.42 2980.8 1830.09 2979.88 1828.45 2978.95 1826.82 2978.03 1828.48 2977.1 1830.15 2976.18 1828.51 2975.25 1826.88 2974.33 1828.54 2973.4 1830.21 2972.48 1828.58 2971.55 1826.94 2970.63 1828.61 2969.7 1830.27 2968.78 1828.64 2967.85 1827 2966.93 1828.67 2966 1830.33ZM2966 1860.33 2966.93 1862.05 2967.85 1863.77 2968.78 1862.08 2969.7 1860.4 2970.63 1862.11 2971.55 1863.83 2972.48 1862.14 2973.4 1860.46 2974.33 1862.18 2975.25 1863.89 2976.18 1862.21 2977.1 1860.52 2978.03 1862.24 2978.95 1863.95 2979.88 1862.27 2980.8 1860.59 2981.73 1862.3 2982.65 1864.02 2983.58 1862.33 2984.5 1860.65 2985.43 1862.36 2986.35 1864.08 2987.28 1862.4 2988.2 1860.71 2989.13 1862.43 2990.05 1864.14 2990.98 1862.46 2991.9 1860.77 L2991.9 1882.44 2990.98 1880.72 2990.05 1879 2989.13 1880.75 2988.2 1882.51 2987.28 1880.79 2986.35 1879.07 2985.43 1880.82 2984.5 1882.57 2983.58 1880.85 2982.65 1879.13 2981.73 1880.88 2980.8 1882.63 2979.88 1880.92 2978.95 1879.2 2978.03 1880.95 2977.1 1882.7 2976.18 1880.98 2975.25 1879.26 2974.33 1881.01 2973.4 1882.76 2972.48 1881.04 2971.55 1879.33 2970.63 1881.08 2969.7 1882.83 2968.78 1881.11 2967.85 1879.39 2966.93 1881.14 2966 1882.89ZM2994 1808.33 2994.93 1810.05 2995.85 1811.77 2996.78 1810.08 2997.7 1808.4 2998.63 1810.11 2999.55 1811.83 3000.48 1810.14 3001.4 1808.46 3002.33 1810.18 3003.25 1811.89 3004.18 1810.21 3005.1 1808.52 3006.03 1810.24 3006.95 1811.95 3007.88 1810.27 3008.8 1808.59 3009.73 1810.3 3010.65 1812.02 3011.58 1810.33 3012.5 1808.65 3013.43 1810.36 3014.35 1812.08 3015.28 1810.4 3016.2 1808.71 3017.13 1810.43 3018.05 1812.14 3018.98 1810.46 3019.9 1808.77 3020.83 1810.49 3021.75 1812.2 L3021.75 1826.58 3020.83 1828.24 3019.9 1829.9 3018.98 1828.27 3018.05 1826.64 3017.13 1828.3 3016.2 1829.97 3015.28 1828.33 3014.35 1826.7 3013.43 1828.36 3012.5 1830.03 3011.58 1828.39 3010.65 1826.76 3009.73 1828.42 3008.8 1830.09 3007.88 1828.45 3006.95 1826.82 3006.03 1828.48 3005.1 1830.15 3004.18 1828.51 3003.25 1826.88 3002.33 1828.54 3001.4 1830.21 3000.48 1828.58 2999.55 1826.94 2998.63 1828.61 2997.7 1830.27 2996.78 1828.64 2995.85 1827 2994.93 1828.67 2994 1830.33ZM2994 1860.33 2994.93 1862.05 2995.85 1863.77 2996.78 1862.08 2997.7 1860.4 2998.63 1862.11 2999.55 1863.83 3000.48 1862.14 3001.4 1860.46 3002.33 1862.18 3003.25 1863.89 3004.18 1862.21 3005.1 1860.52 3006.03 1862.24 3006.95 1863.95 3007.88 1862.27 3008.8 1860.59 3009.73 1862.3 3010.65 1864.02 3011.58 1862.33 3012.5 1860.65 3013.43 1862.36 3014.35 1864.08 3015.28 1862.4 3016.2 1860.71 3017.13 1862.43 3018.05 1864.14 3018.98 1862.46 3019.9 1860.77 3020.83 1862.49 3021.75 1864.2 L3021.75 1878.94 3020.83 1880.69 3019.9 1882.44 3018.98 1880.72 3018.05 1879 3017.13 1880.75 3016.2 1882.51 3015.28 1880.79 3014.35 1879.07 3013.43 1880.82 3012.5 1882.57 3011.58 1880.85 3010.65 1879.13 3009.73 1880.88 3008.8 1882.63 3007.88 1880.92 3006.95 1879.2 3006.03 1880.95 3005.1 1882.7 3004.18 1880.98 3003.25 1879.26 3002.33 1881.01 3001.4 1882.76 3000.48 1881.04 2999.55 1879.33 2998.63 1881.08 2997.7 1882.83 2996.78 1881.11 2995.85 1879.39 2994.93 1881.14 2994 1882.89ZM3024 1808.33 3024.93 1810.05 3025.85 1811.77 3026.78 1810.08 3027.7 1808.4 3028.63 1810.11 3029.55 1811.83 3030.48 1810.14 3031.4 1808.46 3032.33 1810.18 3033.25 1811.89 3034.18 1810.21 3035.1 1808.52 3036.03 1810.24 3036.95 1811.95 3037.88 1810.27 3038.8 1808.59 3039.73 1810.3 3040.65 1812.02 3041.58 1810.33 3042.5 1808.65 3043.43 1810.36 3044.35 1812.08 3045.28 1810.4 3046.2 1808.71 3047.13 1810.43 3048.05 1812.14 3048.98 1810.46 3049.9 1808.77 3050.83 1810.49 3051.75 1812.2 L3051.75 1826.58 3050.83 1828.24 3049.9 1829.9 3048.98 1828.27 3048.05 1826.64 3047.13 1828.3 3046.2 1829.97 3045.28 1828.33 3044.35 1826.7 3043.43 1828.36 3042.5 1830.03 3041.58 1828.39 3040.65 1826.76 3039.73 1828.42 3038.8 1830.09 3037.88 1828.45 3036.95 1826.82 3036.03 1828.48 3035.1 1830.15 3034.18 1828.51 3033.25 1826.88 3032.33 1828.54 3031.4 1830.21 3030.48 1828.58 3029.55 1826.94 3028.63 1828.61 3027.7 1830.27 3026.78 1828.64 3025.85 1827 3024.93 1828.67 3024 1830.33ZM3024 1860.33 3024.93 1862.05 3025.85 1863.77 3026.78 1862.08 3027.7 1860.4 3028.63 1862.11 3029.55 1863.83 3030.48 1862.14 3031.4 1860.46 3032.33 1862.18 3033.25 1863.89 3034.18 1862.21 3035.1 1860.52 3036.03 1862.24 3036.95 1863.95 3037.88 1862.27 3038.8 1860.59 3039.73 1862.3 3040.65 1864.02 3041.58 1862.33 3042.5 1860.65 3043.43 1862.36 3044.35 1864.08 3045.28 1862.4 3046.2 1860.71 3047.13 1862.43 3048.05 1864.14 3048.98 1862.46 3049.9 1860.77 3050.83 1862.49 3051.75 1864.2 L3051.75 1878.94 3050.83 1880.69 3049.9 1882.44 3048.98 1880.72 3048.05 1879 3047.13 1880.75 3046.2 1882.51 3045.28 1880.79 3044.35 1879.07 3043.43 1880.82 3042.5 1882.57 3041.58 1880.85 3040.65 1879.13 3039.73 1880.88 3038.8 1882.63 3037.88 1880.92 3036.95 1879.2 3036.03 1880.95 3035.1 1882.7 3034.18 1880.98 3033.25 1879.26 3032.33 1881.01 3031.4 1882.76 3030.48 1881.04 3029.55 1879.33 3028.63 1881.08 3027.7 1882.83 3026.78 1881.11 3025.85 1879.39 3024.93 1881.14 3024 1882.89ZM3054 1808.33 3054.93 1810.05 3055.85 1811.77 3056.78 1810.08 3057.7 1808.4 3058.63 1810.11 3059.55 1811.83 3060.48 1810.14 3061.4 1808.46 3062.33 1810.18 3063.25 1811.89 3064.18 1810.21 3065.1 1808.52 3066.03 1810.24 3066.95 1811.95 3067.88 1810.27 3068.8 1808.59 3069.73 1810.3 3070.65 1812.02 3071.58 1810.33 3072.5 1808.65 3073.43 1810.36 3074.35 1812.08 3075.28 1810.4 3076.2 1808.71 3077.13 1810.43 3078.05 1812.14 3078.98 1810.46 3079.9 1808.77 3080.83 1810.49 3081.75 1812.2 L3081.75 1826.58 3080.83 1828.24 3079.9 1829.9 3078.98 1828.27 3078.05 1826.64 3077.13 1828.3 3076.2 1829.97 3075.28 1828.33 3074.35 1826.7 3073.43 1828.36 3072.5 1830.03 3071.58 1828.39 3070.65 1826.76 3069.73 1828.42 3068.8 1830.09 3067.88 1828.45 3066.95 1826.82 3066.03 1828.48 3065.1 1830.15 3064.18 1828.51 3063.25 1826.88 3062.33 1828.54 3061.4 1830.21 3060.48 1828.58 3059.55 1826.94 3058.63 1828.61 3057.7 1830.27 3056.78 1828.64 3055.85 1827 3054.93 1828.67 3054 1830.33ZM3054 1860.33 3054.93 1862.05 3055.85 1863.77 3056.78 1862.08 3057.7 1860.4 3058.63 1862.11 3059.55 1863.83 3060.48 1862.14 3061.4 1860.46 3062.33 1862.18 3063.25 1863.89 3064.18 1862.21 3065.1 1860.52 3066.03 1862.24 3066.95 1863.95 3067.88 1862.27 3068.8 1860.59 3069.73 1862.3 3070.65 1864.02 3071.58 1862.33 3072.5 1860.65 3073.43 1862.36 3074.35 1864.08 3075.28 1862.4 3076.2 1860.71 3077.13 1862.43 3078.05 1864.14 3078.98 1862.46 3079.9 1860.77 3080.83 1862.49 3081.75 1864.2 L3081.75 1878.94 3080.83 1880.69 3079.9 1882.44 3078.98 1880.72 3078.05 1879 3077.13 1880.75 3076.2 1882.51 3075.28 1880.79 3074.35 1879.07 3073.43 1880.82 3072.5 1882.57 3071.58 1880.85 3070.65 1879.13 3069.73 1880.88 3068.8 1882.63 3067.88 1880.92 3066.95 1879.2 3066.03 1880.95 3065.1 1882.7 3064.18 1880.98 3063.25 1879.26 3062.33 1881.01 3061.4 1882.76 3060.48 1881.04 3059.55 1879.33 3058.63 1881.08 3057.7 1882.83 3056.78 1881.11 3055.85 1879.39 3054.93 1881.14 3054 1882.89Z" fill="#18262a"/><g opacity="0.85"><path d="M48 1792h2v104h-2zM76 1792h2v104h-2zM106 1792h2v104h-2zM136 1792h2v104h-2zM166 1792h2v104h-2zM194 1792h2v104h-2zM224 1792h2v104h-2zM254 1792h2v104h-2zM282 1792h2v104h-2zM312 1792h2v104h-2zM342 1792h2v104h-2zM372 1792h2v104h-2zM400 1792h2v104h-2zM430 1792h2v104h-2zM460 1792h2v104h-2zM490 1792h2v104h-2zM518 1792h2v104h-2zM548 1792h2v104h-2zM578 1792h2v104h-2zM636 1792h2v104h-2zM666 1792h2v104h-2zM696 1792h2v104h-2zM754 1792h2v104h-2zM784 1792h2v104h-2zM814 1792h2v104h-2zM872 1792h2v104h-2zM902 1792h2v104h-2zM932 1792h2v104h-2zM1696 1792h2v104h-2zM1726 1792h2v104h-2zM1756 1792h2v104h-2zM1786 1792h2v104h-2zM1814 1792h2v104h-2zM1844 1792h2v104h-2zM1874 1792h2v104h-2zM1904 1792h2v104h-2zM1932 1792h2v104h-2zM1962 1792h2v104h-2zM1992 1792h2v104h-2zM2020 1792h2v104h-2zM2050 1792h2v104h-2zM2080 1792h2v104h-2zM2110 1792h2v104h-2zM2168 1792h2v104h-2zM2198 1792h2v104h-2zM2228 1792h2v104h-2zM2256 1792h2v104h-2zM2286 1792h2v104h-2zM2316 1792h2v104h-2zM2344 1792h2v104h-2zM2374 1792h2v104h-2zM2404 1792h2v104h-2zM2434 1792h2v104h-2zM2462 1792h2v104h-2zM2492 1792h2v104h-2zM2522 1792h2v104h-2zM2552 1792h2v104h-2zM2580 1792h2v104h-2z" fill="#357987"/></g><path d="M254 1760h2v6h-2zM254 1890h2v6h-2zM490 1760h2v6h-2zM490 1890h2v6h-2zM1904 1760h2v6h-2zM1904 1890h2v6h-2zM2374 1760h2v6h-2zM2374 1890h2v6h-2z" fill="#0c2228"/><rect x="18" y="1986" width="2" height="34" fill="#ffffff"/><path d="M18 202h8l-8 8z" fill="#45b5cc"/><path d="M18 2026l8 8h-8z" fill="#45b5cc"/><path d="M18 2024h2v14h2v2h-4zM54 2024h2v4h-2zM90 2024h2v4h-2zM126 2024h2v4h-2zM162 2024h2v4h-2zM198 2024h2v14h2v2h-4zM234 2024h2v4h-2zM270 2024h2v4h-2zM306 2024h2v4h-2zM342 2024h2v4h-2zM378 2024h2v14h2v2h-4zM414 2024h2v4h-2zM450 2024h2v4h-2zM486 2024h2v4h-2zM524 2024h2v4h-2zM560 2024h2v14h2v2h-4zM596 2024h2v4h-2zM632 2024h2v4h-2zM668 2024h2v4h-2zM704 2024h2v4h-2zM740 2024h2v14h2v2h-4zM776 2024h2v4h-2zM812 2024h2v4h-2zM848 2024h2v4h-2zM884 2024h2v4h-2zM920 2024h2v14h2v2h-4zM956 2024h2v4h-2zM992 2024h2v4h-2zM1028 2024h2v4h-2zM1064 2024h2v4h-2zM1100 2024h2v14h2v2h-4zM1136 2024h2v4h-2zM1172 2024h2v4h-2zM1208 2024h2v4h-2zM1244 2024h2v4h-2zM1280 2024h2v14h2v2h-4zM1316 2024h2v4h-2zM1352 2024h2v4h-2zM1390 2024h2v4h-2zM1426 2024h2v4h-2zM1462 2024h2v14h2v2h-4zM1498 2024h2v4h-2zM1534 2024h2v4h-2zM1570 2024h2v4h-2zM1606 2024h2v4h-2zM1642 2024h2v14h2v2h-4zM1678 2024h2v4h-2zM1714 2024h2v4h-2zM1750 2024h2v4h-2zM1786 2024h2v4h-2zM1822 2024h2v14h2v2h-4zM1858 2024h2v4h-2zM1894 2024h2v4h-2zM1930 2024h2v4h-2zM1966 2024h2v4h-2zM2002 2024h2v14h2v2h-4zM2038 2024h2v4h-2zM2074 2024h2v4h-2zM2110 2024h2v4h-2zM2146 2024h2v4h-2zM2182 2024h2v14h2v2h-4zM2218 2024h2v4h-2zM2256 2024h2v4h-2zM2292 2024h2v4h-2zM2328 2024h2v4h-2zM2364 2024h2v14h2v2h-4zM2400 2024h2v4h-2zM2436 2024h2v4h-2zM2472 2024h2v4h-2zM2508 2024h2v4h-2zM2544 2024h2v14h2v2h-4zM2580 2024h2v4h-2zM2616 2024h2v4h-2zM2652 2024h2v4h-2zM2688 2024h2v4h-2zM2724 2024h2v14h2v2h-4zM2760 2024h2v4h-2zM2796 2024h2v4h-2zM2832 2024h2v4h-2zM2868 2024h2v4h-2zM2904 2024h2v14h2v2h-4zM2940 2024h2v4h-2zM2976 2024h2v4h-2zM3012 2024h2v4h-2zM3048 2024h2v4h-2zM3084 2024h2v14h2v2h-4zM3122 2024h2v4h-2z" fill="#8f8f8f"/><rect x="3146" y="210" width="214" height="1814" fill="#232323"/><rect x="3360" y="210" width="42" height="4" fill="#232323"/><rect x="3360" y="318" width="42" height="4" fill="#232323"/><rect x="3360" y="356" width="42" height="4" fill="#232323"/><rect x="3360" y="394" width="42" height="4" fill="#232323"/><rect x="3360" y="432" width="42" height="4" fill="#232323"/><rect x="3360" y="470" width="42" height="4" fill="#232323"/><rect x="3360" y="508" width="42" height="4" fill="#232323"/><rect x="3360" y="546" width="42" height="4" fill="#232323"/><rect x="3360" y="584" width="42" height="4" fill="#232323"/><rect x="3360" y="622" width="42" height="4" fill="#232323"/><rect x="3360" y="660" width="42" height="4" fill="#232323"/><rect x="3360" y="698" width="42" height="4" fill="#232323"/><rect x="3360" y="806" width="42" height="4" fill="#232323"/><rect x="3360" y="914" width="42" height="4" fill="#232323"/><rect x="3360" y="988" width="42" height="4" fill="#232323"/><rect x="3360" y="1096" width="42" height="4" fill="#232323"/><rect x="3360" y="1134" width="42" height="4" fill="#232323"/><rect x="3360" y="1242" width="42" height="4" fill="#232323"/><rect x="3360" y="1316" width="42" height="4" fill="#232323"/><rect x="3360" y="1390" width="42" height="4" fill="#232323"/><rect x="3360" y="1428" width="42" height="4" fill="#232323"/><rect x="3360" y="1536" width="42" height="4" fill="#232323"/><rect x="3360" y="1644" width="42" height="4" fill="#232323"/><rect x="3360" y="1682" width="42" height="4" fill="#232323"/><rect x="3360" y="1754" width="42" height="4" fill="#232323"/><rect x="3360" y="1896" width="42" height="4" fill="#232323"/><rect x="3360" y="1968" width="42" height="4" fill="#232323"/><rect x="3360" y="2020" width="42" height="4" fill="#232323"/><rect x="3146" y="1972" width="256" height="8" fill="#363636"/><rect x="3146" y="1972" width="4" height="8" fill="#232323"/><rect x="3360" y="1980" width="42" height="6" fill="#232323"/><rect x="3150" y="214" width="206" height="484" fill="#70e7fd"/><rect x="3158" y="318" width="198" height="380" fill="#232323"/><rect x="3150" y="702" width="206" height="1052" fill="#856fdc"/><rect x="3158" y="806" width="198" height="948" fill="#232323"/><rect x="3160" y="810" width="196" height="506" fill="#856fdc"/><rect x="3168" y="914" width="188" height="402" fill="#232323"/><rect x="3150" y="214" width="206" height="104" fill="#70e7fd"/><circle cx="3167" cy="231" r="11.6" fill="none" stroke="#15363e" stroke-width="2"/><path d="M3160 227h10M3164 231h9.5M3164 235h9.5" stroke="#15363e" stroke-width="2.1" fill="none"/><rect x="3160" y="322" width="196" height="34" fill="#70e7fd"/><circle cx="3177" cy="339" r="11.6" fill="none" stroke="#15363e" stroke-width="2"/><path d="M3173.4 332.5l10.5 6.5l-10.5 6.5z" fill="#15363e"/><rect x="3160" y="360" width="196" height="34" fill="#70e7fd"/><circle cx="3177" cy="377" r="11.6" fill="none" stroke="#15363e" stroke-width="2"/><path d="M3173.4 370.5l10.5 6.5l-10.5 6.5z" fill="#15363e"/><rect x="3160" y="398" width="196" height="34" fill="#70e7fd"/><circle cx="3177" cy="415" r="11.6" fill="none" stroke="#15363e" stroke-width="2"/><path d="M3173.4 408.5l10.5 6.5l-10.5 6.5z" fill="#15363e"/><rect x="3160" y="436" width="196" height="34" fill="#70e7fd"/><circle cx="3177" cy="453" r="11.6" fill="none" stroke="#15363e" stroke-width="2"/><path d="M3173.4 446.5l10.5 6.5l-10.5 6.5z" fill="#15363e"/><rect x="3160" y="474" width="196" height="34" fill="#70e7fd"/><circle cx="3177" cy="491" r="11.6" fill="none" stroke="#15363e" stroke-width="2"/><path d="M3173.4 484.5l10.5 6.5l-10.5 6.5z" fill="#15363e"/><rect x="3160" y="512" width="196" height="34" fill="#70e7fd"/><circle cx="3177" cy="529" r="11.6" fill="none" stroke="#15363e" stroke-width="2"/><path d="M3173.4 522.5l10.5 6.5l-10.5 6.5z" fill="#15363e"/><rect x="3160" y="550" width="196" height="34" fill="#70e7fd"/><circle cx="3177" cy="567" r="11.6" fill="none" stroke="#15363e" stroke-width="2"/><path d="M3173.4 560.5l10.5 6.5l-10.5 6.5z" fill="#15363e"/><rect x="3160" y="588" width="196" height="34" fill="#70e7fd"/><circle cx="3177" cy="605" r="11.6" fill="none" stroke="#15363e" stroke-width="2"/><path d="M3173.4 598.5l10.5 6.5l-10.5 6.5z" fill="#15363e"/><rect x="3160" y="626" width="196" height="34" fill="#70e7fd"/><circle cx="3177" cy="643" r="11.6" fill="none" stroke="#15363e" stroke-width="2"/><path d="M3173.4 636.5l10.5 6.5l-10.5 6.5z" fill="#15363e"/><rect x="3160" y="664" width="196" height="34" fill="#70e7fd"/><circle cx="3177" cy="681" r="11.6" fill="none" stroke="#15363e" stroke-width="2"/><path d="M3173.4 674.5l10.5 6.5l-10.5 6.5z" fill="#15363e"/><rect x="3150" y="702" width="206" height="104" fill="#856fdc"/><circle cx="3167" cy="719" r="11.6" fill="none" stroke="#261c42" stroke-width="2"/><path d="M3160 715h10M3164 719h9.5M3164 723h9.5" stroke="#261c42" stroke-width="2.1" fill="none"/><rect x="3160" y="810" width="196" height="104" fill="#856fdc"/><circle cx="3177" cy="827" r="11.6" fill="none" stroke="#261c42" stroke-width="2"/><path d="M3170 823h10M3174 827h9.5M3174 831h9.5" stroke="#261c42" stroke-width="2.1" fill="none"/><rect x="3170" y="918" width="186" height="70" fill="#856fdc"/><circle cx="3187" cy="935" r="11.6" fill="none" stroke="#261c42" stroke-width="2"/><path d="M3180.5 932.4h13l-6.5 9.5z" fill="#261c42"/><rect x="3170" y="992" width="186" height="104" fill="#856fdc"/><circle cx="3187" cy="1009" r="11.6" fill="none" stroke="#261c42" stroke-width="2"/><path d="M3180.5 1006.4h13l-6.5 9.5z" fill="#261c42"/><rect x="3170" y="1100" width="186" height="34" fill="#856fdc"/><circle cx="3187" cy="1117" r="11.6" fill="none" stroke="#261c42" stroke-width="2"/><path d="M3183.4 1110.5l10.5 6.5l-10.5 6.5z" fill="#261c42"/><rect x="3170" y="1138" width="186" height="104" fill="#856fdc"/><circle cx="3187" cy="1155" r="11.6" fill="none" stroke="#261c42" stroke-width="2"/><path d="M3180.5 1152.4h13l-6.5 9.5z" fill="#261c42"/><rect x="3170" y="1246" width="186" height="70" fill="#856fdc"/><circle cx="3187" cy="1263" r="11.6" fill="none" stroke="#261c42" stroke-width="2"/><path d="M3180.5 1260.4h13l-6.5 9.5z" fill="#261c42"/><rect x="3160" y="1320" width="196" height="70" fill="#856fdc"/><circle cx="3177" cy="1337" r="11.6" fill="none" stroke="#261c42" stroke-width="2"/><path d="M3170.5 1334.4h13l-6.5 9.5z" fill="#261c42"/><rect x="3160" y="1394" width="196" height="34" fill="#856fdc"/><circle cx="3177" cy="1411" r="11.6" fill="none" stroke="#261c42" stroke-width="2"/><path d="M3173.4 1404.5l10.5 6.5l-10.5 6.5z" fill="#261c42"/><rect x="3160" y="1432" width="196" height="104" fill="#856fdc"/><circle cx="3177" cy="1449" r="11.6" fill="none" stroke="#261c42" stroke-width="2"/><path d="M3170.5 1446.4h13l-6.5 9.5z" fill="#261c42"/><rect x="3160" y="1540" width="196" height="104" fill="#856fdc"/><circle cx="3177" cy="1557" r="11.6" fill="none" stroke="#261c42" stroke-width="2"/><path d="M3170.5 1554.4h13l-6.5 9.5z" fill="#261c42"/><rect x="3160" y="1648" width="196" height="34" fill="#856fdc"/><circle cx="3177" cy="1665" r="11.6" fill="none" stroke="#261c42" stroke-width="2"/><path d="M3173.4 1658.5l10.5 6.5l-10.5 6.5z" fill="#261c42"/><rect x="3160" y="1686" width="196" height="68" fill="#856fdc"/><circle cx="3177" cy="1703" r="11.6" fill="none" stroke="#261c42" stroke-width="2"/><path d="M3172 1699h10M3172 1703h10M3172 1707h10" stroke="#261c42" stroke-width="2.1" fill="none"/><rect x="3150" y="1758" width="206" height="138" fill="#70e7fd"/><circle cx="3167" cy="1775" r="11.6" fill="none" stroke="#15363e" stroke-width="2"/><path d="M3160.5 1772.4h13l-6.5 9.5z" fill="#15363e"/><rect x="3150" y="1900" width="206" height="68" fill="#4aa1eb"/><circle cx="3167" cy="1917" r="11.6" fill="none" stroke="#10283c" stroke-width="2"/><path d="M3162 1913h10M3162 1917h10M3162 1921h10" stroke="#10283c" stroke-width="2.1" fill="none"/><rect x="3150" y="1986" width="206" height="34" fill="#f19daa"/><circle cx="3167" cy="2003" r="11.6" fill="none" stroke="#43222a" stroke-width="2"/><path d="M3163.4 1996.5l10.5 6.5l-10.5 6.5z" fill="#43222a"/><path d="M3368 218h6v10h-6zM3368 230h6v84h-6zM3376 218h6v10h-6zM3376 230h6v84h-6zM3368 326h6v2h-6zM3368 330h6v22h-6zM3376 326h6v2h-6zM3376 330h6v22h-6zM3368 364h6v2h-6zM3368 368h6v22h-6zM3376 364h6v2h-6zM3376 368h6v22h-6zM3368 402h6v2h-6zM3368 406h6v22h-6zM3376 402h6v2h-6zM3376 406h6v22h-6zM3368 440h6v2h-6zM3368 444h6v22h-6zM3376 440h6v2h-6zM3376 444h6v22h-6zM3368 478h6v2h-6zM3368 482h6v22h-6zM3376 478h6v2h-6zM3376 482h6v22h-6zM3368 516h6v2h-6zM3368 520h6v22h-6zM3376 516h6v2h-6zM3376 520h6v22h-6zM3368 554h6v2h-6zM3368 558h6v22h-6zM3376 554h6v2h-6zM3376 558h6v22h-6zM3368 592h6v2h-6zM3368 596h6v22h-6zM3376 592h6v2h-6zM3376 596h6v22h-6zM3368 630h6v2h-6zM3368 634h6v22h-6zM3376 630h6v2h-6zM3376 634h6v22h-6zM3368 668h6v2h-6zM3368 672h6v22h-6zM3376 668h6v2h-6zM3376 672h6v22h-6zM3368 706h6v10h-6zM3368 718h6v84h-6zM3376 706h6v10h-6zM3376 718h6v84h-6zM3368 814h6v10h-6zM3368 826h6v84h-6zM3376 814h6v10h-6zM3376 826h6v84h-6zM3368 922h6v6h-6zM3368 930h6v54h-6zM3376 922h6v6h-6zM3376 930h6v54h-6zM3368 996h6v10h-6zM3368 1008h6v84h-6zM3376 996h6v10h-6zM3376 1008h6v84h-6zM3368 1104h6v2h-6zM3368 1108h6v22h-6zM3376 1104h6v2h-6zM3376 1108h6v22h-6zM3368 1142h6v10h-6zM3368 1154h6v84h-6zM3376 1142h6v10h-6zM3376 1154h6v84h-6zM3368 1250h6v6h-6zM3368 1258h6v54h-6zM3376 1250h6v6h-6zM3376 1258h6v54h-6zM3368 1324h6v6h-6zM3368 1332h6v54h-6zM3376 1324h6v6h-6zM3376 1332h6v54h-6zM3368 1398h6v2h-6zM3368 1402h6v22h-6zM3376 1398h6v2h-6zM3376 1402h6v22h-6zM3368 1436h6v10h-6zM3368 1448h6v84h-6zM3376 1436h6v10h-6zM3376 1448h6v84h-6zM3368 1544h6v10h-6zM3368 1556h6v84h-6zM3376 1544h6v10h-6zM3376 1556h6v84h-6zM3368 1652h6v2h-6zM3368 1656h6v22h-6zM3376 1652h6v2h-6zM3376 1656h6v22h-6zM3368 1690h6v6h-6zM3368 1698h6v52h-6zM3376 1690h6v6h-6zM3376 1698h6v52h-6zM3368 1762h6v13h-6zM3368 1777h6v115h-6zM3376 1762h6v13h-6zM3376 1777h6v115h-6zM3368 1904h6v6h-6zM3368 1912h6v52h-6zM3376 1904h6v6h-6zM3376 1912h6v52h-6zM3368 1990h6v2h-6zM3368 1994h6v22h-6zM3376 1990h6v2h-6zM3376 1994h6v22h-6z" fill="#191919"/><rect x="3157" y="141" width="56" height="24" rx="12" fill="#1e1e1e" stroke="#181818" stroke-width="2"/><rect x="3237" y="141" width="44" height="24" fill="#1e1e1e" stroke="#161616" stroke-width="2"/><rect x="3291" y="141" width="44" height="24" fill="#dc724f" stroke="#161616" stroke-width="2"/><path d="M3255 157.2L3264.5 148.2" stroke="#c4c4c4" stroke-width="2.8"/><circle cx="3255" cy="157.2" r="3" fill="#c4c4c4"/><circle cx="3264.5" cy="148.2" r="3" fill="#c4c4c4"/><rect x="3306" y="152.5" width="14" height="8.5" fill="#111"/><path d="M3309 153v-2.5a4 4 0 0 1 8 0v2.5" stroke="#111" stroke-width="2" fill="none"/><circle cx="3168.7" cy="189.2" r="12" fill="#1e1e1e" stroke="#191919" stroke-width="2"/><circle cx="3200.8" cy="189.2" r="12" fill="#1e1e1e" stroke="#191919" stroke-width="2"/><path d="M3161.8 189.2l8 -6.3v5.2h6v2.2h-6v5.2z" fill="#7a7a7a"/><path d="M3207.8 189.2l-8 -6.3v5.2h-6v2.2h6v5.2z" fill="#c4c4c4"/><rect x="3151" y="2033" width="28" height="24" fill="#f5b66c" stroke="#1a1a1a" stroke-width="2"/><path d="M3156 2043v4M3159.5 2040.5v9M3163 2036.5v17M3166.5 2040.5v9M3170 2042v6M3173.5 2043.5v3" stroke="#1a1a1a" stroke-width="1.6" fill="none"/><rect x="3187" y="2033" width="68" height="24" fill="#1e1e1e" stroke="#181818" stroke-width="2"/><rect x="3189" y="2035" width="18.5" height="20" fill="#2f7486"/><rect x="3289" y="2033" width="28" height="24" fill="#1e1e1e" stroke="#181818" stroke-width="2"/><rect x="3325" y="2033" width="28" height="24" fill="#1e1e1e" stroke="#181818" stroke-width="2"/></svg>
<div id="ovbox"></div>
<div class="rn" style="left:28.5px">1</div>
<div class="rn" style="left:146.5px">5</div>
<div class="rn" style="left:264.5px">9</div>
<div class="rn" style="left:382.5px">13</div>
<div class="rn" style="left:500.5px">17</div>
<div class="rn" style="left:618.5px">21</div>
<div class="rn" style="left:734.5px">25</div>
<div class="rn" style="left:852.5px">29</div>
<div class="rn" style="left:970.5px">33</div>
<div class="rn" style="left:1088.5px">37</div>
<div class="rn" style="left:1206.5px">41</div>
<div class="rn" style="left:1324.5px">45</div>
<div class="rn" style="left:1442.5px">49</div>
<div class="rn" style="left:1560.5px">53</div>
<div class="rn" style="left:1678.5px">57</div>
<div class="rn" style="left:1796.5px">61</div>
<div class="rn" style="left:1914.5px">65</div>
<div class="rn" style="left:2030.5px">69</div>
<div class="rn" style="left:2148.5px">73</div>
<div class="rn" style="left:2266.5px">77</div>
<div class="rn" style="left:2384.5px">81</div>
<div class="rn" style="left:2502.5px">85</div>
<div class="rn" style="left:2620.5px">89</div>
<div class="rn" style="left:2738.5px">93</div>
<div class="rn" style="left:2856.5px">97</div>
<div class="rn" style="left:2974.5px">101</div>
<div class="rn" style="left:3092.5px">105</div>
<div class="tn" style="left:24.5px">0:00</div>
<div class="tn" style="left:204.5px">0:10</div>
<div class="tn" style="left:384.5px">0:20</div>
<div class="tn" style="left:566.5px">0:30</div>
<div class="tn" style="left:746.5px">0:40</div>
<div class="tn" style="left:926.5px">0:50</div>
<div class="tn" style="left:1106.5px">1:00</div>
<div class="tn" style="left:1286.5px">1:10</div>
<div class="tn" style="left:1468.5px">1:20</div>
<div class="tn" style="left:1648.5px">1:30</div>
<div class="tn" style="left:1828.5px">1:40</div>
<div class="tn" style="left:2008.5px">1:50</div>
<div class="tn" style="left:2188.5px">2:00</div>
<div class="tn" style="left:2370.5px">2:10</div>
<div class="tn" style="left:2550.5px">2:20</div>
<div class="tn" style="left:2730.5px">2:30</div>
<div class="tn" style="left:2910.5px">2:40</div>
<div class="tn" style="left:3090.5px">2:50</div>
<div class="vl" style="left:24px;width:584px">SHADOW_MG_Vocal_Phrase_With_U_A#m_134</div>
<div class="vl" style="left:614px;width:110px">SHADOW_MG_Vocal_Phrase_With_U_A#m_134</div>
<div class="vl" style="left:730px;width:112px">SHADOW_MG_Vocal_Phrase_With_U_A#m_134</div>
<div class="vl" style="left:848px;width:112px">SHADOW_MG_Vocal_Phrase_With_U_A#m_134</div>
<div class="vl" style="left:966px;width:10px">SHADOW</div>
<div class="vl" style="left:982px;width:8px">SHADOW</div>
<div class="vl" style="left:996px;width:8px">SHADOW</div>
<div class="vl" style="left:1010px;width:10px">SHADOW</div>
<div class="vl" style="left:1026px;width:8px">SHADOW</div>
<div class="vl" style="left:1040px;width:8px">SHADOW</div>
<div class="vl" style="left:1054px;width:10px">SHADOW</div>
<div class="vl" style="left:1070px;width:8px">SHADOW</div>
<div class="vl" style="left:1084px;width:10px">SHADOW</div>
<div class="vl" style="left:1100px;width:8px">SHADOW</div>
<div class="vl" style="left:1114px;width:8px">SHADOW</div>
<div class="vl" style="left:1128px;width:10px">SHADOW</div>
<div class="vl" style="left:1144px;width:8px">SHADOW</div>
<div class="vl" style="left:1158px;width:8px">SHADOW</div>
<div class="vl" style="left:1172px;width:10px">SHADOW</div>
<div class="vl" style="left:1188px;width:8px">SHADOW</div>
<div class="vl" style="left:1202px;width:8px">SHADOW</div>
<div class="vl" style="left:1216px;width:10px">SHADOW</div>
<div class="vl" style="left:1232px;width:8px">SHADOW</div>
<div class="vl" style="left:1246px;width:10px">SHADOW</div>
<div class="vl" style="left:1262px;width:8px">SHADOW</div>
<div class="vl" style="left:1276px;width:8px">SHADOW</div>
<div class="vl" style="left:1290px;width:10px">SHADOW</div>
<div class="vl" style="left:1306px;width:8px">SHADOW</div>
<div class="vl" style="left:1320px;width:8px">SHADOW</div>
<div class="vl" style="left:1334px;width:10px">SHADOW</div>
<div class="vl" style="left:1350px;width:8px">SHADOW</div>
<div class="vl" style="left:1364px;width:8px">SHADOW</div>
<div class="vl" style="left:1378px;width:10px">SHADOW</div>
<div class="vl" style="left:1394px;width:8px">SHADOW</div>
<div class="vl" style="left:1408px;width:10px">SHADOW</div>
<div class="vl" style="left:1424px;width:8px">SHADOW</div>
<div class="vl" style="left:1674px;width:464px">SHADOW_MG_Vocal_Phrase_With_U_A#m_134</div>
<div class="vl" style="left:2144px;width:466px">SHADOW_MG_Vocal_Phrase_With_U_A#m_134</div>
<div class="vl" style="left:2616px;width:24px">SHADOW</div>
<div class="vl" style="left:2646px;width:22px">SHADOW</div>
<div class="vl" style="left:2674px;width:24px">SHADOW</div>
<div class="vl" style="left:2704px;width:24px">SHADOW</div>
<div class="vl" style="left:2734px;width:24px">SHADOW</div>
<div class="vl" style="left:2764px;width:22px">SHADOW</div>
<div class="vl" style="left:2792px;width:24px">SHADOW</div>
<div class="vl" style="left:2822px;width:24px">SHADOW</div>
<div class="vl" style="left:2852px;width:24px">SHADOW</div>
<div class="vl" style="left:2882px;width:22px">SHADOW</div>
<div class="vl" style="left:2910px;width:24px">SHADOW</div>
<div class="vl" style="left:2940px;width:24px">SHADOW</div>
<div class="vl" style="left:2970px;width:22px">SHADOW</div>
<div class="vl" style="left:2998px;width:24px">SHADOW</div>
<div class="vl" style="left:3028px;width:24px">SHADOW</div>
<div class="vl" style="left:3058px;width:24px">SHADOW</div>
<div class="th" style="left:3150px;top:214px;width:206px;height:104px;color:#15363e"><b style="left:36.5px;top:6px;line-height:24px">DRUMS</b></div>
<div class="th" style="left:3160px;top:322px;width:196px;height:34px;color:#15363e"><b style="left:36.5px;top:6px;line-height:24px">KICK</b></div>
<div class="th" style="left:3160px;top:360px;width:196px;height:34px;color:#15363e"><b style="left:36.5px;top:6px;line-height:24px">KICK 2</b></div>
<div class="th" style="left:3160px;top:398px;width:196px;height:34px;color:#15363e"><b style="left:36.5px;top:6px;line-height:24px">CRASH</b></div>
<div class="th" style="left:3160px;top:436px;width:196px;height:34px;color:#15363e"><b style="left:36.5px;top:6px;line-height:24px">SNARE UPFILTE</b></div>
<div class="th" style="left:3160px;top:474px;width:196px;height:34px;color:#15363e"><b style="left:36.5px;top:6px;line-height:24px">HAT 1</b></div>
<div class="th" style="left:3160px;top:512px;width:196px;height:34px;color:#15363e"><b style="left:36.5px;top:6px;line-height:24px">HAT 2</b></div>
<div class="th" style="left:3160px;top:550px;width:196px;height:34px;color:#15363e"><b style="left:36.5px;top:6px;line-height:24px">HAT 3</b></div>
<div class="th" style="left:3160px;top:588px;width:196px;height:34px;color:#15363e"><b style="left:36.5px;top:6px;line-height:24px">CLAP 2</b></div>
<div class="th" style="left:3160px;top:626px;width:196px;height:34px;color:#15363e"><b style="left:36.5px;top:6px;line-height:24px">SNARE</b></div>
<div class="th" style="left:3160px;top:664px;width:196px;height:34px;color:#15363e"><b style="left:36.5px;top:6px;line-height:24px">RIDE</b></div>
<div class="th" style="left:3150px;top:702px;width:206px;height:104px;color:#261c42"><b style="left:36.5px;top:6px;line-height:24px">INSTRUMENTS</b></div>
<div class="th" style="left:3160px;top:810px;width:196px;height:104px;color:#261c42"><b style="left:36.5px;top:6px;line-height:24px">CUT OF BUS</b></div>
<div class="th" style="left:3170px;top:918px;width:186px;height:70px;color:#261c42"><b style="left:36.5px;top:6px;line-height:24px">SIREN SYNTH</b></div>
<div class="th" style="left:3170px;top:992px;width:186px;height:104px;color:#261c42"><b style="left:36.5px;top:6px;line-height:24px">SQUARE SYNT</b></div>
<div class="th" style="left:3170px;top:1100px;width:186px;height:34px;color:#261c42"><b style="left:36.5px;top:6px;line-height:24px">GUITAR</b></div>
<div class="th" style="left:3170px;top:1138px;width:186px;height:104px;color:#261c42"><b style="left:36.5px;top:6px;line-height:24px">KEYS PAD</b></div>
<div class="th" style="left:3170px;top:1246px;width:186px;height:70px;color:#261c42"><b style="left:36.5px;top:6px;line-height:24px">REESE BASS</b></div>
<div class="th" style="left:3160px;top:1320px;width:196px;height:70px;color:#261c42"><b style="left:36.5px;top:6px;line-height:24px">BASS</b></div>
<div class="th" style="left:3160px;top:1394px;width:196px;height:34px;color:#261c42"><b style="left:36.5px;top:6px;line-height:24px">RUMBLE BASS</b></div>
<div class="th" style="left:3160px;top:1432px;width:196px;height:104px;color:#261c42"><b style="left:36.5px;top:6px;line-height:24px">ORGAN</b></div>
<div class="th" style="left:3160px;top:1540px;width:196px;height:104px;color:#261c42"><b style="left:36.5px;top:6px;line-height:24px">MAIN LD</b></div>
<div class="th" style="left:3160px;top:1648px;width:196px;height:34px;color:#261c42"><b style="left:36.5px;top:6px;line-height:24px">WN</b></div>
<div class="th" style="left:3160px;top:1686px;width:196px;height:68px;color:#261c42"><b style="left:36.5px;top:6px;line-height:24px">TRANS GATE SY</b></div>
<div class="th" style="left:3150px;top:1758px;width:206px;height:138px;color:#15363e"><b style="left:36.5px;top:6px;line-height:24px">VOCALS</b></div>
<div class="th" style="left:3150px;top:1900px;width:206px;height:68px;color:#10283c"><b style="left:36.5px;top:6px;line-height:24px">FX</b></div>
<div class="th" style="left:3150px;top:1986px;width:206px;height:34px;color:#43222a"><b style="left:40.5px;top:6px;line-height:24px;letter-spacing:0.5px">Main</b></div>
<div class="abs" style="left:3169px;top:141px;font-size:20px;line-height:24px;font-weight:bold;color:#c6c6c6;letter-spacing:0.3px">Set</div>
<div class="abs" style="left:3086px;top:1983px;font-size:35px;line-height:40px;font-weight:bold;color:#6a6a6a;letter-spacing:1.6px">1/1</div>
<div class="abs" style="left:3194px;top:2032px;font-size:21px;line-height:25px;color:#b6b6b6">1.00x</div>
<div class="abs" style="left:3289px;top:2033px;width:28px;text-align:center;font-size:20px;line-height:25px;color:#c0c0c0">H</div>
<div class="abs" style="left:3325px;top:2033px;width:28px;text-align:center;font-size:20px;line-height:25px;color:#c0c0c0">W</div>
<div id="top"><div id="topline"></div>
<svg class="abs" style="left:0;top:0" width="3420" height="92" viewBox="0 0 3420 92"><rect x="24" y="36" width="10" height="26" fill="#454545"/><rect x="38" y="36" width="20" height="26" fill="#454545"/><path d="M70 44h14l-7 10z" fill="#454545"/></svg><div class="b " style="left:108px;width:86px;">Link</div><div class="b " style="left:198px;width:52px;">Tap</div><div class="b " style="left:254px;width:84px;">147.00</div><div class="b " style="left:342px;width:34px;"><svg width="34" height="34" viewBox="0 0 34 34" style="position:absolute;left:0;top:0"><path d="M8 8v18" stroke="#b6b6b6" stroke-width="4"/><path d="M13 8v18M19 8v18M27 8v18" stroke="#b6b6b6" stroke-width="2"/></svg></div><div class="b " style="left:380px;width:34px;"><svg width="34" height="34" viewBox="0 0 34 34" style="position:absolute;left:0;top:0"><path d="M6.8 8v18M15 8v18M21 8v18" stroke="#b6b6b6" stroke-width="2"/><path d="M26 8v18" stroke="#b6b6b6" stroke-width="4"/></svg></div><div class="b " style="left:418px;width:84px;"><span style="left:14px;">4</span><svg width="84" height="34" viewBox="0 0 84 34" style="position:absolute;left:0;top:0"><path d="M38.2 23.8L45.6 11.8" stroke="#b6b6b6" stroke-width="1.9"/></svg><span style="left:58px;">4</span></div><div class="b " style="left:506px;width:78px;"><svg width="78" height="34" viewBox="0 0 78 34" style="position:absolute;left:0;top:0"><circle cx="18.9" cy="17" r="6.1" fill="none" stroke="#b6b6b6" stroke-width="1.9"/><circle cx="36.9" cy="17" r="7.1" fill="#b6b6b6"/><path d="M62 14.2h10l-5 6z" fill="#b6b6b6"/></svg></div><div class="b " style="left:588px;width:90px;"><span style="left:9px;">1 Bar</span><svg width="90" height="34" viewBox="0 0 90 34" style="position:absolute;left:0;top:0"><path d="M74 14.2h10l-5 6z" fill="#b6b6b6"/></svg></div><div class="b " style="left:720px;width:34px;"><span style="left:7px;font-size:19px;top:3px;font-weight:bold">&#9837;</span><span style="left:16.5px;font-size:15px;top:-5px;font-weight:bold">#</span></div><div class="b dim" style="left:758px;width:88px;"><span style="left:8px;">C</span><svg width="88" height="34" viewBox="0 0 88 34" style="position:absolute;left:0;top:0"><path d="M72 14.2h10l-5 6z" fill="#585858"/></svg></div><div class="b dim" style="left:850px;width:140px;"><span style="left:9px;">Major</span><svg width="140" height="34" viewBox="0 0 140 34" style="position:absolute;left:0;top:0"><path d="M124 14.2h10l-5 6z" fill="#585858"/></svg></div><div class="b " style="left:1220px;width:42px;"><svg width="42" height="34" viewBox="0 0 42 34" style="position:absolute;left:0;top:0"><path d="M6 17h9" stroke="#b6b6b6" stroke-width="2"/><path d="M14 10.5l10 6.5l-10 6.5z" fill="#b6b6b6"/><path d="M26.5 17h4M32.5 17h4" stroke="#b6b6b6" stroke-width="1.8"/></svg></div><div class="b " style="left:1266px;width:164px;"><span style="right:108.5px">1</span><span style="right:96px">.</span><span style="right:60.5px">1</span><span style="right:48px">.</span><span style="right:10.5px">1</span></div><div class="b " style="left:1854px;width:164px;"><span style="right:107.5px">1</span><span style="right:95px">.</span><span style="right:60px">1</span><span style="right:46.5px">.</span><span style="right:10.5px">1</span></div><div class="b " style="left:2160px;width:164px;"><span style="right:107px">106</span><span style="right:94.5px">.</span><span style="right:58.5px">0</span><span style="right:46px">.</span><span style="right:10.5px">0</span></div><svg class="abs" style="left:1460px;top:30px" width="140" height="40" viewBox="1460 30 140 40"><path d="M1470 34.5v30l26 -15z" fill="#b8b8b8"/><rect x="1516" y="36" width="26" height="26" fill="#b8b8b8"/><circle cx="1575" cy="49" r="13" fill="#b8b8b8"/></svg><div class="b " style="left:1626px;width:34px;"><svg width="34" height="34" viewBox="0 0 34 34" style="position:absolute;left:0;top:0"><path d="M8 17h18M17 8v18" stroke="#b6b6b6" stroke-width="1.8"/></svg></div><div class="b " style="left:1664px;width:34px;background:#f5b66c"><svg width="34" height="34" viewBox="0 0 34 34" style="position:absolute;left:0;top:0"><path d="M13.8 20.1l6.5 -6.4" stroke="#0c0c0c" stroke-width="2.2"/><circle cx="11" cy="22.8" r="3.8" fill="none" stroke="#0c0c0c" stroke-width="2.2"/><circle cx="23" cy="11" r="3.8" fill="none" stroke="#0c0c0c" stroke-width="2.2"/></svg></div><div class="b " style="left:1702px;width:34px;"><svg width="34" height="34" viewBox="0 0 34 34" style="position:absolute;left:0;top:0"><path d="M8 17l10 -6.5v13z" fill="#6a6a6a"/><path d="M17 17h10" stroke="#6a6a6a" stroke-width="2"/></svg></div><div class="b " style="left:1740px;width:34px;"><svg width="34" height="34" viewBox="0 0 34 34" style="position:absolute;left:0;top:0"><path d="M9 14v-5h5M20 9h5v5M25 20v5h-5M14 25h-5v-5" stroke="#6a6a6a" stroke-width="1.8" fill="none"/></svg></div><div class="b " style="left:1778px;width:34px;"><svg width="34" height="34" viewBox="0 0 34 34" style="position:absolute;left:0;top:0"><circle cx="17" cy="17" r="8" fill="none" stroke="#b6b6b6" stroke-width="1.8"/></svg></div><div class="b " style="left:2022px;width:42px;"><svg width="42" height="34" viewBox="0 0 42 34" style="position:absolute;left:0;top:0"><path d="M8 11h8.6l8.2 12h9" stroke="#b6b6b6" stroke-width="2.1" fill="none"/></svg></div><div class="b " style="left:2068px;width:42px;"><svg width="42" height="34" viewBox="0 0 42 34" style="position:absolute;left:0;top:0"><path d="M16 25h-4a3 3 0 0 1 -3 -3v-9.5a3 3 0 0 1 3 -3h18a3 3 0 0 1 3 3v9.5a3 3 0 0 1 -3 3h-4.5" stroke="#b6b6b6" stroke-width="2.1" fill="none"/><path d="M18.6 25l7.6 -4.8v9.6z" fill="#b6b6b6"/></svg></div><div class="b " style="left:2114px;width:42px;"><svg width="42" height="34" viewBox="0 0 42 34" style="position:absolute;left:0;top:0"><path d="M8 23h9l8.4 -12h8.6" stroke="#b6b6b6" stroke-width="2.1" fill="none"/></svg></div><div class="b " style="left:2788px;width:34px;"><svg width="34" height="34" viewBox="0 0 34 34" style="position:absolute;left:0;top:0"><path d="M6 27h22" stroke="#b6b6b6" stroke-width="1.8"/><path d="M10 23.5l0 -5.5l11 -10.5l6 5.5l-11 10.5z" fill="#b6b6b6"/></svg></div><div class="b " style="left:2826px;width:34px;"><svg width="34" height="34" viewBox="0 0 34 34" style="position:absolute;left:0;top:0"><rect x="7" y="7" width="20" height="20" fill="none" stroke="#b6b6b6" stroke-width="1.8"/><path d="M13.7 7v20M20.3 7v20" stroke="#b6b6b6" stroke-width="1.3"/><rect x="11.3" y="7" width="4.8" height="12" fill="#b6b6b6"/><rect x="17.9" y="7" width="4.8" height="12" fill="#b6b6b6"/></svg></div><div class="b " style="left:2864px;width:52px;">Key</div><div class="abs" style="left:2920px;top:32px;width:16px;height:16px;background:#363636"></div><div class="abs" style="left:2920px;top:50px;width:16px;height:16px;background:#363636"></div><div class="b " style="left:2940px;width:56px;">MIDI</div><div class="b " style="left:3000px;width:96px;">44.1 kHz</div><div class="b " style="left:3100px;width:112px;"><span style="left:28px;">0 %</span><svg width="112" height="34" viewBox="0 0 112 34" style="position:absolute;left:0;top:0"><path d="M96 14.2h10l-5 6z" fill="#b6b6b6"/></svg></div><div class="b " style="left:3216px;width:56px;"></div><div class="abs" style="left:3276px;top:32px;width:16px;height:16px;background:#363636"></div><div class="abs" style="left:3276px;top:50px;width:16px;height:16px;background:#363636"></div><svg class="abs" style="left:3320px;top:30px" width="90" height="40" viewBox="3320 30 90 40"><path d="M3328 36v25.5M3339 36v25.5M3350 36v25.5" stroke="#454545" stroke-width="4"/><path d="M3370 37.8h26M3370 49.3h26M3370 60h26" stroke="#f5b66c" stroke-width="3.6"/></svg>
</div>
</body></html>
